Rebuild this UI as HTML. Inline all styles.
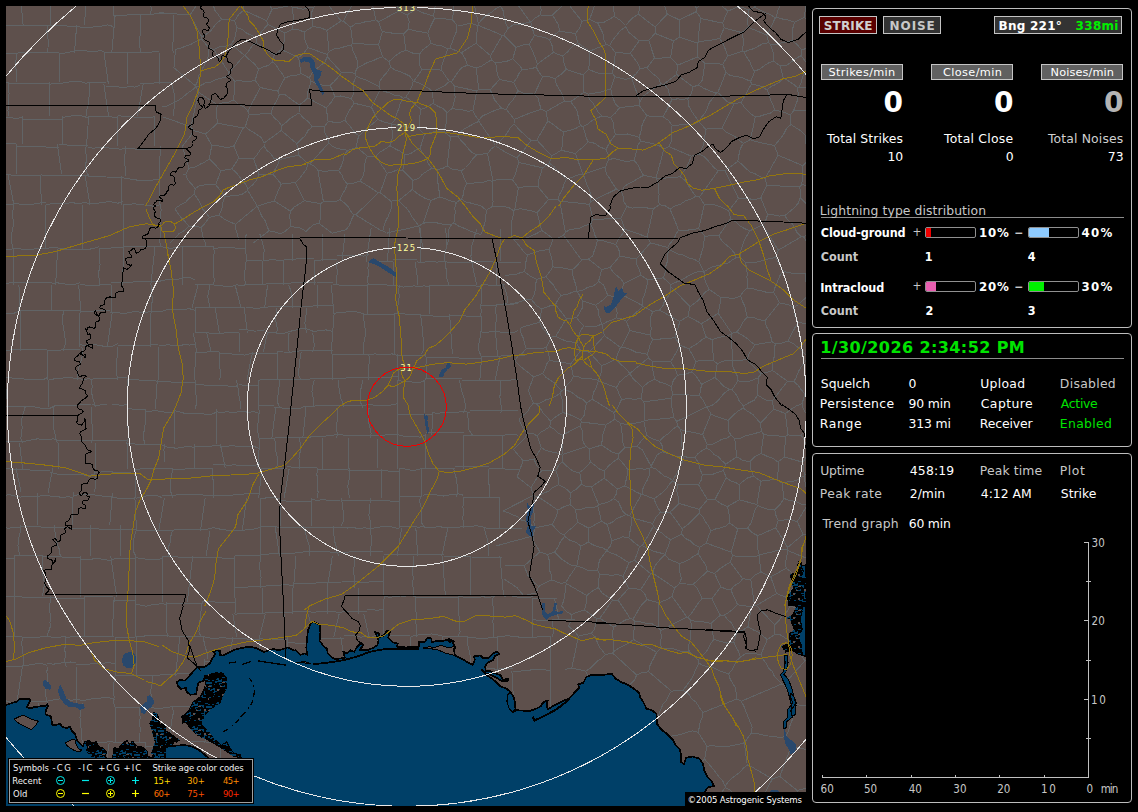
<!DOCTYPE html>
<html lang="en"><head><meta charset="utf-8"><title>Lightning Monitor</title>
<style>
html,body{margin:0;padding:0;background:#000;}
body{width:1138px;height:812px;position:relative;overflow:hidden;font-family:"DejaVu Sans","Liberation Sans",sans-serif;}
.abs{position:absolute;}
.t{position:absolute;white-space:pre;margin:0;padding:0;}
.t i{font-style:normal;}
.panel{position:absolute;border:1px solid #bdbdbd;border-radius:4px;background:#000;}
.b{position:absolute;border:1px solid #c4c4c4;}
.hr{position:absolute;height:1px;background:#8c8c8c;}
.bar{position:absolute;width:49px;height:9px;border:1px solid #909090;border-radius:2px;background:#000;overflow:hidden;}
.bar div{height:9px;}
#map{position:absolute;left:6px;top:6px;width:800px;height:800px;overflow:hidden;background:#5e504c;}
#legend{position:absolute;left:8px;top:758px;width:246px;height:46px;background:#000;}
#legend div{position:absolute;left:1px;top:1px;right:1px;bottom:1px;border:1px solid #a0a0a0;}
#copybox{position:absolute;left:685px;top:792px;width:121px;height:14px;background:#000;}
</style></head><body>
<div id="map"><svg width="800" height="800" viewBox="0 0 800 800"><g shape-rendering="crispEdges"><path d="M-20.0 -20.0 L15.4 -19.6M-21.7 -20.0 L-22.3 -14.3 L-22.5 -8.7 L-21.1 -3.2 L-21.4 2.5 L-20.0 8.0 L-19.8 13.6 L-18.3 19.1M15.4 -22.1 L44.5 -21.7M13.7 -20.0 L17.1 19.1M44.5 -19.2 L49.5 -18.0 L54.5 -17.8 L59.6 -17.3 L64.6 -18.0 L69.6 -16.8 L74.6 -16.4 L79.7 -18.8M44.5 -20.0 L44.5 19.1M79.7 -19.5 L85.2 -20.4 L90.8 -21.4 L96.3 -21.8 L101.9 -21.5 L107.4 -19.2M80.7 -20.0 L80.9 -14.4 L79.8 -8.9 L79.5 -3.3 L79.7 2.3 L79.5 7.9 L78.6 13.5 L78.6 19.1M-20.0 19.1 L-14.0 19.9 L-7.9 19.6 L-1.8 19.3M-20.0 19.1 L-18.8 24.7 L-18.0 30.4 L-19.2 36.0 L-18.4 41.7 L-20.0 47.3M-1.8 19.3 L41.9 19.8M-1.8 19.1 L-1.5 24.7 L-1.5 30.4 L-2.2 36.0 L-1.2 41.7 L-1.8 47.3M41.9 19.8 L69.5 20.1M41.9 19.1 L40.8 24.7 L41.8 30.4 L42.3 36.0 L42.0 41.7 L41.9 47.3M69.5 20.1 L74.9 21.3 L80.3 21.5 L85.7 21.1 L91.2 20.7 L96.6 19.9 L102.0 18.9 L107.4 20.6M70.7 19.1 L68.4 47.3M107.4 -20.0 L144.5 -21.3M107.4 -20.0 L107.4 9.5M144.5 -19.3 L149.7 -19.5 L154.9 -18.8 L160.0 -19.9 L165.2 -19.5 L170.5 -18.5 L175.7 -18.4 L180.8 -20.6M144.5 -20.0 L144.7 -14.1 L145.6 -8.2 L144.7 -2.3 L145.2 3.6 L144.5 9.5M107.4 9.5 L134.6 8.5M109.1 9.5 L105.7 47.3M134.6 8.5 L167.5 7.3M134.6 9.5 L134.0 14.9 L134.6 20.3 L134.6 25.7 L133.9 31.1 L133.4 36.5 L134.0 41.9 L134.6 47.3M167.5 9.5 L167.4 14.9 L168.0 20.3 L167.6 25.7 L167.7 31.1 L166.9 36.5 L166.5 41.9 L167.5 47.3M-20.0 47.3 L10.4 47.2M-20.0 47.3 L-20.0 76.3M10.4 47.2 L15.7 46.3 L21.1 47.4 L26.5 46.3 L31.8 46.1 L37.2 46.7 L42.5 46.8 L47.9 46.5 L53.3 47.0M10.4 47.3 L10.2 53.1 L9.4 58.9 L10.3 64.7 L10.7 70.5 L10.4 76.3M53.3 47.3 L58.5 47.2 L63.7 46.0 L68.9 44.9 L74.1 44.8 L79.4 44.7 L84.6 45.9 L89.8 45.3 L95.0 44.7 L100.2 47.2M53.3 47.3 L53.3 76.3M-20.0 76.3 L-14.4 75.7 L-8.8 76.6 L-3.2 76.4 L2.3 76.2M-20.0 76.3 L-19.1 81.9 L-17.9 87.6 L-18.5 93.3 L-18.7 98.9 L-17.5 104.6 L-20.0 110.2M2.3 77.8 L43.6 77.7M2.3 76.3 L2.1 81.9 L3.1 87.6 L2.5 93.3 L2.2 98.9 L2.0 104.6 L2.3 110.2M43.6 78.3 L49.0 77.1 L54.5 77.6 L59.9 76.5 L65.3 75.7 L70.7 75.7 L76.1 76.0 L81.5 78.1M43.6 76.3 L43.6 110.2M81.5 76.6 L100.2 76.5M83.0 76.3 L83.0 82.0 L83.8 87.8 L82.6 93.4 L82.1 99.0 L80.5 104.6 L80.0 110.2M100.2 46.6 L105.6 46.2 L111.0 46.4 L116.3 46.6 L121.7 46.0M98.1 47.3 L102.4 78.3M121.7 46.7 L153.3 45.8M121.7 47.3 L121.7 78.3M153.3 47.3 L153.3 78.3M100.2 80.3 L105.9 80.5 L111.6 80.7 L117.3 81.7 L123.0 80.6 L128.7 81.1 L134.3 79.4M97.9 78.3 L102.6 110.2M134.3 77.4 L166.5 76.5M137.1 78.3 L131.5 110.2M165.9 78.3 L167.2 83.6 L168.5 88.9 L168.1 94.2 L168.5 99.5 L167.8 104.9 L167.0 110.2M-20.0 110.2 L-14.8 110.5 L-9.6 111.0 L-4.3 110.5 L0.9 111.6 L6.1 111.9 L11.3 112.5 L16.6 110.7M-18.0 110.2 L-19.1 115.7 L-20.5 121.1 L-20.9 126.7 L-21.0 132.3 L-22.0 137.9M16.6 113.1 L56.8 113.7M16.6 110.2 L16.6 137.9M56.8 111.3 L63.0 110.3 L69.2 109.4 L75.4 109.7 L81.6 111.7M56.8 110.2 L56.8 137.9M-20.0 137.5 L10.5 137.9M-18.4 137.9 L-21.6 168.3M10.5 140.6 L53.5 141.2M10.5 137.9 L10.5 168.3M53.5 138.9 L81.6 139.3M51.3 137.9 L55.7 168.3M-20.0 168.3 L4.8 168.6M-22.2 168.3 L-17.8 198.5M4.8 169.4 L35.1 169.9M1.9 168.3 L7.8 198.5M35.1 169.0 L81.6 169.7M35.1 168.3 L34.5 173.3 L34.7 178.3 L34.5 183.4 L35.0 188.4 L35.7 193.4 L35.1 198.5M81.6 110.2 L111.8 111.2M82.7 110.2 L80.5 140.3M111.8 109.6 L117.0 110.2 L122.3 110.8 L127.5 110.9 L132.7 111.9 L138.0 111.7 L143.3 111.4 L148.5 110.8M111.8 110.2 L111.8 140.3M148.5 110.2 L148.5 140.3M81.6 141.2 L87.1 142.3 L92.6 141.5 L98.1 140.9 L103.5 142.2 L109.0 142.4 L114.4 143.3 L119.9 142.4M80.1 140.3 L79.3 145.4 L80.6 150.4 L80.1 155.5 L79.6 160.6 L80.2 165.6 L83.2 170.4M119.9 142.7 L153.8 143.8M119.9 140.3 L119.6 145.3 L118.4 150.3 L118.2 155.3 L119.1 160.4 L119.9 165.4 L119.9 170.4M154.3 140.3 L153.4 170.4M81.6 170.4 L115.7 171.5M79.3 170.4 L83.9 198.5M115.7 171.5 L121.1 172.7 L126.5 173.2 L131.9 174.3 L137.4 174.7 L142.8 174.6 L148.3 173.8 L153.8 172.8M115.7 170.4 L115.7 198.5M153.8 170.4 L153.8 198.5M-20.0 198.7 L7.3 198.0M-21.7 198.5 L-20.3 203.4 L-18.7 208.3 L-19.5 213.4 L-20.3 218.5 L-18.7 223.4 L-19.2 228.4 L-19.0 233.4 L-17.9 238.3 L-18.3 243.4M7.3 197.8 L12.7 198.0 L18.2 198.4 L23.6 198.7 L29.0 197.9 L34.4 196.9 L39.9 197.0M7.3 198.5 L7.0 204.1 L6.4 209.7 L7.6 215.3 L7.0 220.9 L5.8 226.6 L6.0 232.2 L5.9 237.8 L7.3 243.4M39.9 198.9 L45.0 197.7 L50.2 197.6 L55.4 197.4 L60.7 197.4 L65.8 196.5 L71.1 197.5 L76.3 198.0M39.9 198.5 L39.9 243.4M76.3 196.1 L81.4 197.1 L86.6 197.8 L91.6 197.1 L96.7 196.8 L101.8 195.5 L106.9 196.1 L112.1 197.2 L117.1 195.1M76.3 198.5 L76.3 243.4M-20.0 243.4 L-14.5 244.5 L-9.0 243.3 L-3.5 243.4 L1.9 243.5 L7.4 242.8M-20.9 243.4 L-19.4 248.4 L-18.9 253.5 L-18.3 258.5 L-18.6 263.6 L-18.9 268.7 L-19.8 273.8 L-19.1 278.9M7.4 242.7 L12.8 242.9 L18.2 243.2 L23.7 243.9 L29.0 242.8 L34.4 242.2 L39.8 242.4 L45.2 241.8 L50.6 241.7M7.4 243.4 L7.4 278.9M50.6 241.7 L56.0 242.6 L61.4 243.7 L66.7 243.8 L72.0 243.2 L77.4 243.5 L82.7 243.4 L88.1 242.2 L93.4 240.6M51.6 243.4 L49.6 278.9M93.4 242.3 L117.1 241.7M93.4 243.4 L93.4 248.5 L93.4 253.5 L94.1 258.6 L93.1 263.7 L92.5 268.7 L93.3 273.8 L93.4 278.9M117.1 198.1 L122.4 198.8 L127.8 197.7 L133.1 198.6 L138.4 199.0 L143.7 199.4 L149.0 200.6 L154.3 198.4M117.1 198.5 L117.1 240.2M154.3 198.5 L155.1 203.7 L154.6 208.9 L154.9 214.1 L155.0 219.3 L154.1 224.6 L154.4 229.8 L153.8 235.0 L154.3 240.2M117.1 240.2 L147.0 240.4M117.8 240.2 L116.5 278.9M147.0 240.4 L152.9 240.1 L158.8 241.3 L164.6 242.4 L170.6 241.4 L176.5 240.7M149.1 240.2 L144.8 278.9M176.5 240.7 L207.8 240.9M176.5 240.2 L176.5 278.9M207.8 242.7 L213.2 241.7 L218.6 241.2 L224.1 241.3 L229.5 242.1 L234.9 242.3 L240.3 243.0M207.8 240.2 L208.1 245.7 L207.9 251.3 L207.7 256.8 L207.2 262.3 L207.1 267.8 L208.2 273.3 L207.8 278.9M240.3 227.8 L239.4 233.2 L239.2 238.6 L239.6 244.0 L240.2 249.3 L240.3 254.7M253.8 227.8 L255.4 233.1 L256.9 238.4 L258.2 243.7 L257.7 249.2 L257.3 254.7M286.7 227.8 L286.7 254.7M316.1 227.8 L316.1 254.7M339.0 227.8 L336.1 254.7M240.3 254.7 L256.0 254.2M240.3 254.7 L239.2 260.8 L238.9 266.8 L238.5 272.8 L240.3 278.9M256.0 255.2 L261.4 254.2 L266.8 253.7 L272.2 254.2 L277.6 254.5M256.0 254.7 L256.0 278.9M277.6 253.4 L308.5 252.4M277.6 254.7 L277.6 278.9M308.5 254.2 L331.1 253.5M308.5 254.7 L308.5 278.9M331.1 249.2 L336.4 250.0 L341.6 249.6 L346.9 249.7 L352.1 249.3 L357.4 250.1 L362.6 248.1M331.1 254.7 L330.8 260.8 L331.5 266.8 L330.4 272.8 L331.1 278.9M365.1 222.2 L360.1 255.8M383.7 222.2 L383.4 227.8 L382.9 233.4 L382.8 239.0 L382.8 244.7 L381.2 250.2 L381.0 255.8M414.5 222.2 L414.5 255.8M439.0 222.2 L440.1 227.8 L440.5 233.4 L440.7 239.0 L439.7 244.6 L438.7 250.2 L439.0 255.8M362.6 255.8 L387.4 255.9M362.8 255.8 L361.9 261.5 L362.5 267.3 L361.6 273.1 L362.3 278.9M387.4 253.4 L410.7 253.5M387.4 255.8 L387.4 278.9M410.7 255.9 L415.7 256.4 L420.8 255.8 L425.8 255.0 L430.9 256.3 L435.9 255.1 L441.0 256.0M409.6 255.8 L410.0 261.6 L410.5 267.3 L412.0 273.0 L411.7 278.9M441.0 256.0 L468.1 256.1M439.0 255.8 L439.9 261.6 L440.6 267.4 L441.0 273.3 L442.9 278.9M471.1 222.9 L469.1 228.2 L467.7 233.5 L466.0 238.8 L465.4 244.2 L465.0 249.8 L465.1 255.4M494.2 222.9 L494.2 255.4M468.1 255.4 L490.1 256.1M465.6 255.4 L470.6 278.9M490.1 256.1 L514.5 256.9M490.1 255.4 L490.1 278.9M-20.0 277.5 L12.7 276.8M-20.4 278.9 L-19.9 284.1 L-20.0 289.4 L-20.5 294.7 L-20.3 300.0 L-19.6 305.3M12.7 277.0 L45.6 276.3M12.7 278.9 L13.6 284.2 L13.1 289.4 L13.7 294.7 L13.1 300.0 L12.7 305.3M45.6 277.3 L51.3 276.8 L56.9 277.8 L62.6 278.5 L68.3 278.8 L73.9 276.7M45.6 278.9 L45.6 305.3M-20.0 305.3 L-14.3 306.3 L-8.6 307.4 L-3.0 307.4 L2.7 307.3 L8.4 307.1 L14.0 304.5M-20.0 305.3 L-20.6 310.9 L-19.5 316.5 L-20.6 322.1 L-21.3 327.7 L-22.3 333.3 L-22.5 338.9 L-20.0 344.6M14.0 305.0 L57.3 304.0M14.0 305.3 L14.0 344.6M57.3 304.6 L73.9 304.2M57.3 305.3 L56.8 310.9 L56.6 316.5 L57.7 322.1 L58.3 327.7 L59.2 333.3 L59.1 338.9 L57.3 344.6M-20.0 345.6 L-0.1 345.1M-18.6 344.6 L-21.4 374.4M-0.1 344.1 L41.2 343.1M-0.1 344.6 L-0.1 374.4M41.2 344.3 L73.9 343.6M41.2 344.6 L41.2 374.4M73.9 278.9 L79.1 279.0 L84.3 279.6 L89.6 279.8 L94.8 278.9 L100.0 278.2 L105.2 278.0M72.7 278.9 L75.0 307.4M105.2 276.6 L145.1 275.5M105.2 278.9 L105.2 307.4M145.1 275.1 L150.6 276.0 L156.1 274.6 L161.6 273.4 L167.0 273.5 L172.5 273.1 L178.0 271.7 L183.5 271.5 L189.0 273.9M145.1 278.9 L145.4 284.6 L146.1 290.3 L146.1 296.0 L145.1 301.7 L145.1 307.4M73.9 305.4 L103.7 304.6M73.9 307.4 L73.9 341.1M103.7 306.6 L108.9 306.4 L114.1 307.0 L119.2 307.4 L124.3 306.2 L129.5 305.4 L134.7 306.2 L139.8 306.4 L144.9 305.5M106.1 307.4 L101.3 341.1M144.9 305.5 L150.5 305.6 L156.0 305.2 L161.4 303.7 L167.0 304.0 L172.5 303.9 L178.0 303.3 L183.5 302.7 L189.0 304.3M144.9 307.4 L144.9 341.1M73.9 338.7 L79.3 339.4 L84.7 338.3 L90.1 338.8 L95.5 339.9 L100.9 340.5 L106.3 340.3 L111.7 337.7M75.9 341.1 L76.5 346.8 L75.9 352.4 L74.1 357.8 L72.1 363.2 L71.4 368.7 L71.8 374.4M111.7 339.9 L152.4 338.8M111.7 341.1 L111.9 346.6 L111.0 352.2 L110.2 357.8 L110.9 363.3 L110.8 368.9 L111.7 374.4M152.4 339.0 L157.6 339.2 L162.9 338.8 L168.1 339.7 L173.4 339.6 L178.6 338.6 L183.8 339.1 L189.0 338.0M152.7 341.1 L152.1 374.4M189.0 278.9 L203.7 278.6M192.0 278.9 L186.1 301.8M203.7 278.6 L209.4 279.1 L215.1 279.8 L220.7 280.5 L226.4 280.3 L232.0 278.2M203.7 278.9 L202.9 284.6 L201.7 290.3 L202.9 296.1 L203.7 301.8M232.0 279.1 L260.1 278.7M229.1 278.9 L234.9 301.8M260.1 277.8 L284.6 277.4M261.6 278.9 L258.7 301.8M284.6 276.4 L311.1 276.0M282.6 278.9 L284.7 284.4 L285.9 290.1 L286.4 295.9 L286.6 301.8M311.1 277.0 L326.6 276.8M311.1 278.9 L311.1 301.8M189.0 301.8 L211.3 301.5M189.0 301.8 L189.0 326.9M211.3 301.5 L239.8 301.0M209.2 301.8 L213.3 326.9M239.8 301.0 L245.0 301.8 L250.2 302.5 L255.3 301.9 L260.5 301.3 L265.6 300.4 L270.8 300.6M238.3 301.8 L241.3 326.9M270.8 300.6 L301.0 300.1M270.8 301.8 L270.7 306.8 L269.4 311.9 L270.1 316.9 L271.3 321.9 L270.8 326.9M301.0 300.1 L326.6 299.7M301.0 301.8 L300.1 306.8 L299.9 311.9 L298.9 316.9 L299.4 321.9 L301.0 326.9M189.0 326.9 L203.0 326.7M187.2 326.9 L190.9 346.2M203.0 327.2 L208.0 327.9 L213.1 328.0 L218.1 326.9 L223.1 326.4 L228.1 326.8 L233.1 326.7M200.8 326.9 L205.2 346.2M233.1 324.0 L238.4 323.4 L243.6 324.2 L248.9 325.1 L254.1 324.8 L259.4 323.6M233.1 326.9 L233.1 346.2M259.4 325.9 L265.3 326.3 L271.2 327.2 L277.2 327.8 L283.1 325.5M261.4 326.9 L257.3 346.2M283.1 325.5 L289.0 324.3 L294.9 322.9 L300.8 323.0 L306.8 325.1M283.1 326.9 L282.2 333.3 L282.4 339.8 L283.1 346.2M306.8 325.6 L313.4 324.7 L320.0 323.9 L326.6 325.3M306.8 326.9 L307.4 333.3 L308.4 339.8 L306.8 346.2M189.0 346.2 L213.3 345.8M189.9 346.2 L188.2 374.4M213.3 348.0 L218.4 347.8 L223.6 347.5 L228.7 348.7 L233.8 348.5 L239.0 349.1 L244.1 347.6M213.3 346.2 L213.4 351.8 L213.5 357.5 L214.0 363.1 L214.8 368.8 L213.3 374.4M244.1 347.8 L271.4 347.4M247.0 346.2 L245.2 351.7 L244.1 357.4 L243.0 363.0 L242.0 368.7 L241.1 374.4M271.4 345.0 L277.4 346.0 L283.3 346.3 L289.2 345.6 L295.1 344.6M271.4 346.2 L271.4 374.4M295.1 344.5 L326.6 344.1M295.1 346.2 L294.2 351.8 L293.5 357.5 L292.9 363.1 L292.6 368.8 L295.1 374.4M326.6 278.9 L361.2 279.5M325.3 278.9 L327.9 307.6M361.2 278.7 L392.3 279.2M361.2 278.9 L361.2 307.6M392.3 280.1 L397.6 281.1 L402.8 280.5 L408.1 279.9 L413.3 280.4 L418.6 279.9 L423.8 280.6M393.5 278.9 L392.7 284.6 L393.2 290.4 L392.7 296.1 L391.2 301.8 L391.1 307.6M423.8 279.2 L474.8 280.1M423.8 278.9 L423.8 307.6M326.6 307.6 L331.8 306.7 L337.0 306.3 L342.2 305.8 L347.4 305.5 L352.6 306.2 L357.7 308.1M328.1 307.6 L325.1 348.3M357.7 308.1 L388.2 308.7M357.7 307.6 L357.6 312.7 L358.4 317.8 L359.2 322.8 L359.5 327.9 L358.6 333.0 L357.6 338.1 L357.7 343.2 L357.7 348.3M388.2 307.8 L414.9 308.3M388.2 307.6 L388.2 348.3M414.9 309.2 L419.9 309.4 L424.9 309.4 L429.9 310.7 L434.9 310.0 L440.0 310.9 L445.0 309.7M414.2 307.6 L415.1 312.6 L415.7 317.7 L416.5 322.8 L416.3 327.9 L417.4 332.9 L417.7 338.0 L417.8 343.1 L415.5 348.3M445.0 309.7 L474.8 310.3M443.6 307.6 L446.4 348.3M326.6 348.3 L362.7 349.0M326.6 348.3 L326.6 374.4M362.7 349.0 L368.6 347.8 L374.4 348.8 L380.2 348.8 L386.1 347.9 L391.9 349.5M362.7 348.3 L363.5 353.5 L362.9 358.8 L362.3 364.0 L362.2 369.2 L362.7 374.4M391.9 349.5 L419.7 350.0M391.0 348.3 L392.8 374.4M419.7 351.4 L474.8 352.4M419.7 348.3 L420.3 353.5 L420.0 358.8 L420.2 364.0 L420.5 369.2 L419.7 374.4M474.8 278.9 L480.8 278.9 L486.8 279.3 L492.9 279.4 L498.8 278.1M474.8 278.9 L475.4 283.9 L475.9 288.9 L475.9 293.9 L474.8 298.9M497.0 278.9 L499.2 283.7 L500.8 288.5 L501.5 293.6 L500.7 298.9M474.8 299.7 L490.3 299.2M474.8 298.9 L475.1 304.3 L474.9 309.7 L475.8 315.0 L475.9 320.4 L474.8 325.8M490.3 298.5 L511.7 297.9M490.3 298.9 L489.6 304.3 L490.2 309.7 L490.2 315.0 L489.0 320.4 L490.3 325.8M474.8 325.8 L480.1 326.9 L485.3 325.5 L490.5 325.3M474.8 325.8 L474.0 331.7 L472.8 337.7 L472.6 343.6 L474.8 349.6M490.5 325.3 L496.0 326.4 L501.4 326.1 L506.9 326.9 L512.3 324.6M489.5 325.8 L491.5 349.6M474.8 350.9 L491.7 350.4M475.8 349.6 L473.8 374.4M491.7 350.1 L519.4 349.2M494.3 349.6 L489.0 374.4M-20.0 374.5 L0.0 374.1M-20.0 374.4 L-20.0 400.9M0.0 372.0 L5.3 371.9 L10.5 373.0 L15.8 372.9 L21.0 373.2 L26.3 373.5 L31.5 373.7 L36.8 373.8 L42.0 371.2M-1.6 374.4 L-0.8 379.7 L0.4 385.0 L0.0 390.4 L1.7 395.5 L1.7 400.9M42.0 374.3 L47.0 373.1 L52.0 372.3 L57.0 372.0 L62.0 371.8 L67.0 372.0 L72.1 372.5 L77.1 373.5 L82.1 372.8 L87.1 373.4M42.0 374.4 L42.0 400.9M87.1 372.5 L121.0 371.8M85.1 374.4 L86.2 379.7 L85.7 385.2 L86.2 390.5 L88.0 395.7 L89.2 400.9M-20.0 400.9 L17.9 400.1M-17.2 400.9 L-22.8 437.3M17.9 400.1 L23.2 400.4 L28.5 400.8 L33.8 402.0 L39.1 402.2 L44.4 402.1 L49.6 399.5M19.2 400.9 L17.7 406.0 L16.1 411.2 L15.6 416.3 L16.2 421.6 L15.6 426.8 L14.8 432.0 L16.5 437.3M49.6 399.5 L85.5 398.7M47.8 400.9 L47.1 406.3 L47.6 411.4 L47.9 416.7 L47.5 422.0 L48.8 427.1 L49.7 432.2 L51.4 437.3M85.5 398.7 L90.5 399.2 L95.6 398.9 L100.7 399.0 L105.8 399.0 L110.9 398.6 L116.0 399.7 L121.0 398.0M85.5 400.9 L85.3 406.1 L85.0 411.3 L85.7 416.5 L86.6 421.7 L86.8 426.9 L86.6 432.1 L85.5 437.3M-20.0 436.4 L15.1 435.6M-20.0 437.3 L-21.0 442.3 L-22.0 447.4 L-22.5 452.4 L-22.5 457.4 L-20.0 462.5M15.1 435.4 L20.4 435.0 L25.8 433.8 L31.1 432.9 L36.5 433.2 L41.9 434.0 L47.3 432.8 L52.7 434.6M13.5 437.3 L16.6 462.5M52.7 434.7 L89.4 434.0M52.7 437.3 L52.7 462.5M89.4 435.0 L121.0 434.3M89.4 437.3 L89.4 462.5M121.0 373.6 L150.3 374.6M121.0 374.4 L121.0 402.8M150.3 375.5 L189.0 376.8M151.3 374.4 L149.3 402.8M189.0 378.1 L194.5 378.6 L199.9 379.3 L205.3 380.0 L210.8 379.2 L216.2 379.4 L221.6 380.0 L227.0 380.7 L232.5 379.6M189.0 374.4 L189.8 380.1 L189.4 385.8 L190.5 391.5 L190.7 397.2 L189.0 402.8M232.5 378.9 L252.8 379.6M230.4 374.4 L231.7 380.0 L232.6 385.7 L233.2 391.4 L234.5 397.0 L234.6 402.8M121.0 402.8 L139.0 403.5M121.4 402.8 L122.0 408.7 L121.6 414.5 L121.8 420.3 L122.7 426.2 L122.2 432.0 L120.6 437.7M139.0 405.8 L144.8 405.1 L150.6 404.7 L156.4 405.7 L162.2 406.9 L168.0 406.8M139.0 402.8 L139.2 408.7 L139.1 414.5 L139.0 420.3 L137.9 426.1 L137.2 431.9 L139.0 437.7M168.0 404.5 L173.3 405.9 L178.7 407.3 L184.0 407.5 L189.4 407.7 L194.8 407.9 L200.2 408.1 L205.5 408.3 L211.0 405.9M168.0 402.8 L168.0 437.7M211.0 405.9 L216.2 406.4 L221.5 405.6 L226.7 406.7 L231.9 405.9 L237.2 405.5 L242.4 406.3 L247.7 405.6 L252.8 407.4M210.9 402.8 L211.0 437.7M121.0 437.7 L159.0 439.1M121.0 437.7 L121.0 462.5M159.0 440.7 L164.9 441.7 L170.8 442.2 L176.7 441.3 L182.7 440.3 L188.5 441.7M159.0 437.7 L157.8 443.9 L158.9 450.1 L159.0 456.3 L159.0 462.5M188.5 440.1 L194.2 440.7 L199.8 440.6 L205.5 440.1 L211.2 439.2 L216.8 441.0M188.5 437.7 L188.5 462.5M216.8 441.0 L222.0 440.2 L227.2 439.5 L232.3 440.7 L237.4 440.5 L242.6 441.0 L247.8 440.3 L252.8 442.3M214.2 437.7 L219.4 462.5M252.8 374.4 L258.0 373.1 L263.1 373.4 L268.3 373.1 L273.5 373.9M252.8 374.4 L252.8 401.5M273.5 373.9 L308.2 372.9M273.5 374.4 L273.2 379.9 L272.5 385.3 L271.8 390.7 L271.5 396.1 L273.5 401.5M308.2 372.9 L334.9 372.2M308.2 374.4 L306.9 379.9 L305.9 385.3 L307.0 390.7 L307.5 396.1 L308.2 401.5M334.9 372.3 L340.3 372.0 L345.8 371.5 L351.2 371.6 L356.6 371.8M332.6 374.4 L332.5 380.0 L333.7 385.4 L334.3 390.9 L336.3 396.1 L337.3 401.5M356.6 371.8 L391.8 370.8M356.6 374.4 L355.6 379.9 L354.4 385.3 L354.7 390.7 L354.5 396.1 L356.6 401.5M252.8 399.7 L267.8 399.3M252.8 401.5 L253.3 406.6 L252.4 411.8 L252.1 417.0 L251.0 422.1 L252.0 427.3 L252.8 432.4M267.8 401.1 L272.9 401.3 L278.0 402.4 L283.1 402.6 L288.3 403.0 L293.4 402.9 L298.4 400.3M269.8 401.5 L265.8 432.4M298.4 400.3 L330.8 399.4M300.0 401.5 L296.8 432.4M330.8 399.8 L363.6 398.9M330.8 401.5 L331.8 406.6 L331.7 411.8 L330.8 417.0 L330.1 422.1 L331.3 427.3 L330.8 432.4M363.6 398.5 L369.3 399.3 L374.9 400.0 L380.6 399.6 L386.2 398.8 L391.8 397.7M363.1 401.5 L362.6 406.7 L362.7 411.8 L362.8 417.0 L364.0 422.1 L365.1 427.2 L364.0 432.4M252.8 432.5 L258.4 432.1 L263.9 432.3 L269.4 432.0M253.8 432.4 L251.8 462.5M269.4 432.0 L293.2 431.3M268.3 432.4 L269.8 437.4 L269.7 442.4 L270.2 447.4 L271.8 452.3 L271.6 457.3 L270.6 462.5M293.2 431.3 L316.4 430.7M293.2 432.4 L294.4 437.4 L295.0 442.4 L293.8 447.4 L292.9 452.5 L293.7 457.5 L293.2 462.5M316.4 430.7 L321.6 429.8 L326.8 429.3 L332.0 428.3 L337.2 429.0 L342.4 430.0M316.4 432.4 L316.4 462.5M342.4 430.0 L371.4 429.2M342.4 432.4 L342.4 462.5M371.4 429.2 L391.8 428.7M371.0 432.4 L371.8 462.5M391.8 374.4 L397.3 375.4 L402.7 375.6 L408.1 376.2 L413.5 376.9 L418.9 374.3M391.8 374.4 L391.8 406.7M418.9 372.8 L455.6 372.7M418.9 374.4 L418.9 406.7M455.6 374.2 L494.9 374.1M453.4 374.4 L454.5 379.8 L455.6 385.1 L457.5 390.3 L458.8 395.6 L459.5 401.0 L457.8 406.7M494.9 374.1 L500.8 374.9 L506.6 373.6 L512.4 374.0M494.9 374.4 L494.2 379.8 L494.9 385.2 L493.8 390.6 L494.5 396.0 L495.5 401.4 L494.9 406.7M391.8 408.8 L426.1 408.7M391.8 406.7 L391.8 428.8M426.1 406.6 L431.5 407.5 L436.9 406.5 L442.2 406.9 L447.6 406.3 L453.0 406.0 L458.4 405.4 L463.8 406.5M426.3 406.7 L425.9 428.8M463.8 404.9 L512.4 404.7M461.4 406.7 L462.1 412.4 L462.1 418.1 L462.8 423.7 L466.1 428.8M391.8 428.8 L397.4 430.1 L403.0 430.5 L408.6 430.2 L414.2 431.2 L419.7 428.7M391.8 428.8 L391.8 462.5M419.7 427.0 L457.8 426.8M419.7 428.8 L419.7 462.5M457.8 429.8 L496.6 429.6M457.8 428.8 L457.8 462.5M496.6 429.1 L501.9 428.9 L507.1 428.7 L512.4 429.1M496.6 428.8 L496.6 462.5M-20.0 462.7 L-14.6 463.9 L-9.1 463.1 L-3.7 463.3 L1.8 462.8 L7.2 463.3 L12.6 463.8M-21.9 462.5 L-18.1 486.5M12.6 463.6 L44.3 464.7M10.0 462.5 L15.2 486.5M44.3 466.5 L49.8 467.7 L55.2 469.0 L60.7 468.0 L66.2 468.1 L71.6 468.2 L77.1 468.7 L82.5 470.1 L88.0 468.1M46.6 462.5 L42.1 486.5M88.0 467.2 L93.3 466.3 L98.5 465.3 L103.8 465.2 L108.9 466.7 L114.2 466.0 L119.4 466.7 L124.6 466.7 L129.7 468.7M88.0 462.5 L88.9 468.5 L89.7 474.5 L89.8 480.5 L88.0 486.5M-20.0 486.5 L-14.2 487.6 L-8.4 489.0 L-2.5 487.1M-20.0 486.5 L-20.6 491.9 L-19.8 497.4 L-20.7 502.8 L-20.8 508.2 L-20.3 513.6 L-20.0 519.1M-2.5 489.5 L3.3 488.7 L8.9 489.9 L14.6 491.1 L20.4 490.1 L26.0 490.9 L31.8 490.7M-2.5 486.5 L-2.5 519.1M31.8 490.3 L36.8 489.6 L41.8 489.5 L46.8 490.6 L51.8 490.6 L56.8 491.8 L61.8 490.7 L66.8 491.5M31.8 486.5 L31.8 519.1M66.8 489.6 L72.3 488.8 L77.8 489.0 L83.3 488.4 L88.7 489.0 L94.2 489.6 L99.6 491.0 L105.1 490.9M67.1 486.5 L66.5 519.1M105.1 490.9 L111.2 492.1 L117.4 492.2 L123.5 492.9 L129.7 491.8M106.4 486.5 L103.8 519.1M-20.0 520.9 L-14.2 520.7 L-8.5 520.6 L-2.8 521.8 L3.0 522.1 L8.8 521.4 L14.5 522.1M-21.8 519.1 L-18.2 550.0M14.5 520.3 L51.5 521.6M14.5 519.1 L14.6 524.2 L13.4 529.4 L12.3 534.5 L12.0 539.7 L12.6 544.8 L14.5 550.0M51.5 521.6 L84.3 522.7M48.8 519.1 L48.8 524.4 L49.7 529.5 L50.4 534.7 L52.0 539.8 L53.8 544.7 L54.1 550.0M84.3 522.7 L114.2 523.8M84.3 519.1 L84.3 550.0M114.2 523.0 L129.7 523.5M114.2 519.1 L114.2 550.0M129.7 463.1 L167.0 462.2M129.7 462.5 L129.7 491.6M167.0 463.3 L207.1 462.3M167.0 462.5 L165.8 468.3 L164.6 474.1 L164.5 479.9 L164.7 485.8 L167.0 491.6M207.1 458.2 L212.3 458.4 L217.6 458.6 L222.9 459.5 L228.1 458.7 L233.4 459.6 L238.6 459.9 L243.9 459.7 L249.1 459.6 L254.3 457.0M206.9 462.5 L207.2 491.6M129.7 492.2 L134.9 491.2 L140.0 490.0 L145.2 489.3 L150.4 489.2 L155.6 491.5M128.9 491.6 L130.6 525.0M155.6 489.4 L196.8 488.3M158.5 491.6 L152.7 525.0M196.8 489.8 L238.4 488.7M199.2 491.6 L194.4 525.0M238.4 487.7 L254.3 487.3M240.6 491.6 L236.3 525.0M129.7 525.0 L164.2 524.1M129.7 525.0 L128.5 530.0 L127.3 535.0 L127.5 540.0 L127.2 545.0 L129.7 550.0M164.2 524.1 L202.1 523.1M166.2 525.0 L164.9 529.9 L164.6 535.0 L162.9 539.8 L162.6 544.9 L162.2 550.0M202.1 522.8 L207.3 521.7 L212.5 522.8 L217.8 523.9 L223.0 524.2 L228.2 524.6 L233.5 524.4 L238.7 524.0 L243.9 523.8 L249.1 522.8 L254.3 521.4M204.0 525.0 L200.1 550.0M254.3 462.5 L280.6 463.0M255.9 462.5 L252.7 492.4M280.6 460.9 L311.5 461.6M283.2 462.5 L278.0 492.4M311.5 463.6 L316.8 463.7 L322.1 463.6 L327.4 463.1 L332.7 463.5 L338.0 463.2 L343.3 464.3M311.5 462.5 L310.8 468.4 L312.0 474.4 L311.5 480.4 L312.1 486.4 L311.5 492.4M343.3 464.3 L375.6 464.9M343.3 462.5 L343.6 468.4 L343.0 474.4 L341.7 480.4 L342.8 486.4 L343.3 492.4M375.6 465.0 L381.5 464.9 L387.5 466.0 L393.5 465.3M375.6 462.5 L375.6 492.4M254.3 492.4 L261.0 491.9 L267.6 491.8 L274.2 492.8M254.3 492.4 L254.3 520.3M274.2 494.9 L305.4 495.5M274.2 492.4 L274.2 520.3M305.4 493.4 L311.3 494.5 L317.3 493.4 L323.3 494.7 L329.2 494.1 L335.2 494.0M305.4 492.4 L305.4 520.3M335.2 494.0 L364.3 494.6M335.2 492.4 L336.4 497.9 L336.9 503.5 L337.6 509.1 L337.5 514.7 L335.2 520.3M364.3 494.6 L393.5 495.2M364.3 492.4 L364.0 497.9 L363.5 503.5 L362.9 509.1 L364.1 514.7 L364.3 520.3M254.3 520.3 L271.3 520.6M254.3 520.3 L254.3 550.0M271.3 521.2 L300.5 521.8M269.1 520.3 L273.5 550.0M300.5 521.2 L330.1 521.8M297.6 520.3 L299.0 525.1 L300.2 530.0 L301.7 534.9 L303.4 539.7 L303.8 544.8 L303.4 550.0M330.1 521.8 L335.8 521.8 L341.5 522.0 L347.2 521.8 L352.9 522.3 L358.7 521.9 L364.4 522.6M327.4 520.3 L327.5 525.4 L328.1 530.4 L328.7 535.4 L330.0 540.2 L330.7 545.2 L332.7 550.0M364.4 522.6 L370.2 521.6 L376.1 520.7 L381.9 520.6 L387.7 521.2 L393.5 523.2M364.4 520.3 L364.5 526.2 L365.6 532.2 L365.5 538.1 L364.2 544.0 L364.4 550.0M393.5 462.5 L398.9 463.0 L404.3 464.1 L409.8 464.2 L415.2 462.6M393.5 462.5 L393.5 490.8M415.2 462.6 L449.1 462.7M415.2 462.5 L415.2 490.8M449.1 460.8 L482.9 460.9M447.5 462.5 L449.0 468.0 L450.6 473.6 L451.1 479.3 L451.7 485.0 L450.7 490.8M482.9 462.9 L513.3 463.1M482.0 462.5 L483.8 490.8M393.5 490.2 L416.5 490.3M393.5 490.8 L393.5 521.6M416.5 489.1 L421.6 488.8 L426.8 488.2 L431.9 489.1 L437.0 490.1 L442.1 489.2 L447.3 488.4 L452.4 487.8 L457.5 489.3M414.1 490.8 L413.9 496.1 L415.0 501.2 L415.5 506.4 L415.3 511.7 L415.6 516.8 L418.9 521.6M457.5 491.2 L493.3 491.4M457.5 490.8 L457.9 496.0 L456.7 501.1 L457.9 506.2 L456.6 511.3 L457.4 516.5 L457.5 521.6M493.3 490.8 L493.3 521.6M393.5 520.5 L410.8 520.6M395.7 521.6 L391.3 550.0M410.8 521.8 L416.4 520.5 L422.0 521.5 L427.7 521.6 L433.3 520.4 L438.9 521.9M409.8 521.6 L411.8 550.0M438.9 521.8 L444.1 521.5 L449.2 521.3 L454.4 521.0 L459.5 520.5 L464.7 520.6 L469.8 519.7 L475.0 520.4 L480.1 522.0M441.9 521.6 L435.9 550.0M480.1 522.0 L516.3 522.2M478.0 521.6 L479.5 527.2 L481.4 532.7 L482.2 538.4 L482.4 544.2 L482.2 550.0M-20.0 552.2 L8.5 552.7M-20.0 550.0 L-20.0 590.5M8.5 549.4 L36.9 549.9M8.5 550.0 L8.5 590.5M36.9 550.7 L74.6 551.3M36.9 550.0 L36.9 555.0 L36.7 560.1 L36.3 565.2 L37.1 570.2 L38.1 575.3 L38.1 580.3 L37.1 585.4 L36.9 590.5M74.6 553.2 L80.1 553.7 L85.6 553.2 L91.2 552.0 L96.6 553.3 L102.2 554.3 L107.7 553.7M74.6 550.0 L74.6 590.5M107.7 552.4 L129.7 552.7M104.7 550.0 L110.6 590.5M-20.0 590.5 L8.3 590.9M-18.5 590.5 L-17.7 595.6 L-17.6 600.8 L-17.1 605.9 L-17.7 611.0 L-19.2 616.1 L-20.2 621.1 L-19.4 626.3 L-21.5 631.3M8.3 590.9 L42.6 591.4M8.3 590.5 L8.3 631.3M42.6 591.9 L78.3 592.5M44.5 590.5 L44.1 595.6 L43.8 600.7 L43.9 605.8 L44.4 611.0 L44.0 616.1 L44.1 621.3 L42.4 626.3 L40.6 631.3M78.3 590.3 L107.1 590.8M78.3 590.5 L78.3 631.3M107.1 594.4 L129.7 594.7M108.3 590.5 L106.0 631.3M129.7 551.7 L135.0 552.4 L140.3 553.2 L145.7 553.1 L151.0 553.7 L156.4 552.3M129.7 550.0 L129.7 596.2M156.4 550.6 L184.0 551.3M156.4 550.0 L156.4 596.2M184.0 551.3 L228.9 552.3M186.7 550.0 L181.3 596.2M129.7 597.9 L134.8 599.2 L140.0 600.2 L145.2 599.0 L150.4 598.6 L155.6 597.5 L160.7 598.6M129.7 596.2 L129.7 631.3M160.7 597.1 L195.8 597.9M160.3 596.2 L161.1 631.3M195.8 595.7 L228.9 596.5M196.3 596.2 L195.6 601.2 L194.9 606.2 L194.8 611.2 L193.5 616.2 L193.1 621.2 L193.0 626.2 L195.3 631.3M228.9 550.0 L254.5 549.1M228.9 550.0 L228.9 581.9M254.5 548.3 L288.8 547.1M254.5 550.0 L254.1 555.3 L253.5 560.6 L254.3 566.0 L255.1 571.3 L254.2 576.6 L254.5 581.9M288.8 546.3 L323.8 545.1M290.0 550.0 L287.6 581.9M323.8 546.6 L349.0 545.8M326.4 550.0 L321.2 581.9M349.0 546.0 L377.6 545.0M349.0 550.0 L348.9 555.3 L348.1 560.6 L347.5 566.0 L348.4 571.3 L348.4 576.6 L349.0 581.9M228.9 581.5 L256.2 580.5M228.8 581.9 L228.0 587.2 L229.1 592.4 L229.1 597.6 L229.7 602.9 L228.9 608.1M256.2 581.0 L261.3 579.8 L266.4 579.8 L271.5 579.8 L276.6 578.6 L281.7 578.8 L286.9 579.9M256.2 581.9 L256.2 608.1M286.9 577.8 L321.6 576.6M286.9 581.9 L286.9 608.1M321.6 576.5 L352.5 575.4M321.6 581.9 L321.6 608.1M352.5 576.3 L357.6 576.9 L362.5 576.1 L367.5 575.3 L372.6 575.9 L377.6 575.4M352.3 581.9 L352.7 608.1M228.9 608.1 L256.4 607.1M226.9 608.1 L230.8 631.3M256.4 607.1 L278.8 606.3M259.3 608.1 L253.5 631.3M278.8 606.3 L305.1 605.4M278.8 608.1 L278.8 631.3M305.1 606.2 L330.4 605.3M302.3 608.1 L307.9 631.3M330.4 606.2 L360.5 605.2M333.1 608.1 L327.7 631.3M360.5 603.5 L366.2 603.5 L371.9 604.4 L377.6 602.9M357.9 608.1 L363.2 631.3M377.6 548.7 L407.2 549.0M377.6 550.0 L377.6 589.0M407.2 548.7 L437.9 549.0M407.2 550.0 L407.1 555.6 L407.0 561.1 L406.7 566.7 L407.2 572.3 L406.6 577.8 L407.4 583.4 L407.2 589.0M437.9 550.7 L464.9 551.0M436.4 550.0 L439.3 589.0M464.9 551.0 L495.7 551.4M464.9 550.0 L464.9 589.0M493.9 550.0 L497.5 589.0M377.6 590.5 L383.0 591.1 L388.5 590.9 L393.9 590.0 L399.4 590.1 L404.8 589.5 L410.2 590.9M378.1 589.0 L377.1 631.3M410.2 591.5 L451.7 592.0M410.2 589.0 L409.2 594.3 L409.5 599.5 L409.9 604.8 L410.6 610.1 L409.6 615.4 L410.3 620.7 L410.6 626.0 L410.2 631.3M451.7 589.9 L456.8 591.0 L461.9 591.4 L467.0 591.6 L472.1 591.4 L477.2 590.7 L482.3 591.9 L487.4 590.3M451.9 589.0 L452.7 594.3 L452.6 599.6 L452.0 604.8 L453.0 610.1 L453.9 615.4 L453.8 620.7 L454.1 626.0 L451.6 631.3M487.4 590.3 L493.0 589.3 L498.6 590.1 L504.3 589.6 L509.9 590.8 L515.5 591.7 L521.1 592.0 L526.7 590.7M487.4 589.0 L486.8 594.3 L487.0 599.5 L487.4 604.8 L487.7 610.1 L486.8 615.4 L487.7 620.7 L487.2 626.0 L487.4 631.3M526.7 592.7 L550.6 592.9M526.7 592.2 L526.7 613.9M548.1 592.2 L549.6 597.5 L551.0 602.9 L551.4 608.6 L553.1 613.9M526.7 613.9 L533.2 614.1 L539.6 614.6 L546.1 614.0M526.7 613.9 L526.7 631.3M546.1 613.0 L568.9 613.2M546.1 613.9 L546.7 619.7 L547.8 625.5 L546.1 631.3M-20.0 631.3 L16.5 630.5M-22.4 631.3 L-21.3 636.2 L-20.2 641.1 L-18.2 645.8 L-18.0 650.8 L-18.0 655.9 L-17.6 660.9M16.5 631.2 L22.0 631.0 L27.4 631.6 L32.9 631.2 L38.3 630.5 L43.7 630.8 L49.2 631.5 L54.6 631.1 L60.1 630.2M16.5 631.3 L15.8 637.2 L16.3 643.1 L17.2 649.1 L17.9 655.0 L16.5 660.9M60.1 631.1 L109.0 630.0M59.8 631.3 L59.8 637.2 L58.7 643.2 L59.5 649.1 L58.5 655.0 L60.3 660.9M-20.0 660.9 L-14.4 659.8 L-8.8 659.9 L-3.2 660.9 L2.4 661.0 L8.0 660.4 L13.6 660.2M-22.2 660.9 L-21.4 666.0 L-21.5 671.2 L-19.6 676.2 L-19.9 681.4 L-18.6 686.5 L-17.5 691.5 L-17.8 696.8M13.6 660.2 L19.1 659.9 L24.7 658.6 L30.2 657.9 L35.7 657.4 L41.3 659.6M16.4 660.9 L10.8 696.8M41.3 657.3 L47.1 658.2 L52.9 657.4 L58.6 656.2 L64.4 656.0 L70.2 656.6M41.3 660.9 L40.9 666.0 L41.8 671.2 L40.9 676.3 L40.1 681.4 L39.6 686.5 L40.1 691.7 L41.3 696.8M70.2 658.9 L75.7 658.1 L81.3 658.7 L86.8 657.4 L92.4 657.1 L97.9 657.1 L103.5 656.6 L109.0 658.1M70.2 660.9 L70.2 696.8M-20.0 696.8 L-14.0 695.7 L-8.0 695.6 L-2.0 694.2 L4.1 696.2M-20.0 696.8 L-21.2 701.8 L-21.3 706.9 L-22.3 712.0 L-21.8 717.0 L-22.5 722.1 L-21.9 727.1 L-22.5 732.2 L-20.0 737.3M4.1 696.2 L33.5 695.6M4.1 696.8 L4.1 737.3M33.5 695.6 L38.8 695.7 L44.2 694.5 L49.5 693.7 L54.8 692.6 L60.2 693.5 L65.6 694.3 L70.9 693.1 L76.3 694.7M32.3 696.8 L34.7 737.3M76.3 694.7 L81.7 693.6 L87.2 692.7 L92.6 692.2 L98.1 691.7 L103.5 691.8 L109.0 693.9M76.3 696.8 L75.2 701.8 L74.2 706.9 L74.0 712.0 L74.5 717.0 L75.0 722.1 L75.6 727.1 L75.8 732.2 L76.3 737.3M109.0 631.3 L130.5 631.0M109.0 631.3 L109.0 669.8M130.5 631.0 L135.7 630.4 L140.8 629.7 L145.9 629.7 L151.1 630.0 L156.2 629.3 L161.3 629.7 L166.5 630.5 L171.6 630.5M130.5 631.3 L130.5 669.8M171.6 630.7 L199.4 630.4M173.8 631.3 L169.4 669.8M109.0 669.8 L146.0 669.3M109.0 669.8 L108.2 675.1 L107.2 680.3 L107.3 685.6 L108.2 690.9 L107.4 696.1 L109.0 701.4M146.0 669.3 L151.4 669.6 L156.7 668.3 L162.0 668.7 L167.4 668.9 L172.7 667.7 L178.0 667.0 L183.4 668.1 L188.7 668.5 L194.1 669.6 L199.4 668.7M146.0 669.8 L146.6 675.1 L145.4 680.3 L144.6 685.6 L145.6 690.9 L145.9 696.1 L146.0 701.4M109.0 701.4 L133.8 701.1M109.0 701.4 L109.0 737.3M133.8 701.1 L139.2 701.8 L144.7 701.4 L150.1 702.5 L155.5 702.2 L161.0 701.5 L166.4 700.7M133.8 701.4 L133.4 706.5 L134.3 711.6 L133.4 716.8 L134.2 721.9 L134.0 727.0 L133.1 732.1 L133.8 737.3M166.4 700.3 L199.4 699.9M166.4 701.4 L167.5 706.5 L166.3 711.6 L165.5 716.8 L164.7 721.9 L164.9 727.0 L165.2 732.1 L166.4 737.3M199.4 631.3 L204.5 632.1 L209.5 632.5 L214.6 631.7 L219.7 632.0 L224.8 632.3M197.1 631.3 L198.3 636.8 L199.5 642.2 L201.7 647.5 L201.7 653.2M224.8 632.4 L253.4 633.5M227.0 631.3 L222.6 653.2M253.4 632.4 L258.9 633.3 L264.5 632.9 L270.0 633.3 L275.6 633.6 L281.1 633.5M253.4 631.3 L253.4 653.2M281.1 636.7 L302.4 637.5M281.5 631.3 L280.8 653.2M199.4 655.4 L205.9 654.9 L212.5 654.7 L218.9 656.1M198.4 653.2 L200.4 685.6M218.9 654.0 L248.4 655.2M218.9 653.2 L219.3 658.6 L218.1 664.0 L217.0 669.4 L216.4 674.8 L216.9 680.2 L218.9 685.6M248.4 656.2 L271.8 657.1M250.2 653.2 L249.8 658.6 L250.4 664.2 L250.9 669.7 L250.3 675.1 L249.5 680.5 L246.6 685.6M271.8 655.3 L302.4 656.5M271.8 653.2 L272.1 658.6 L272.8 664.0 L272.5 669.4 L273.3 674.8 L273.7 680.2 L271.8 685.6M199.4 686.3 L206.0 685.3 L212.5 685.7 L218.9 687.0M199.4 685.6 L199.4 713.8M218.9 684.0 L243.1 684.9M216.7 685.6 L218.0 691.2 L219.7 696.7 L219.9 702.5 L221.3 708.0 L221.1 713.8M243.1 687.5 L248.2 686.8 L253.3 687.4 L258.4 686.9 L263.4 688.4 L268.5 688.5M243.1 685.6 L243.5 691.3 L243.0 696.9 L243.7 702.6 L244.1 708.2 L243.1 713.8M268.5 688.4 L302.4 689.7M268.5 685.6 L269.2 691.3 L269.9 696.9 L271.0 702.6 L270.2 708.2 L268.5 713.8M199.4 713.8 L227.0 714.9M200.2 713.8 L199.1 719.6 L199.9 725.6 L199.7 731.5 L198.6 737.3M227.0 715.2 L256.7 716.4M227.0 713.8 L227.0 737.3M256.7 716.1 L282.5 717.2M256.7 713.8 L256.8 719.7 L256.9 725.5 L255.9 731.4 L256.7 737.3M282.5 717.2 L302.4 718.0M282.5 713.8 L282.5 737.3M302.4 632.6 L337.6 632.3M300.1 631.3 L304.8 666.7M337.6 629.1 L343.1 629.7 L348.6 629.9 L354.1 631.1 L359.6 630.8 L365.1 631.4 L370.6 628.8M334.8 631.3 L340.3 666.7M370.6 629.8 L404.5 629.5M371.6 631.3 L369.6 666.7M404.5 630.4 L409.8 629.4 L415.1 628.4 L420.4 628.5 L425.8 627.9 L431.1 628.9 L436.4 630.1M404.5 631.3 L404.5 666.7M302.4 666.7 L331.8 666.4M302.4 666.7 L301.2 671.9 L301.3 677.1 L300.2 682.4 L299.9 687.6 L299.9 692.8 L302.4 698.1M331.8 666.4 L373.6 666.0M332.1 666.7 L331.5 698.1M373.6 666.0 L379.2 665.2 L384.8 666.3 L390.4 665.7 L396.0 665.9 L401.6 665.3 L407.1 665.7M373.6 666.7 L373.6 698.1M407.1 666.9 L436.4 666.6M405.8 666.7 L408.5 698.1M302.4 698.6 L333.4 698.3M304.0 698.1 L300.8 737.3M333.4 697.8 L368.8 697.5M333.9 698.1 L332.9 737.3M368.8 697.5 L405.2 697.1M371.0 698.1 L369.9 703.6 L369.8 709.3 L370.0 714.9 L370.5 720.7 L369.1 726.2 L369.0 731.8 L366.6 737.3M405.2 695.7 L436.4 695.4M403.0 698.1 L407.4 737.3M436.4 630.3 L461.9 630.1M436.4 631.3 L436.8 636.8 L437.3 642.4 L437.1 647.9 L436.0 653.5 L435.9 659.0 L436.4 664.6M461.9 631.2 L467.7 631.9 L473.6 632.2 L479.4 632.5 L485.2 631.2 L491.0 631.0M461.9 631.3 L461.4 636.8 L462.6 642.4 L463.9 647.9 L464.4 653.5 L464.4 659.0 L461.9 664.6M491.0 630.8 L496.4 630.5 L501.7 629.6 L507.1 630.5 L512.5 631.0 L517.9 632.0 L523.3 631.8 L528.6 631.5 L534.0 630.3 L539.4 630.6 L544.8 630.6M491.0 631.3 L491.0 664.6M436.4 662.7 L470.0 662.6M436.4 664.6 L435.1 670.2 L434.6 675.8 L434.1 681.5 L434.5 687.1 L433.9 692.7 L433.9 698.3 L436.4 703.9M470.0 662.2 L475.2 662.3 L480.5 662.0 L485.8 662.6 L491.1 663.4 L496.4 662.1 L501.7 662.6 L507.0 662.0M470.0 664.6 L469.4 670.2 L470.4 675.8 L470.9 681.5 L470.7 687.1 L471.7 692.7 L471.4 698.3 L470.0 703.9M507.0 665.2 L512.4 665.5 L517.8 664.5 L523.2 664.2 L528.6 663.4 L534.0 663.2 L539.4 663.9 L544.8 665.0M505.9 664.6 L508.0 703.9M436.4 705.3 L442.0 704.6 L447.6 705.4 L453.2 706.5 L458.7 705.1M436.3 703.9 L436.5 737.3M458.7 703.8 L463.9 703.0 L469.0 703.9 L474.2 704.2 L479.4 704.7 L484.5 704.2 L489.7 703.7M460.7 703.9 L456.8 737.3M489.7 703.7 L494.8 704.6 L500.0 704.3 L505.1 704.8 L510.3 705.3 L515.5 705.8 L520.6 705.8 L525.8 703.5M491.2 703.9 L490.0 709.4 L490.0 715.0 L489.5 720.6 L489.1 726.1 L487.9 731.6 L488.1 737.3M525.8 703.5 L532.1 704.6 L538.4 705.2 L544.8 703.4M528.5 703.9 L527.5 709.5 L525.6 714.9 L525.5 720.6 L523.7 726.0 L521.7 731.3 L523.1 737.3M544.9 631.3 L544.7 667.0M544.8 667.0 L544.8 706.1M544.8 706.1 L544.5 711.3 L543.3 716.5 L542.5 721.7 L543.0 726.9 L543.8 732.1 L544.8 737.3M-20.0 737.3 L1.9 737.8M-20.0 737.3 L-19.3 742.6 L-19.1 748.0 L-17.8 753.4 L-17.5 758.7 L-17.5 764.1 L-17.5 769.5 L-20.0 774.8M1.9 737.8 L7.2 738.3 L12.5 737.6 L17.8 736.9 L23.1 737.5 L28.4 736.5 L33.6 737.5 L38.9 738.3 L44.2 738.9M1.9 737.3 L1.9 774.8M44.2 738.9 L49.5 739.3 L54.8 738.5 L60.2 738.1 L65.5 737.7 L70.8 738.8 L76.1 738.5 L81.4 739.9M44.2 737.3 L42.9 742.6 L43.9 748.0 L43.1 753.4 L43.4 758.7 L43.7 764.1 L43.6 769.5 L44.2 774.8M-20.0 774.8 L-13.9 773.9 L-7.8 774.6 L-1.7 775.1 L4.4 775.5M-20.0 774.8 L-20.0 804.5M4.4 774.7 L9.4 774.7 L14.5 776.0 L19.5 776.1 L24.6 776.8 L29.6 777.3 L34.7 776.2 L39.8 775.7M2.7 774.8 L4.6 780.6 L6.1 786.5 L7.1 792.4 L7.3 798.4 L6.0 804.5M39.8 776.5 L45.0 776.4 L50.2 777.2 L55.4 777.8 L60.6 777.5 L65.8 778.8 L71.0 777.8 L76.2 777.6 L81.4 777.6M37.1 774.8 L38.4 779.7 L39.5 784.6 L39.2 789.8 L40.3 794.7 L41.9 799.5 L42.4 804.5M-20.0 804.0 L5.1 804.6M-20.0 804.5 L-19.0 810.0 L-19.0 815.5 L-19.3 820.9 L-20.0 826.4 L-20.9 831.9 L-21.9 837.4 L-20.0 842.8M5.1 807.1 L10.6 806.9 L15.9 808.3 L21.4 807.8 L26.8 808.5 L32.2 809.9 L37.6 808.8 L43.1 808.3 L48.5 808.2M5.1 804.5 L5.1 842.8M48.5 806.3 L81.4 807.2M48.5 804.5 L48.5 842.8M81.4 736.3 L100.8 736.9M81.4 737.3 L81.2 742.9 L80.0 748.6 L79.5 754.2 L78.9 759.9 L79.8 765.5 L81.4 771.2M100.8 735.8 L139.9 737.0M103.1 737.3 L98.5 771.2M139.9 740.2 L184.7 741.7M139.9 737.3 L138.8 742.9 L137.9 748.6 L137.4 754.2 L137.4 759.9 L137.4 765.5 L139.9 771.2M81.4 771.2 L114.3 772.3M80.8 771.2 L82.0 802.7M114.3 772.3 L141.7 773.2M114.3 771.2 L114.3 802.7M141.7 773.2 L184.7 774.6M140.0 771.2 L140.4 776.4 L142.1 781.6 L143.2 786.8 L143.4 792.0 L144.2 797.3 L143.4 802.7M81.4 802.7 L108.5 803.6M81.4 802.7 L81.8 807.7 L81.6 812.7 L80.3 817.7 L80.4 822.8 L80.1 827.8 L81.0 832.8 L80.8 837.8 L81.4 842.8M108.5 803.6 L113.7 803.1 L119.0 803.1 L124.2 804.1 L129.4 804.3 L134.7 804.5 L139.9 804.3 L145.2 804.8M106.1 802.7 L110.8 842.8M145.2 804.8 L150.8 805.7 L156.5 805.9 L162.1 806.4 L167.7 806.4 L173.4 806.9 L179.0 807.9 L184.7 806.1M145.8 802.7 L145.5 807.7 L144.6 812.7 L145.3 817.7 L145.7 822.8 L145.7 827.8 L145.7 832.8 L145.0 837.8 L144.6 842.8M184.7 735.4 L214.2 736.6M184.9 737.3 L184.5 758.9M214.2 738.1 L219.6 738.1 L225.0 739.3 L230.4 738.7 L235.8 739.6 L241.2 739.2M214.2 737.3 L214.2 758.9M241.2 737.6 L271.2 738.7M242.7 737.3 L239.7 758.9M271.2 742.3 L298.6 743.4M271.2 737.3 L271.2 758.9M298.6 741.7 L304.0 741.8 L309.4 741.9 L314.9 740.9 L320.3 740.8 L325.7 742.2 L331.1 743.0M296.7 737.3 L300.4 758.9M184.7 756.8 L190.8 756.4 L196.8 757.6 L202.9 758.9 L209.0 757.7M184.7 758.9 L184.7 785.8M209.0 759.9 L215.0 760.8 L221.0 760.1 L227.0 759.6 L233.0 760.8M208.8 758.9 L208.7 764.3 L207.9 769.7 L207.7 775.1 L207.0 780.5 L209.3 785.8M233.0 761.8 L267.1 763.1M232.7 758.9 L233.2 785.8M267.1 762.6 L272.2 763.3 L277.3 764.5 L282.4 764.7 L287.5 765.8 L292.7 763.6M267.1 758.9 L267.1 785.8M292.7 760.9 L297.9 761.6 L303.0 761.5 L308.1 763.0 L313.3 763.7 L318.5 762.0M292.4 758.9 L293.0 785.8M318.5 764.2 L331.1 764.7M320.9 758.9 L320.7 764.4 L321.0 770.0 L320.5 775.5 L318.6 780.7 L316.1 785.8M184.7 786.0 L211.7 787.0M184.2 785.8 L184.3 790.8 L183.6 795.9 L183.1 800.9 L183.0 806.0 L182.6 811.0 L185.2 815.9M211.7 784.9 L235.0 785.8M211.7 785.8 L211.7 815.9M235.0 788.1 L261.3 789.1M235.7 785.8 L236.1 790.9 L235.7 795.9 L236.5 801.0 L236.2 806.0 L235.2 811.0 L234.2 815.9M261.3 788.2 L267.2 789.5 L273.1 789.2 L279.0 788.2 L284.9 789.1M260.2 785.8 L262.5 815.9M284.9 791.5 L290.1 791.4 L295.4 791.7 L300.6 792.9 L305.8 792.0 L311.1 792.1 L316.3 792.7M284.9 785.8 L284.9 815.9M316.3 791.0 L323.7 791.8 L331.1 791.6M314.4 785.8 L318.2 815.9M184.7 816.6 L190.5 817.2 L196.3 816.9 L202.1 817.3 L207.9 817.6M187.3 815.9 L186.6 821.4 L184.6 826.6 L182.5 831.8 L181.3 837.1 L182.2 842.8M207.9 814.5 L213.0 815.2 L218.2 815.2 L223.4 815.4 L228.6 814.5 L233.8 814.7 L239.0 815.7M207.9 815.9 L208.0 821.3 L208.8 826.7 L207.6 832.1 L207.1 837.5 L207.9 842.8M239.0 818.1 L244.1 817.0 L249.2 817.0 L254.3 816.2 L259.3 816.4 L264.3 819.1M239.0 815.9 L239.0 842.8M264.3 819.1 L296.8 820.3M264.3 815.9 L263.1 821.3 L263.4 826.7 L262.3 832.1 L263.4 837.5 L264.3 842.8M296.8 820.3 L302.5 821.1 L308.3 820.3 L314.0 820.6 L319.6 821.4 L325.4 820.4 L331.1 821.7M295.2 815.9 L297.1 821.2 L296.6 826.7 L296.9 832.1 L298.8 837.3 L298.5 842.8M331.1 739.5 L336.6 738.4 L342.1 737.1 L347.7 736.6 L353.3 739.0M333.6 737.3 L328.6 771.2M353.3 734.9 L394.9 734.0M353.3 737.3 L353.3 771.2M394.9 734.6 L431.4 733.8M396.8 737.3 L395.3 742.8 L393.9 748.4 L393.3 754.0 L393.1 759.7 L392.9 765.4 L393.0 771.2M431.4 736.4 L478.4 735.4M433.2 737.3 L429.5 771.2M331.1 771.2 L353.8 770.7M331.1 771.2 L331.1 809.0M353.8 770.8 L386.2 770.2M353.8 771.2 L353.8 809.0M386.2 769.0 L391.6 768.8 L397.0 767.9 L402.3 766.7 L407.7 767.8 L413.1 766.9 L418.5 768.3M386.2 771.2 L386.1 776.6 L386.4 782.0 L386.1 787.4 L385.1 792.8 L385.2 798.2 L384.5 803.6 L386.2 809.0M418.5 769.5 L458.5 768.6M418.5 771.2 L419.6 776.6 L418.6 782.0 L419.4 787.4 L420.5 792.8 L421.0 798.2 L420.6 803.6 L418.5 809.0M458.5 768.5 L478.4 768.1M458.5 771.2 L458.5 809.0M331.1 809.0 L362.5 808.3M331.1 809.0 L331.1 842.8M362.5 809.7 L367.7 809.1 L373.0 808.6 L378.2 808.6 L383.5 808.4 L388.8 809.6 L394.1 810.1 L399.4 810.8 L404.6 808.8M362.5 809.0 L361.4 814.7 L361.3 820.3 L361.9 825.9 L362.6 831.6 L361.8 837.2 L362.5 842.8M404.6 808.6 L409.8 808.6 L415.1 808.9 L420.3 809.1 L425.5 807.9 L430.8 808.5 L436.1 809.1 L441.3 808.2 L446.5 807.7M404.0 809.0 L405.1 842.8M446.5 808.3 L478.4 807.7M446.5 809.0 L446.8 814.7 L447.3 820.3 L446.2 825.9 L446.9 831.6 L447.1 837.2 L446.5 842.8M478.4 737.3 L483.8 737.9 L489.1 737.9 L494.4 737.7 L499.7 736.3 L504.9 735.1 L510.3 736.6M478.4 737.3 L477.7 743.1 L476.5 748.9 L477.1 754.7 L477.4 760.5 L476.6 766.3 L478.4 772.1M510.3 736.6 L542.9 735.9M510.3 737.3 L510.3 772.1M542.9 735.9 L574.8 735.3M542.9 737.3 L542.9 772.1M478.4 772.1 L513.0 771.4M480.7 772.1 L476.1 802.4M513.0 771.5 L518.5 771.8 L524.0 772.2 L529.5 771.5 L534.9 771.5 L540.4 771.6 L545.8 770.6 L551.3 771.1 L556.8 770.6 L562.3 770.5M513.0 772.1 L513.9 777.1 L513.1 782.2 L512.2 787.3 L512.7 792.3 L512.3 797.4 L513.0 802.4M478.4 802.4 L483.5 801.7 L488.6 802.0 L493.7 802.3 L498.8 801.5 L503.9 801.4 L509.0 800.7 L514.1 801.7M478.4 802.4 L478.4 842.8M514.1 801.7 L545.4 801.1M512.8 802.4 L513.4 807.5 L514.4 812.5 L514.8 817.5 L514.3 822.6 L513.7 827.7 L514.8 832.7 L515.3 837.8 L515.4 842.8M544.2 802.4 L546.5 842.8M828.2 3.9 L824.7 8.1 L822.2 12.9 L818.8 17.2 L816.8 22.4M802.6 819.3 L807.8 817.0 L812.7 814.4 L816.8 810.5 L821.2 807.1 L826.3 804.7 L831.5 802.6 L835.1 798.0M812.2 348.4 L820.6 352.8M812.2 348.4 L812.8 343.1 L813.4 337.8 L813.9 332.5 L814.5 327.2 L815.1 321.9M815.1 321.9 L822.3 316.7M802.6 819.3 L797.9 817.3 L793.2 815.3 L788.4 813.4M788.4 813.4 L783.2 815.5 L777.8 817.1 L772.7 819.5M827.8 583.7 L827.7 578.4M833.3 682.4 L829.7 686.0 L825.6 689.0 L822.7 693.2 L819.7 697.4 L815.5 700.3M827.1 723.3 L824.8 718.7 L822.5 714.1 L820.2 709.5 L817.9 704.9 L815.5 700.3M664.9 281.0 L668.7 284.9 L672.6 288.8 L676.4 292.7 L680.2 296.6 L684.0 300.5M664.9 281.0 L664.6 278.6M664.6 278.6 L669.2 276.4 L674.1 274.9 L678.6 272.2 L683.0 269.5 L687.6 267.3 L692.4 265.5 L698.0 266.1M684.0 300.5 L688.3 297.5 L692.3 294.3 L695.7 290.3 L699.1 286.4 L703.3 283.4M703.3 283.4 L700.3 278.0 L698.5 272.2 L698.0 266.1M653.4 304.1 L658.5 306.9 L663.5 309.7 L668.6 312.6 L673.7 315.4M653.4 304.1 L656.8 300.1 L658.5 295.1 L661.8 291.0 L664.3 286.5 L664.9 281.0M673.7 315.4 L682.0 310.3M682.0 310.3 L683.0 305.4 L684.0 300.5M682.0 310.3 L686.5 312.8 L691.0 315.2 L695.5 317.7M712.3 307.4 L706.7 310.8 L701.1 314.2 L695.5 317.7M712.3 307.4 L713.2 302.1 L714.2 296.9 L715.1 291.7M715.1 291.7 L709.2 287.5 L703.3 283.4M614.9 212.4 L616.9 217.8 L619.0 223.2M614.9 212.4 L617.8 206.4 L620.7 200.4M619.0 223.2 L624.5 225.2 L630.0 227.1 L635.5 229.0 L641.0 230.9M620.7 200.4 L625.9 202.1 L631.3 201.6 L636.7 201.2 L642.0 202.1 L647.3 202.8M641.0 230.9 L642.3 225.3 L643.6 219.7 L644.8 214.0 L646.1 208.4 L647.3 202.8M711.8 86.6 L710.4 87.0M711.8 86.6 L716.8 91.1 L721.5 95.8 L728.2 97.8M715.8 122.1 L718.3 117.3 L720.7 112.4 L723.2 107.5 L725.7 102.6 L728.2 97.8M715.8 122.1 L710.4 122.5 L704.9 122.8 L699.5 123.1M699.5 123.1 L696.2 119.3 L692.9 115.5M710.4 87.0 L707.4 91.7 L703.6 95.9 L701.6 101.2 L699.5 106.4 L695.9 110.8 L692.9 115.5M748.9 338.7 L746.0 343.3 L743.0 347.8 L741.3 353.0M748.9 338.7 L744.5 335.4 L740.3 331.7 L735.5 328.9 L730.9 325.9M730.9 325.9 L725.8 327.5M741.3 353.0 L734.2 354.7 L727.0 354.8M725.8 327.5 L725.3 328.2M725.3 328.2 L725.6 333.5 L725.8 338.8 L726.1 344.0 L726.4 349.3 L726.7 354.6M712.3 307.4 L715.7 312.4 L719.1 317.4 L722.5 322.5 L725.8 327.5M715.1 291.7 L721.7 291.9 L728.4 292.4 L734.7 289.7M741.4 311.0 L739.9 305.6 L738.9 300.1 L736.3 295.1 L734.7 289.7M741.4 311.0 L737.3 315.5 L734.6 321.0 L730.9 325.9M752.0 371.9 L755.3 367.9M752.0 371.9 L747.2 373.9 L742.3 375.6 L737.3 375.9 L732.0 374.8M732.0 374.8 L731.1 369.7 L728.7 365.0 L726.5 360.2 L727.0 354.8M755.3 367.9 L751.6 364.3 L747.8 360.9 L744.3 357.2 L741.3 353.0M732.0 374.8 L729.0 379.3 L726.0 383.7M711.3 357.7 L710.1 364.5 L708.9 371.3M711.3 357.7 L716.2 355.5 L721.3 354.0 L726.7 354.6M708.9 371.3 L713.5 375.7 L717.8 380.4 L723.5 383.6M726.0 383.7 L723.5 383.6M653.4 304.1 L646.7 305.6M657.4 271.8 L664.6 278.6M657.4 271.8 L652.1 272.4 L646.8 273.0 L641.5 273.6M641.5 273.6 L641.0 278.9 L639.7 284.0 L638.5 289.1 L636.2 294.1 L636.3 299.5M636.3 299.5 L636.7 300.4M646.7 305.6 L641.7 303.0 L636.7 300.4M707.5 354.5 L701.5 354.7 L695.6 354.9 L689.6 355.1M707.5 354.5 L707.2 349.3 L706.8 344.2 L706.5 339.0 L706.2 333.8M706.2 333.8 L700.2 331.1M700.2 331.1 L695.8 333.9 L691.8 337.2 L687.3 339.8 L682.9 342.6M682.9 342.6 L686.3 348.9 L689.6 355.1M711.3 357.7 L707.5 354.5M685.4 365.8 L689.5 369.5 L692.6 373.9 L695.7 378.4M685.4 365.8 L688.3 360.8 L689.6 355.1M708.9 371.3 L704.5 373.7 L700.1 376.0 L695.7 378.4M725.3 328.2 L718.9 330.1 L712.4 331.5 L706.2 333.8M695.5 317.7 L697.8 324.4 L700.2 331.1M685.4 365.8 L678.8 368.6 L671.6 369.1M671.6 369.1 L668.7 362.1 L664.7 355.8M682.9 342.6 L674.2 339.5M664.7 355.8 L667.9 350.4 L671.0 344.9 L674.2 339.5M673.7 315.4 L672.5 320.9 L670.2 326.1 L669.3 331.7M674.2 339.5 L669.3 331.7M666.8 388.5 L665.3 380.9M666.8 388.5 L665.1 392.2M665.1 392.2 L659.6 392.9 L654.1 393.7 L648.7 394.4 L643.2 395.1 L637.7 395.9M665.3 380.9 L660.0 377.8 L653.9 376.3 L648.7 373.0M648.7 373.0 L642.1 376.5 L636.4 381.5M636.4 381.5 L636.0 387.1 L635.1 392.6M635.1 392.6 L637.7 395.9M693.6 389.3 L694.5 383.8 L695.7 378.4M693.6 389.3 L688.2 389.1 L682.9 389.0 L677.5 388.8 L672.1 388.7 L666.8 388.5M671.6 369.1 L667.4 374.4 L665.3 380.9M664.7 355.8 L658.5 355.7 L652.4 355.7 L646.3 355.4M646.3 355.4 L646.6 361.3 L647.2 367.2 L648.7 373.0M693.6 389.3 L697.4 394.9 L700.4 401.0M723.5 383.6 L718.6 386.7 L714.8 391.2 L711.1 395.7 L706.4 399.1 L700.9 401.2M700.4 401.0 L700.9 401.2M665.1 392.2 L665.2 398.8 L666.7 405.2 L667.8 411.7M637.7 395.9 L639.0 402.0 L638.8 408.2 L638.3 414.4M638.3 414.4 L644.2 413.8 L650.1 413.3 L656.0 412.8 L661.9 412.2 L667.8 411.7M700.4 401.0 L695.5 403.4 L690.5 405.8 L685.6 408.2 L680.7 410.6 L675.7 413.0 L670.8 415.3M667.8 411.7 L670.8 415.3M804.2 418.2 L809.9 419.2 L815.7 419.7 L821.5 418.6M804.2 418.2 L802.7 412.9 L800.4 407.8 L797.2 403.1 L796.2 397.6M821.3 385.7 L815.6 385.9 L809.9 385.6 L804.4 387.2 L798.8 387.7M821.3 385.7 L823.1 391.6 L825.0 397.5 L826.8 403.4 L828.6 409.3M828.6 409.3 L825.9 414.6 L821.5 418.6M798.8 387.7 L797.5 392.7 L796.2 397.6M801.8 350.5 L799.3 355.7 L795.6 360.2 L792.6 365.2 L790.5 370.7 L787.9 375.8M801.8 350.5 L806.9 348.8 L812.2 348.4M820.6 352.8 L821.9 357.9 L823.2 363.0 L825.7 367.7 L826.7 372.9 L828.2 377.9M787.9 375.8 L792.1 379.2 L795.2 383.8 L798.8 387.7M828.2 377.9 L825.2 382.2 L821.3 385.7M827.9 439.8 L826.3 434.5 L824.7 429.2 L823.1 423.9 L821.5 418.6M827.9 439.8 L823.4 445.6M826.0 460.7 L825.8 455.5 L826.1 450.3 L823.4 445.6M778.3 451.0 L778.6 445.8 L778.9 440.7 L779.2 435.5 L779.6 430.3M778.3 451.0 L784.5 452.7 L790.7 454.5 L796.9 456.2M796.9 456.2 L800.4 450.7 L804.0 445.3M804.0 445.3 L801.1 439.8 L798.2 434.4 L795.2 429.0M795.2 429.0 L788.6 429.7 L781.9 428.8M781.9 428.8 L779.6 430.3M826.0 460.7 L821.3 465.9 L815.9 470.2M823.4 445.6 L816.9 445.5 L810.5 445.4 L804.0 445.3M815.9 470.2 L810.2 469.0 L804.4 468.1 L798.6 469.1M798.6 469.1 L797.3 462.7 L796.9 456.2M804.2 418.2 L799.7 423.6 L795.2 429.0M779.3 407.5 L780.0 412.9 L780.6 418.2 L781.3 423.5 L781.9 428.8M779.3 407.5 L784.6 403.7 L790.1 400.1 L796.2 397.6M812.4 529.3 L813.0 522.7 L813.6 516.1 L814.2 509.5M814.2 509.5 L820.1 508.1 L826.1 506.6M826.1 506.6 L828.4 501.0 L830.7 495.4 L833.0 489.7M815.9 470.2 L816.6 475.5 L818.7 480.4 L820.4 485.3M833.0 489.7 L826.8 487.3 L820.4 485.3M787.7 301.8 L788.8 309.2 L792.0 315.9M787.7 301.8 L783.3 299.1 L778.4 297.8 L773.3 296.8M773.3 296.8 L769.8 301.3 L766.3 305.7 L762.7 310.1 L759.2 314.5M792.0 315.9 L789.5 320.7 L787.0 325.4 L784.4 330.2 L781.9 334.9M759.2 314.5 L760.2 320.1 L763.1 325.0 L764.7 330.4 L766.2 335.8M781.9 334.9 L775.8 337.2 L769.3 337.8M769.3 337.8 L766.2 335.8M741.4 311.0 L747.5 311.5 L753.2 313.8 L759.2 314.5M734.7 289.7 L737.4 285.3 L741.5 282.0M741.5 282.0 L746.8 282.6 L751.8 284.4 L757.0 285.2 L762.1 286.8 L767.5 286.5M767.5 286.5 L770.8 291.5 L773.3 296.8M801.8 350.5 L798.1 347.1 L794.6 343.3 L790.6 340.3 L786.6 337.1 L781.9 334.9M815.1 321.9 L809.3 320.4 L803.6 318.9 L797.8 317.4 L792.0 315.9M748.9 338.7 L754.6 337.8 L760.4 336.8 L766.2 335.8M787.9 375.8 L781.5 375.2M781.5 375.2 L776.5 371.6 L771.6 368.1 L766.6 364.5M766.6 364.5 L766.0 359.0 L767.6 353.8 L768.6 348.5 L768.4 343.1 L769.3 337.8M755.3 367.9 L761.0 366.2 L766.6 364.5M514.1 322.5 L515.1 327.7 L517.5 332.5 L518.7 337.7 L520.3 342.7M520.3 342.7 L516.6 346.9 L511.8 350.1 L508.9 355.0M773.8 770.4 L778.1 773.9 L782.5 777.5 L786.9 781.0 L791.2 784.5M773.8 770.4 L775.7 765.3 L777.6 760.3 L779.6 755.2 L781.5 750.1 L783.4 745.0 L785.4 739.9M785.4 739.9 L791.0 741.7 L796.9 742.6 L802.6 744.1 L808.6 744.6 L814.3 746.2M811.7 779.1 L813.5 774.2 L815.0 769.2 L816.2 764.3 L817.0 759.3 L817.7 754.2 L815.9 748.8M811.7 779.1 L806.6 780.4 L801.5 781.8 L796.3 783.1 L791.2 784.5M815.9 748.8 L814.3 746.2M835.1 798.0 L830.8 795.4 L826.2 793.1 L822.4 789.8 L818.1 787.1 L814.9 783.1 L811.7 779.1M788.4 813.4 L788.9 807.6 L789.5 801.9 L790.1 796.1 L790.7 790.3 L791.2 784.5M827.1 723.3 L824.3 727.7 L821.5 732.2 L819.4 737.0 L817.4 741.9 L814.3 746.2M735.2 695.2 L737.9 700.2 L739.9 705.4 L741.9 710.6 L744.0 715.8 L746.1 720.9 L745.4 727.0M735.2 695.2 L740.3 693.1 L745.4 690.9 L750.5 688.7 L755.6 686.6 L760.7 684.4 L765.8 682.2 L770.8 680.1 L775.9 677.9M745.4 727.0 L751.1 727.4 L756.7 729.0 L762.4 730.0 L768.2 730.2 L773.8 731.7 L779.7 730.5M779.7 730.5 L782.2 725.5 L783.8 720.1 L785.9 714.9 L787.6 709.6 L788.3 703.9 L790.9 698.9M790.9 698.9 L786.9 694.2 L784.0 688.9 L780.9 683.6 L778.0 678.3M775.9 677.9 L778.0 678.3M815.5 700.3 L809.4 700.0 L803.2 699.6 L797.0 699.3 L790.9 698.9M785.4 739.9 L782.5 735.2 L779.7 730.5M772.7 819.5 L768.2 816.0 L763.8 812.6 L759.4 809.1 L754.9 805.7 L750.5 802.3M773.8 770.4 L766.4 772.9M766.4 772.9 L763.7 777.8 L761.1 782.7 L758.4 787.6 L755.8 792.5 L753.2 797.4 L750.5 802.3M721.0 833.8 L723.7 829.6 L727.2 825.8 L730.0 821.6 L731.7 816.9 L734.2 812.5 L736.6 808.1 L738.7 803.5M738.7 803.5 L744.6 802.9 L750.5 802.3M721.0 833.8 L716.4 831.3 L712.7 827.7 L708.0 825.2 L703.9 822.1 L699.9 818.8 L695.5 815.9 L691.5 812.6 L689.1 807.4M672.6 818.2 L678.1 814.6 L683.6 811.0 L689.1 807.4M781.7 541.5 L785.6 538.2 L789.4 534.9 L793.3 531.7 L797.2 528.4M781.7 541.5 L778.7 536.6 L775.7 531.7 L772.8 526.8 L769.8 522.0M772.2 514.7 L769.8 522.0M772.2 514.7 L778.6 513.9 L784.9 513.8 L791.2 515.6M791.2 515.6 L794.2 522.0 L797.2 528.4M753.3 549.0 L758.8 547.4 L764.5 546.4 L769.9 544.6 L775.5 543.5 L781.4 543.6M753.3 549.0 L751.6 542.7 L751.0 536.2 L751.7 529.7M751.7 529.7 L757.7 527.1 L763.7 524.5 L769.8 522.0M781.4 543.6 L781.7 541.5M751.7 529.7 L746.1 526.7 L741.6 522.2M741.6 522.2 L745.0 517.0 L747.0 511.1 L748.4 504.9 L751.7 499.6M751.7 499.6 L757.2 501.7 L762.7 503.5 L768.7 503.7M768.7 503.7 L769.9 509.3 L772.2 514.7M777.9 492.4 L777.3 487.4 L776.7 482.3 L776.1 477.3M777.9 492.4 L783.5 494.6 L789.6 495.3 L795.0 498.1 L801.1 498.8M776.1 477.3 L781.7 475.8 L787.5 475.1 L792.9 473.2 L797.9 470.0M797.9 470.0 L798.9 475.2 L800.0 480.5 L801.0 485.8 L802.0 491.0 L803.1 496.3M803.1 496.3 L802.1 498.5M801.1 498.8 L802.1 498.5M768.7 503.7 L774.0 498.7 L777.9 492.4M791.2 515.6 L794.6 510.1 L798.0 504.5 L801.1 498.8M798.6 469.1 L797.9 470.0M778.3 451.0 L772.0 456.0M772.0 456.0 L772.6 461.7 L771.8 467.4 L771.0 473.0M771.0 473.0 L776.1 477.3M820.4 485.3 L815.7 487.6 L812.0 491.2 L807.8 494.1 L803.1 496.3M814.2 509.5 L810.2 505.8 L806.1 502.1 L802.1 498.5M812.4 529.3 L811.2 530.3M811.2 530.3 L804.3 529.0 L797.2 528.4M733.5 478.6 L733.5 483.6 L733.5 488.7 L733.4 493.7M733.5 478.6 L737.6 474.8 L742.1 471.7 L747.5 470.1M747.5 470.1 L754.8 475.2M754.8 475.2 L753.8 481.0 L752.8 486.9 L751.9 492.7 L750.9 498.6M733.4 493.7 L739.2 495.4 L745.1 497.0 L750.9 498.6M721.3 500.7 L727.3 497.2 L733.4 493.7M721.3 500.7 L714.8 497.7 L709.1 493.5M709.1 493.5 L711.8 488.0 L714.6 482.6 L717.3 477.1 L720.1 471.6M720.1 471.6 L724.2 474.6 L729.0 476.3 L733.5 478.6M751.7 499.6 L750.9 498.6M771.0 473.0 L765.6 473.8 L760.2 474.5 L754.8 475.2M741.6 522.2 L731.7 523.0M721.3 500.7 L722.7 506.0 L723.6 511.4 L723.7 516.8M731.7 523.0 L727.7 519.9 L723.7 516.8M833.3 682.4 L830.5 678.2 L828.0 673.7 L826.0 668.8 L822.3 665.2 L819.7 660.8 L815.8 657.3 L811.9 653.8M778.0 678.3 L781.5 674.4 L784.9 670.5 L788.4 666.6 L791.9 662.7 L795.4 658.8 L798.9 654.9M811.9 653.8 L805.3 653.1 L798.9 654.9M704.7 525.0 L702.4 531.0 L700.2 537.1M704.7 525.0 L709.5 523.0 L714.6 521.8 L719.5 520.2 L723.7 516.8M731.7 523.0 L730.1 528.8 L728.4 534.6 L726.8 540.4 L725.2 546.1M725.2 546.1 L720.2 544.3 L715.2 542.5 L710.2 540.7 L705.2 538.9 L700.2 537.1M753.3 549.0 L753.0 549.7M753.0 549.7 L747.6 550.6 L742.4 550.5 L737.1 550.3 L731.8 550.8 L726.5 549.1M725.2 546.1 L726.5 549.1M570.4 284.9 L570.0 279.4 L568.2 274.2 L566.7 268.8 L567.0 263.3M570.4 284.9 L565.4 286.7 L560.4 288.5 L555.1 289.2M555.1 289.2 L550.8 285.0 L547.9 279.6 L543.9 275.2 L539.9 270.7M567.0 263.3 L561.9 263.0 L557.0 262.0 L552.0 261.6 L547.0 260.9M539.9 270.7 L543.5 265.8 L547.0 260.9M637.6 169.4 L632.7 172.0 L628.0 174.9 L623.1 177.5 L618.4 180.3 L615.4 185.5M637.6 169.4 L634.4 164.4 L631.9 158.9 L628.0 154.3M615.4 185.5 L610.5 183.1M628.0 154.3 L622.9 155.2 L617.7 155.0 L612.6 153.7 L607.5 152.4 L602.4 154.0M602.4 154.0 L599.6 160.7M610.5 183.1 L606.9 177.9 L603.7 172.5 L600.1 167.4 L599.6 160.7M614.9 212.4 L609.3 212.6 L603.7 212.8 L598.1 213.0 L592.5 213.3 L586.9 213.5M619.0 223.2 L616.1 228.4 L612.6 233.2 L609.8 238.4M591.4 234.4 L597.7 234.9 L603.7 236.7 L609.8 238.4M591.4 234.4 L588.8 229.2 L587.3 223.5 L584.6 218.3M586.9 213.5 L584.6 218.3M575.6 254.0 L572.5 249.9 L569.5 245.7 L566.5 241.6 L563.5 237.5 L560.4 233.3 L557.4 229.2M575.6 254.0 L582.4 253.2M557.4 229.2 L559.4 226.7M591.4 234.4 L590.2 239.6 L588.3 244.5 L586.9 249.6 L582.4 253.2M584.6 218.3 L579.3 219.3 L574.6 221.9 L569.3 222.9 L563.9 223.3 L559.4 226.7M644.5 236.8 L641.0 230.9M644.5 236.8 L640.9 240.9 L637.4 245.0 L633.8 249.0 L630.2 253.1M609.8 238.4 L612.9 243.8 L613.8 250.0M630.2 253.1 L624.8 252.1 L619.3 251.0 L613.8 250.0M657.4 271.8 L659.3 266.3 L659.7 260.5 L661.5 255.0 L661.6 249.2 L662.8 243.5M698.1 265.9 L695.4 260.8 L692.7 255.7M662.8 243.5 L667.7 245.7 L672.5 248.1 L677.9 249.2 L682.6 252.0 L687.9 253.2 L692.7 255.7M641.5 273.6 L634.8 269.3M644.5 236.8 L650.2 238.4 L656.0 239.9 L661.7 241.5M630.2 253.1 L631.0 258.7 L633.6 263.8 L634.8 269.3M662.8 243.5 L661.7 241.5M653.3 198.8 L647.3 202.8M653.3 198.8 L659.2 199.7 L664.1 203.1M664.1 203.1 L666.1 208.4 L668.6 213.6 L670.5 219.0 L672.6 224.2M661.7 241.5 L664.3 237.1 L667.9 233.3 L669.8 228.5 L672.6 224.2M816.8 22.4 L813.8 23.5M822.7 47.9 L819.5 42.8 L815.0 38.8 L811.4 34.0M811.4 34.0 L813.5 29.0 L813.8 23.5M819.2 -26.6 L817.1 -20.3 L815.1 -14.0 L813.0 -7.7M819.2 -26.6 L814.3 -30.1 L808.9 -32.6M808.9 -32.6 L803.8 -29.4 L799.1 -25.7 L793.4 -23.7M813.0 -7.7 L806.6 -6.5 L800.5 -4.1M800.5 -4.1 L795.6 -9.1 L790.9 -14.4M793.4 -23.7 L790.9 -14.4M826.3 -1.1 L819.3 -3.7 L813.0 -7.7M826.2 -28.4 L819.2 -26.6M828.2 3.9 L826.3 -1.1M798.2 11.5 L804.1 14.6 L810.0 17.7 L813.8 23.5M798.2 11.5 L799.0 6.3 L799.7 1.1 L800.5 -4.1M619.5 -13.7 L616.0 -21.8M619.5 -13.7 L624.2 -11.7 L628.8 -9.5M628.8 -9.5 L632.8 -13.5 L636.9 -17.5 L640.9 -21.5 L644.9 -25.6M603.4 -27.1 L598.1 -25.0 L592.8 -22.7M616.0 -21.8 L609.7 -24.4 L603.4 -27.1M588.6 -10.9 L589.7 -17.2 L592.8 -22.7M588.6 -10.9 L582.4 -9.8 L576.1 -9.4 L569.8 -11.3M569.8 -11.3 L569.8 -16.8 L569.8 -22.3 L569.8 -27.7 L569.8 -33.2M619.5 -13.7 L615.1 -10.1 L611.5 -5.5 L607.6 -1.4M588.6 -10.9 L590.8 -6.4M607.6 -1.4 L602.0 -3.1 L596.4 -4.7 L590.8 -6.4M715.8 122.1 L719.7 125.7 L724.4 128.2 L729.1 130.7 L733.1 134.2 L737.2 137.4M728.2 97.8 L735.2 96.5M737.2 137.4 L744.3 133.6M744.3 133.6 L745.6 127.9 L746.9 122.2 L748.1 116.4 L749.4 110.7M749.4 110.7 L745.0 108.0 L741.3 104.6 L738.0 100.8 L735.2 96.5M711.8 86.6 L713.8 81.6 L715.9 76.5 L717.9 71.4 L719.9 66.4M744.7 75.3 L739.8 73.3 L734.9 71.3 L729.6 70.4 L724.3 69.6 L719.9 66.4M744.7 75.3 L745.4 78.0M745.4 78.0 L742.9 82.6 L740.3 87.2 L737.8 91.9 L735.2 96.5M672.6 224.2 L679.3 224.6 L685.9 223.4 L692.6 222.7M692.7 255.7 L694.4 250.7 L695.8 245.6 L697.4 240.6 L697.9 235.2 L699.1 230.1M699.1 230.1 L692.6 222.7M824.6 202.3 L819.1 203.1 L813.8 204.6 L808.6 206.5M824.6 202.3 L823.8 197.2 L823.6 192.0 L823.1 186.9 L822.5 181.8M808.6 206.5 L805.0 202.7 L801.4 199.0 L797.7 195.3 L794.1 191.5M795.9 178.4 L801.1 180.1 L806.3 181.4 L811.5 182.9 L817.0 182.3 L822.5 181.8M795.9 178.4 L793.9 181.0M794.1 191.5 L794.3 186.3 L793.9 181.0M732.5 192.4 L738.1 192.8 L743.7 192.9 L749.3 193.6 L754.8 191.9M732.5 192.4 L730.2 187.7 L728.0 183.1 L725.7 178.5 L723.5 173.9 L721.3 169.3 L719.0 164.7M719.0 164.7 L723.3 161.5 L727.6 158.4 L731.8 155.2M731.8 155.2 L736.1 158.5 L739.9 162.5 L744.1 166.0 L749.3 167.8 L753.9 170.6 L759.0 172.5M754.8 191.9 L757.8 185.6 L760.8 179.3M759.0 172.5 L760.8 179.3M737.2 137.4 L734.2 143.0 L732.9 149.0 L731.8 155.2M744.3 133.6 L749.1 135.4 L753.9 136.4 L758.8 137.8 L763.8 138.3 L768.6 139.6M768.6 139.6 L770.3 144.4 L772.1 149.2M772.1 149.2 L769.5 153.9 L766.9 158.5 L764.3 163.2 L761.7 167.9 L759.0 172.5M778.7 209.7 L783.4 205.8 L788.1 202.0 L792.0 197.5 L794.1 191.5M778.7 209.7 L773.0 210.1 L767.3 208.8 L761.6 208.8M761.6 208.8 L759.3 203.1 L757.1 197.5 L754.8 191.9M793.9 181.0 L788.3 180.7 L782.8 180.4 L777.3 180.2 L771.8 179.9 L766.3 179.6 L760.8 179.3M772.1 149.2 L777.0 151.3 L782.0 153.4 L786.9 155.5 L791.9 157.6 L796.8 159.7M795.9 178.4 L796.2 172.1 L796.5 165.9 L796.8 159.7M699.5 123.1 L699.1 128.3 L698.3 133.4 L697.7 138.5 L695.4 143.2 L693.2 147.9M719.0 164.7 L712.2 164.8M693.2 147.9 L697.7 150.4 L701.5 153.9 L704.8 157.9 L708.1 161.8 L712.2 164.8M698.4 198.6 L703.5 198.9 L708.6 199.0 L713.4 200.4 L718.1 202.4 L722.6 204.8M698.4 198.6 L693.5 191.0M722.6 204.8 L725.9 200.6 L729.2 196.5 L732.5 192.4M712.2 164.8 L709.1 169.2 L706.0 173.5 L702.9 177.9 L699.8 182.2 L696.6 186.6 L693.5 191.0M664.1 203.1 L669.0 199.9 L674.6 198.2 L679.3 194.9 L684.8 193.1 L689.8 190.3M698.4 198.6 L696.9 204.6 L695.5 210.7 L694.0 216.7 L692.6 222.7M689.8 190.3 L693.5 191.0M657.9 143.1 L662.6 140.5M657.9 143.1 L656.3 148.9 L654.8 154.7 L653.2 160.5 L651.6 166.3 L650.0 172.0M662.6 140.5 L668.3 142.9 L674.0 145.4 L679.7 147.8 L685.4 150.3M685.4 150.3 L683.1 155.7 L680.9 161.2 L677.1 165.8 L674.1 170.8M674.1 170.8 L668.3 171.3 L662.5 171.8 L656.7 172.3 L650.8 172.9M650.8 172.9 L650.0 172.0M637.6 169.4 L643.9 170.4 L650.0 172.0M628.0 154.3 L629.4 149.4 L630.8 144.5 L631.7 139.4 L634.8 135.1M634.8 135.1 L640.8 136.4 L646.9 137.6 L652.7 139.4 L657.9 143.1M666.1 119.2 L665.5 124.6 L665.0 129.9 L665.3 135.5 L662.6 140.5M666.1 119.2 L671.5 119.2 L676.8 118.4 L682.3 118.8 L687.7 118.1 L692.7 115.3M693.2 147.9 L685.4 150.3M689.8 190.3 L686.9 186.2 L684.0 182.1 L681.4 177.8 L678.4 173.8 L674.1 170.8M653.3 198.8 L652.5 193.6 L653.1 188.3 L652.1 183.2 L652.2 178.0 L650.8 172.9M620.7 200.4 L617.9 195.8 L617.2 190.4 L615.4 185.5M633.1 131.5 L634.8 135.1M633.1 131.5 L634.8 125.9 L635.8 120.1 L637.9 114.6 L641.0 109.6M666.1 119.2 L662.3 114.4 L657.3 110.8M657.3 110.8 L651.9 110.0 L646.4 110.5 L641.0 109.6M693.2 507.1 L697.1 510.9 L699.3 515.8 L702.7 519.9 L704.7 525.0M693.2 507.1 L689.2 511.3 L685.2 515.5 L680.9 519.3 L676.2 522.8M676.2 522.8 L675.8 528.2M700.2 537.1 L693.6 541.5M675.8 528.2 L679.5 532.5 L684.6 535.0 L688.6 538.9 L693.6 541.5M664.6 533.8 L662.8 538.7 L660.9 543.5 L659.0 548.4M664.6 533.8 L660.1 530.8 L655.9 527.1 L651.1 524.3 L647.3 520.3M647.3 520.3 L644.6 525.1 L641.9 529.9 L639.1 534.7 L636.4 539.5M659.0 548.4 L653.2 546.6 L647.2 545.3 L641.8 542.4 L636.4 539.5M622.8 531.7 L628.0 536.4 L633.7 540.6M622.8 531.7 L623.8 526.8 L624.7 521.7 L625.7 516.7 L625.3 511.6M625.3 511.6 L630.7 513.1 L636.1 514.6 L641.4 516.1 L646.8 517.6M646.8 517.6 L647.3 520.3M636.4 539.5 L633.7 540.6M511.1 470.9 L513.1 465.5 L515.2 460.1 L517.2 454.7M517.2 454.7 L512.3 449.1 L507.5 443.5M530.9 273.3 L529.5 278.4 L529.2 283.8 L528.2 289.0 L525.8 293.8M530.9 273.3 L539.9 270.7M525.8 293.8 L530.1 299.2 L535.7 303.1M555.1 289.2 L552.0 293.8 L549.4 298.6M549.4 298.6 L542.3 300.3 L535.7 303.1M642.4 351.9 L646.3 355.4M642.4 351.9 L637.7 355.8 L633.1 359.7 L628.4 363.6 L623.8 367.5M636.4 381.5 L632.1 377.1 L627.3 373.0 L623.8 367.8M641.5 348.3 L642.8 343.3 L644.3 338.4 L646.8 333.8M641.5 348.3 L636.2 347.1 L630.7 346.6 L625.7 344.1 L620.7 342.1 L615.3 341.1M615.3 341.1 L618.1 335.6 L621.0 330.1 L623.8 324.6M623.8 324.6 L628.9 325.7 L633.9 326.8 L638.9 327.9 L644.0 329.0M644.0 329.0 L646.8 333.8M669.3 331.7 L663.7 332.2 L658.0 332.7 L652.4 333.2 L646.8 333.8M642.4 351.9 L641.5 348.3M646.7 305.6 L644.7 311.3 L644.9 317.3 L645.1 323.2 L644.0 329.0M636.7 300.4 L632.7 304.1 L628.6 307.9 L624.6 311.6 L620.5 315.3M620.5 315.3 L623.8 324.6M635.4 488.4 L629.9 485.8 L624.5 482.7 L618.9 480.0M635.4 488.4 L636.2 488.2M636.2 488.2 L636.9 482.8 L639.2 477.8 L641.8 472.9 L643.7 467.9 L643.9 462.3M643.9 462.3 L638.5 463.3 L632.9 462.4 L627.6 463.4 L622.1 463.9M618.9 480.0 L620.0 474.6 L621.1 469.3 L622.1 463.9M623.7 509.4 L626.6 504.2 L629.5 498.9 L632.5 493.7 L635.4 488.4M623.7 509.4 L625.3 511.6M636.2 488.2 L642.0 490.5 L647.8 492.8M646.8 517.6 L649.7 511.1 L654.6 506.1M647.8 492.8 L650.8 499.7 L654.6 506.1M676.2 522.8 L673.2 518.6 L670.2 514.5 L667.1 510.3 L664.1 506.1M664.6 533.8 L670.2 531.0 L675.8 528.2M664.1 506.1 L654.6 506.1M737.4 400.0 L737.2 401.9M737.4 400.0 L742.7 396.9 L748.2 394.2 L751.9 389.0M737.2 401.9 L741.8 405.5 L746.9 408.4 L750.6 412.8 L754.5 417.2M751.9 389.0 L756.2 392.1 L760.9 394.3 L766.3 395.0M754.5 417.2 L758.9 412.5 L763.4 407.8 L767.8 403.1M767.8 403.1 L766.3 395.0M726.0 383.7 L730.3 388.7 L733.2 394.8 L737.4 400.0M722.3 414.4 L726.7 409.6 L731.7 405.4 L737.2 401.9M722.3 414.4 L716.4 412.6 L710.6 410.6 L705.0 407.9M705.0 407.9 L700.9 401.2M752.0 371.9 L752.0 377.6 L751.9 383.3 L751.9 389.0M781.5 375.2 L777.7 380.1 L773.9 385.1 L770.1 390.1 L766.3 395.0M779.3 407.5 L773.6 405.3 L767.8 403.1M722.3 414.4 L722.3 419.6 L722.3 424.7 L725.1 429.3M696.6 428.5 L698.7 423.3 L700.8 418.2 L702.9 413.0 L705.0 407.9M696.6 428.5 L698.9 433.3 L701.2 438.2M725.1 429.3 L720.7 432.1 L715.7 433.4 L711.2 435.8 L706.6 438.3 L701.2 438.2M640.7 429.4 L639.3 422.2 L637.9 415.1M640.7 429.4 L635.4 434.4 L631.2 440.4M637.9 415.1 L632.1 416.7 L626.3 417.7 L620.5 418.5 L614.5 417.2M614.5 417.2 L615.7 423.3 L616.3 429.5 L616.7 435.7 L618.7 441.7M631.2 440.4 L625.0 441.0 L618.7 441.7M599.6 419.1 L598.5 424.1 L596.5 428.9 L596.1 434.0 L595.8 439.1M599.6 419.1 L604.1 416.2 L608.6 413.3M608.6 413.3 L614.5 417.2M595.8 439.1 L601.1 442.7 L606.4 446.3 L612.7 447.8M612.7 447.8 L618.7 441.7M643.9 462.3 L645.0 461.4M612.7 447.8 L612.6 452.4M612.6 452.4 L617.6 458.0 L622.1 463.9M645.1 460.3 L645.0 461.4M645.1 460.3 L642.2 454.9 L639.4 449.5 L636.6 444.0 L631.2 440.4M826.3 137.6 L822.7 132.2 L819.3 126.6M826.3 137.6 L823.0 142.7 L819.9 148.0 L818.5 154.0M819.3 126.6 L812.8 127.9 L806.5 129.3 L799.9 129.8M799.9 129.8 L799.3 135.1 L800.5 140.3 L801.1 145.5 L800.2 150.8 L800.5 156.0M800.5 156.0 L806.5 155.4 L812.5 154.7 L818.5 154.0M834.8 170.5 L829.8 167.3 L826.1 162.8 L822.6 158.0 L818.5 154.0M768.6 139.6 L772.0 135.5 L775.4 131.4 L778.4 126.9 L780.8 122.0 L785.1 118.6M796.8 159.7 L800.5 156.0M785.1 118.6 L790.3 122.0 L795.5 125.4 L799.9 129.8M822.5 181.8 L825.8 177.2 L829.8 173.3 L834.8 170.5M808.6 206.5 L806.2 211.6 L805.1 217.3 L803.1 222.6 L801.8 228.1M801.8 228.1 L797.6 230.9M778.7 209.7 L781.9 214.0 L786.1 217.5 L788.9 222.1 L791.3 227.0 L795.4 230.7M795.4 230.7 L797.6 230.9M756.6 218.8 L759.7 223.9 L762.9 228.9 L766.1 234.0 L769.2 239.1 L772.4 244.1M756.6 218.8 L759.8 214.1 L761.6 208.8M795.4 230.7 L790.8 233.4 L786.2 236.0 L781.6 238.7 L777.0 241.4 L772.4 244.1M741.5 282.0 L741.4 276.8 L741.0 271.6 L741.1 266.3 L740.5 261.1 L738.9 256.0M767.5 286.5 L769.2 280.9 L771.6 275.5 L773.7 270.0 L777.3 265.2M738.9 256.0 L744.2 256.1 L749.4 256.4 L754.5 255.1 L759.5 253.6 L764.5 252.4 L769.6 251.6M777.3 265.2 L774.8 260.6 L772.2 256.1 L769.6 251.6M822.3 316.7 L821.8 311.3 L821.9 305.9 L820.5 300.7 L819.6 295.3M787.7 301.8 L792.5 298.5 L796.7 294.3 L801.3 290.7M801.3 290.7 L807.2 293.0 L813.2 294.8 L819.6 295.3M777.3 265.2 L782.7 266.8 L788.2 267.4 L793.8 267.8 L799.3 267.7M801.3 290.7 L800.8 285.0 L800.3 279.2 L799.8 273.4 L799.3 267.7M797.6 230.9 L800.5 235.4 L802.1 240.3 L804.3 245.0 L805.4 250.0 L806.1 255.3 L808.1 260.1M772.4 244.1 L769.6 251.6M799.3 267.7 L803.7 263.9 L808.1 260.1M801.8 228.1 L807.4 229.0 L813.1 228.8 L818.8 229.3 L824.5 229.7M825.6 109.3 L823.8 115.2 L821.6 121.0 L819.3 126.6M527.4 397.2 L524.0 401.3 L521.3 406.0 L517.1 409.4 L512.9 412.8M527.4 397.2 L524.9 390.9 L522.4 384.7M527.4 370.9 L522.8 366.9 L517.9 363.3 L513.2 359.4 L508.9 355.0M527.4 370.9 L524.9 377.8 L522.4 384.7M507.5 443.5 L511.4 439.7 L515.3 436.0 L519.1 432.1 L521.2 426.9M521.2 426.9 L517.4 422.8 L514.9 418.0 L512.9 412.8M628.5 615.2 L634.6 615.9 L640.5 617.5 L646.6 618.0 L652.1 621.3M628.5 615.2 L627.0 613.3M652.5 596.8 L652.4 602.9 L652.3 609.0 L652.2 615.1 L652.1 621.3M652.5 596.8 L646.7 595.2 L641.0 593.6M641.0 593.6 L636.5 597.8 L633.0 602.7 L630.1 608.1 L627.0 613.3M593.8 612.4 L597.0 607.8 L600.2 603.2 L603.4 598.6 L606.6 594.0M593.8 612.4 L598.5 615.3 L603.1 618.1 L607.8 620.9M606.6 594.0 L612.1 594.0M607.8 620.9 L613.2 618.0 L618.2 614.4 L624.2 612.5M612.1 594.0 L615.1 598.6 L618.1 603.2 L621.2 607.9 L624.2 612.5M607.6 645.6 L607.4 639.4 L607.2 633.2 L606.0 627.1 L607.8 620.9M607.6 645.6 L612.4 642.3 L617.7 639.8 L622.9 637.1 L627.5 633.5M627.5 633.5 L627.8 627.4 L628.2 621.3 L628.5 615.2M624.2 612.5 L627.0 613.3M692.1 726.3 L695.0 730.9 L698.0 735.6 L700.9 740.2M692.1 726.3 L693.3 721.3 L694.2 716.3 L696.1 711.5 L696.9 706.5M735.2 695.2 L730.9 693.0M745.4 727.0 L741.8 731.9 L738.3 736.8M696.9 706.5 L701.7 704.6 L706.6 702.6 L711.5 700.7 L716.3 698.8 L721.2 696.8 L726.0 694.9 L730.9 693.0M700.9 740.2 L706.2 739.7 L711.7 740.3 L717.1 740.7 L722.5 740.3 L727.7 739.3 L733.0 738.3 L738.3 736.8M766.4 772.9 L761.3 770.1 L756.4 767.1 L751.4 764.3 L746.5 761.3 L741.2 759.0M738.3 736.8 L739.0 742.3 L739.7 747.9 L740.5 753.4 L741.2 759.0M672.6 818.2 L667.0 817.3 L661.5 816.3 L655.9 815.4 L650.3 814.4M559.2 715.7 L564.5 715.0 L569.8 714.4 L575.0 713.7 L580.3 713.0M549.6 753.1 L554.6 754.3 L559.5 755.6 L564.5 756.8 L569.5 758.0 L574.5 759.2 L579.4 760.4 L584.4 761.6 L589.4 762.8M601.4 728.8 L597.2 725.7 L592.9 722.5 L588.7 719.3 L584.5 716.2 L580.3 713.0M601.4 728.8 L601.9 735.3 L602.4 741.7 L603.0 748.2M603.0 748.2 L598.4 753.0 L594.2 758.2 L589.4 762.8M650.3 814.4 L646.7 810.6 L642.4 807.4 L638.3 804.0 L636.5 798.7M609.0 822.3 L612.8 818.0 L616.2 813.2 L620.9 809.7 L624.2 804.9 L628.1 800.7M628.1 800.7 L636.5 798.7M577.3 798.3 L579.2 803.3 L581.2 808.3 L583.1 813.3 L585.0 818.3M589.4 762.8 L590.4 768.5 L591.0 774.2 L591.0 779.9M591.0 779.9 L587.5 784.5 L584.1 789.1 L580.7 793.7 L577.3 798.3M609.0 822.3 L603.0 821.3 L597.0 820.3 L591.0 819.3 L585.0 818.3M628.1 800.7 L623.5 798.1 L618.8 795.5 L614.2 792.9 L609.5 790.3 L604.9 787.7 L600.2 785.1 L595.6 782.5 L591.0 779.9M815.9 568.7 L817.6 563.7 L820.2 559.0 L823.0 554.6M815.9 568.7 L809.2 571.1 L802.2 572.0M802.2 572.0 L802.3 565.4 L802.0 558.8 L800.7 552.3M823.0 554.6 L819.1 551.2 L815.7 547.3 L811.2 544.6M811.2 544.6 L805.4 547.7 L800.7 552.3M827.7 578.4 L823.6 575.4 L819.9 571.9 L815.9 568.7M780.1 562.2 L779.6 556.2 L780.8 550.4 L781.9 544.6M780.1 562.2 L785.0 566.0 L789.8 569.8 L794.6 573.5M781.9 544.6 L786.6 546.5 L791.3 548.5 L796.0 550.4 L800.7 552.3M794.6 573.5 L801.6 572.6M801.6 572.6 L802.2 572.0M811.2 530.3 L811.2 537.5 L811.2 544.6M781.4 543.6 L781.9 544.6M683.3 646.0 L677.5 645.8 L672.0 644.4 L666.5 642.4 L660.7 642.5 L655.1 641.9M683.3 646.0 L687.6 649.9 L691.9 653.7M691.9 653.7 L693.1 657.3M693.1 657.3 L690.4 661.8 L688.4 666.8 L686.4 671.7 L683.2 676.0 L680.1 680.3 L676.8 684.4M642.8 665.8 L647.4 669.7 L651.9 673.6 L656.4 677.5 L661.0 681.3 L665.5 685.2M642.8 665.8 L643.6 660.5 L645.8 655.7 L648.3 651.0 L650.6 646.2M665.5 685.2 L671.1 684.5 L676.8 684.4M650.6 646.2 L655.1 641.9M696.9 706.5 L693.4 701.6 L690.2 696.4 L685.6 692.6 L682.3 687.5 L676.8 684.4M730.9 693.0 L730.2 687.6 L729.7 682.2 L726.9 677.6 L724.1 672.9 L722.8 667.8M722.8 667.8 L717.7 666.4 L712.8 664.6 L708.1 662.0 L702.9 660.9 L697.8 659.8 L693.1 657.3M646.5 716.1 L650.3 712.3 L653.0 707.9 L654.9 703.0 L657.0 698.2 L660.6 694.4 L662.5 689.4 L665.5 685.2M646.5 716.1 L649.9 720.8 L653.0 725.6 L654.8 731.3M654.8 731.3 L660.1 730.5 L665.5 730.1 L670.8 729.3 L676.1 727.9 L681.3 726.3 L686.5 724.8 L692.1 726.3M627.5 633.5 L632.1 636.1 L636.7 638.6 L641.4 641.2 L646.0 643.7 L650.6 646.2M654.9 624.6 L652.1 621.3M654.9 624.6 L655.1 630.4 L654.9 636.2 L655.1 641.9M811.9 653.8 L818.6 646.6M575.6 254.0 L571.7 259.0 L567.0 263.3M557.4 229.2 L552.6 232.0 L547.1 232.7M547.0 260.9 L546.3 255.0 L544.8 249.3 L542.9 243.8M542.9 243.8 L545.2 238.3 L547.1 232.7M576.9 168.3 L571.1 169.2 L565.7 171.4 L560.3 173.4M577.1 168.4 L579.4 173.6 L580.8 179.0 L583.5 184.1 L585.1 189.5 L584.8 195.4M560.3 173.4 L557.8 178.3 L556.5 183.6 L553.5 188.2 L552.0 193.4M552.0 193.4 L553.9 195.1M553.9 195.1 L559.8 195.7 L565.7 196.4 L571.6 197.0 L577.5 197.7 L583.4 198.4M584.8 195.4 L583.4 198.4M610.5 183.1 L605.3 185.6 L600.2 188.1 L595.1 190.5 L589.9 193.0 L584.8 195.4M599.6 160.7 L593.9 162.6 L588.3 164.5 L582.7 166.5 L577.1 168.4M532.0 180.8 L535.5 185.0 L539.1 189.3 L542.6 193.5M532.0 180.8 L532.6 174.3 L534.6 168.1 L536.5 161.8M542.6 193.5 L552.0 193.4M536.5 161.8 L543.5 157.2M543.5 157.2 L548.2 160.7 L551.8 165.4 L556.3 169.1 L560.3 173.4M531.0 206.7 L534.9 202.3 L538.7 197.9 L542.6 193.5M531.0 206.7 L532.7 212.7 L533.9 218.7 L536.0 224.6M559.4 226.7 L558.5 221.4 L557.6 216.2 L556.6 210.9 L555.7 205.6 L554.8 200.4 L553.9 195.1M536.0 224.6 L541.6 228.6 L547.1 232.7M586.9 213.5 L585.8 208.4 L584.6 203.4 L583.4 198.4M618.0 277.3 L614.9 273.0 L610.9 269.6 L607.1 265.9 L604.1 261.6M618.0 277.3 L616.3 282.6 L614.6 288.0M601.8 289.5 L599.7 284.2 L597.5 278.9 L592.5 275.4M601.8 289.5 L609.5 290.9M592.5 275.4 L594.1 269.4 L595.7 263.5M609.5 290.9 L614.6 288.0M595.7 263.5 L604.1 261.6M634.8 269.3 L629.2 272.0 L623.6 274.7 L618.0 277.3M613.8 250.0 L610.6 253.9 L607.3 257.7 L604.1 261.6M636.3 299.5 L630.9 296.6 L625.5 293.7 L620.0 290.8 L614.6 288.0M571.3 285.4 L577.1 283.9 L582.3 281.1 L588.0 279.7 L592.5 275.4M571.3 285.4 L570.4 284.9M582.4 253.2 L586.9 256.6 L591.3 260.0 L595.7 263.5M610.6 311.9 L615.8 312.9 L620.5 315.3M610.6 311.9 L611.2 306.6 L609.8 301.4 L609.9 296.2 L609.5 290.9M169.5 43.3 L175.0 42.0 L180.2 40.0 L185.5 38.0 L190.5 35.3 L195.6 33.1M169.5 43.3 L169.0 49.5 L168.5 55.7 L167.9 61.8M167.9 61.8 L172.2 65.4 L176.5 69.0 L180.8 72.6 L185.1 76.3 L189.4 79.9M189.4 79.9 L191.6 75.3 L192.4 70.2 L195.2 65.9 L197.1 61.2 L199.7 56.8 L201.9 52.2 L202.6 47.1 L202.9 41.9M202.9 41.9 L199.3 37.5 L195.6 33.1M184.0 9.0 L178.8 8.6 L173.6 8.2 L168.4 7.8 L163.3 7.4 L158.1 7.0 L152.9 6.6M184.0 9.0 L187.5 3.9 L191.0 -1.3 L194.6 -6.5M153.1 -7.4 L158.2 -10.0 L163.0 -13.0 L168.4 -15.2 L173.5 -17.8 L178.0 -21.3 L182.8 -24.3 L186.4 -29.2M194.6 -6.5 L193.4 -12.5 L191.0 -18.0 L189.4 -23.9 L186.4 -29.2M184.0 9.0 L186.4 13.5 L188.7 17.9 L191.1 22.3 L193.5 26.7 L195.9 31.1M195.9 31.1 L195.6 33.1M792.8 81.1 L795.4 75.9 L796.8 70.1 L799.3 64.9 L802.8 60.1M792.8 81.1 L798.4 81.1 L804.0 81.1 L809.5 82.6 L815.0 83.0M815.0 83.0 L819.1 79.2 L823.1 75.4M823.1 75.4 L820.0 70.2 L817.4 64.6 L812.5 60.8M812.5 60.8 L802.8 60.1M817.2 103.5 L821.7 105.9 L825.6 109.3M817.2 103.5 L816.5 98.4 L816.6 93.2 L815.6 88.1 L815.0 83.0M822.7 47.9 L819.0 52.0 L816.2 56.8 L812.5 60.8M369.9 13.7 L364.8 15.1 L359.5 15.7 L354.5 17.3 L349.2 18.0 L344.7 21.3M369.9 13.7 L368.5 8.2 L367.6 2.5 L365.7 -2.9M337.4 15.2 L344.7 21.3M337.4 15.2 L340.5 9.3 L343.6 3.5 L346.6 -2.4M346.6 -2.4 L353.0 -3.4 L359.3 -3.8 L365.7 -2.9M569.8 -11.3 L566.2 -6.5 L561.3 -3.1M561.3 -3.1 L559.6 -3.2M559.6 -3.2 L555.4 -6.3 L552.8 -10.9 L550.1 -15.4 L546.9 -19.5 L542.3 -22.2M542.3 -22.2 L544.6 -26.9M491.7 -31.6 L485.3 -30.5 L479.2 -28.7 L473.6 -25.5M466.5 -31.0 L473.6 -25.5M466.5 -31.0 L461.7 -28.9 L456.9 -26.9 L452.1 -24.8 L447.4 -22.5M476.2 -12.9 L471.9 -7.9 L467.3 -3.2M476.2 -12.9 L480.6 -9.6 L484.9 -6.0 L489.7 -3.2 L495.7 -3.0M495.7 -3.0 L494.7 0.1M494.7 0.1 L489.6 2.8 L485.2 6.5 L480.1 9.3 L476.1 13.4 L472.3 17.9M472.3 17.9 L471.5 12.5 L469.5 7.4 L469.0 2.0 L467.3 -3.2M473.6 -25.5 L474.2 -19.1 L476.2 -12.9M447.4 -22.5 L445.2 -16.1M445.2 -16.1 L449.1 -11.2 L451.5 -5.4M467.3 -3.2 L462.0 -4.1 L456.9 -5.4 L451.5 -5.4M559.6 -3.2 L555.2 0.9 L550.8 4.9 L546.3 9.0M542.3 -22.2 L536.9 -19.3 L530.9 -17.8M530.9 -17.8 L532.8 -12.6 L533.6 -7.3 L533.5 -1.8 L535.2 3.4 L534.5 8.9M534.5 8.9 L540.4 9.8 L546.3 9.0M590.8 -6.4 L589.0 -1.4 L587.2 3.5 L585.4 8.5 L583.6 13.4M561.3 -3.1 L565.0 1.5 L568.6 6.1 L572.3 10.7 L575.9 15.3M583.6 13.4 L575.9 15.3M633.1 131.5 L627.4 129.5 L621.5 128.0 L615.4 128.5 L609.4 128.5M602.4 154.0 L602.3 148.4 L599.9 143.4M609.4 128.5 L605.9 133.2 L602.8 138.2 L599.9 143.4M768.6 103.8 L766.9 98.8 L764.4 94.0 L763.2 88.8 L760.9 84.0M768.6 103.8 L773.9 105.2 L779.2 106.5 L784.1 109.0M787.5 105.0 L784.1 109.0M787.5 105.0 L789.5 99.4 L791.7 93.7 L792.2 87.8 L791.7 81.7M760.9 84.0 L764.9 80.7 L769.5 78.5 L773.9 75.8 L777.3 71.9M791.7 81.7 L787.2 78.0 L782.2 74.9 L777.3 71.9M749.4 110.7 L754.6 110.0 L759.4 108.4 L764.4 107.1 L768.6 103.8M745.4 78.0 L750.9 79.2 L756.2 80.8 L760.9 84.0M785.1 118.6 L784.1 109.0M817.2 103.5 L811.3 104.2 L805.3 104.0 L799.4 104.9 L793.5 104.4 L787.5 105.0M792.8 81.1 L791.7 81.7M712.9 229.7 L715.8 225.5 L718.7 221.2 L721.6 217.0 L724.6 212.8M712.9 229.7 L715.6 234.7 L719.8 238.5 L724.1 242.2 L727.9 246.3 L730.3 251.5M724.6 212.8 L729.4 215.7 L733.6 219.8 L738.5 222.6 L743.9 224.7M743.9 224.7 L740.8 229.8 L738.0 235.0 L736.3 240.5 L734.4 245.9 L734.8 252.1M730.3 251.5 L734.8 252.1M722.6 204.8 L724.6 212.8M699.1 230.1 L706.0 229.9 L712.9 229.7M698.1 265.9 L702.3 262.9 L706.7 260.6 L711.9 259.7 L716.6 258.0 L721.8 257.1 L726.0 254.2 L730.3 251.5M756.6 218.8 L750.3 221.9 L743.9 224.7M738.9 256.0 L734.8 252.1M692.7 115.3 L689.0 110.2 L685.5 105.0 L682.4 99.5 L681.9 92.8M657.3 110.8 L660.1 105.2 L663.0 99.6 L665.8 93.9M665.8 93.9 L671.1 92.9 L676.6 93.2 L681.9 92.8M623.7 509.4 L619.9 508.7M605.9 534.8 L604.4 529.4 L602.8 523.9 L601.3 518.5M605.9 534.8 L611.4 533.0 L616.8 530.8 L622.8 531.7M619.9 508.7 L615.1 510.7 L610.3 512.9 L606.1 516.3 L601.3 518.5M548.6 546.2 L552.3 550.0 L556.2 553.5 L560.5 556.3 L564.9 559.0 L570.4 560.1M548.6 546.2 L552.0 541.0 L554.6 535.3 L558.6 530.4M570.8 560.0 L571.8 555.0 L572.8 550.0 L573.8 545.1 L574.8 540.1M558.6 530.4 L563.7 534.1 L569.8 536.2 L574.8 540.1M600.8 544.6 L597.4 549.1 L594.0 553.6 L592.2 558.8 L591.8 564.7M570.8 560.0 L575.9 561.6 L580.9 564.0 L586.4 564.0 L591.8 564.7M600.8 544.2 L596.3 541.8 L591.3 540.6 L586.7 538.7 L582.3 536.1M574.8 540.1 L582.3 536.1M529.1 490.2 L527.6 489.3M529.1 490.2 L528.5 495.5 L527.8 500.7 L527.9 506.0 L528.7 511.2 L527.8 516.4 L529.5 521.7M527.6 489.3 L522.5 491.9 L517.4 494.5 L512.3 497.1 L507.2 499.7 L502.1 502.3 L497.0 504.9M529.5 521.7 L529.0 522.2M529.0 522.2 L525.0 518.7 L520.8 515.5 L515.7 514.1 L511.7 510.7 L506.7 509.0 L502.2 506.5 L497.0 505.2M546.2 518.3 L540.7 519.4 L535.1 520.5 L529.5 521.7M546.2 518.3 L548.7 513.7 L550.8 509.1 L551.8 504.0M551.8 504.0 L546.7 500.6 L541.6 497.1 L536.5 493.7 L531.4 490.3M531.4 490.3 L529.1 490.2M511.1 470.9 L515.7 474.5 L520.3 478.0 L525.0 481.6M525.0 481.6 L527.6 489.3M546.2 518.3 L549.6 522.7 L553.3 526.6 L558.4 529.0M533.8 545.9 L541.5 548.4M533.8 545.9 L531.0 540.8 L527.7 535.9 L526.9 529.9M548.6 546.2 L541.5 548.4M526.9 529.9 L529.0 522.2M558.4 529.0 L558.6 530.4M526.9 529.9 L521.6 531.3 L516.4 532.8 L511.2 534.2 L505.9 535.6 L500.7 537.0 L495.4 538.5 L490.2 539.9M551.8 504.0 L557.8 500.8 L564.1 498.5M531.4 490.3 L536.6 487.4 L542.3 485.4 L546.9 481.4 L552.2 478.8M564.1 498.5 L564.0 492.6 L564.6 486.8M552.2 478.8 L559.0 481.9 L564.6 486.8M692.3 547.5 L693.6 541.5M692.3 547.5 L687.7 550.2 L683.4 553.3 L678.7 555.8 L673.6 557.5M673.6 557.5 L668.2 555.4 L662.8 553.3 L659.1 548.6M525.0 481.6 L528.5 475.9 L532.0 470.3 L535.6 464.7M552.2 478.8 L552.1 471.5 L549.8 464.6M535.6 464.7 L542.7 465.0 L549.8 464.6M517.2 454.7 L522.6 454.0 L528.0 453.4M535.6 464.7 L530.9 459.6 L528.0 453.4M521.2 426.9 L526.6 427.4 L531.3 430.1M531.3 430.1 L533.3 435.9 L535.3 441.8M528.0 453.4 L531.7 447.6 L535.3 441.8M530.7 398.0 L534.2 402.2 L537.1 406.9 L540.8 411.0 L544.6 415.0M530.7 398.0 L535.7 396.4 L540.0 393.6 L545.2 392.4 L549.9 390.3 L554.1 387.2M554.1 387.2 L556.2 393.4 L556.7 400.0 L556.8 406.5M544.6 415.0 L550.4 410.3 L556.8 406.5M530.7 398.0 L527.4 397.2M531.3 430.1 L534.7 426.0 L539.5 423.6 L543.8 420.5M544.6 415.0 L543.8 420.5M554.1 387.2 L555.7 384.4M580.5 396.9 L576.7 393.2 L571.8 391.4 L567.9 387.7 L563.3 385.3 L558.5 383.3M580.5 396.9 L579.2 402.8 L578.4 408.8 L574.8 413.9M556.8 406.5 L563.0 408.4 L569.0 410.8 L574.8 413.9M555.7 384.4 L558.5 383.3M527.4 370.9 L536.8 367.5M555.7 384.4 L552.0 380.9 L548.7 377.0 L544.4 374.2 L540.0 371.6 L536.8 367.5M623.8 367.5 L619.6 362.3 L614.5 358.1 L609.9 353.3M615.3 341.1 L614.6 341.4M614.6 341.4 L611.8 347.2 L609.9 353.3M610.4 381.6 L604.4 379.4 L598.5 377.2 L592.5 375.0M610.4 381.6 L612.9 387.5 L615.5 393.5M615.5 393.5 L613.3 398.0 L611.3 402.8 L607.9 406.6M607.9 406.6 L603.6 404.0 L599.3 401.3 L595.0 398.6 L590.7 395.9 L586.5 393.3M586.5 393.3 L587.3 386.8 L590.4 381.1 L592.5 375.0M623.8 367.8 L618.5 371.6 L613.8 375.9 L610.4 381.6M592.2 374.2 L592.5 375.0M592.2 374.2 L595.0 367.2 L595.6 359.7M595.6 359.7 L600.5 357.8 L605.2 355.5 L609.9 353.3M635.1 392.6 L628.6 393.2 L622.0 392.7 L615.5 393.5M638.3 414.4 L637.9 415.1M608.6 413.3 L607.9 406.6M580.5 396.9 L586.5 393.3M599.6 419.1 L593.6 418.2 L587.5 417.6 L581.5 416.7 L575.4 416.1M575.4 416.1 L574.8 413.9M592.2 374.2 L587.3 373.1 L582.3 372.7 L577.1 372.9 L572.4 370.9 L567.4 370.3M558.5 383.3 L561.3 378.9 L564.9 375.0 L567.4 370.3M693.2 507.1 L693.5 503.3M664.1 506.1 L668.7 501.9 L673.1 497.5M673.1 497.5 L678.2 498.9 L683.3 500.4 L688.4 501.9 L693.5 503.3M709.1 493.5 L701.4 493.6M693.5 503.3 L697.5 498.5 L701.4 493.6M653.7 435.1 L657.7 430.7 L662.6 427.4 L666.8 423.3 L671.5 419.8M653.7 435.1 L656.3 440.1 L656.5 445.7M656.5 445.7 L661.5 447.3 L666.3 448.9 L671.2 450.7 L676.7 449.8M676.7 449.8 L676.3 444.6 L675.9 439.4 L675.6 434.2 L675.2 429.0 L674.9 423.8M674.9 423.8 L671.5 419.8M670.8 415.3 L671.5 419.8M640.7 429.4 L646.8 433.1 L653.7 435.1M645.1 460.3 L648.0 454.7 L650.8 449.1 L656.5 445.7M696.6 428.5 L691.2 427.3 L685.8 426.1 L680.3 425.0 L674.9 423.8M689.0 451.7 L683.3 451.2 L677.5 450.8M689.0 451.7 L692.5 456.8 L693.9 462.9 L696.4 468.5M677.5 450.8 L676.4 456.0 L673.4 460.3 L672.1 465.4 L669.3 469.9 L666.8 474.5M696.4 468.5 L695.3 473.9 L692.5 478.6M692.5 478.6 L687.3 478.6 L682.0 478.5 L676.8 478.5 L671.6 478.5M671.6 478.5 L666.9 474.7M700.4 441.9 L701.2 438.2M700.4 441.9 L696.1 444.7 L692.0 447.5 L689.0 451.7M676.7 449.8 L677.5 450.8M717.6 464.4 L712.5 466.2 L707.3 468.1 L701.9 468.4 L696.4 468.5M717.6 464.4 L719.8 458.1M719.8 458.1 L716.0 454.8 L712.6 451.0 L708.1 448.5 L704.7 444.6 L700.4 441.9M645.0 461.4 L649.9 463.0 L653.9 466.3 L657.7 469.8 L662.6 471.6 L666.8 474.5M717.6 464.4 L720.1 471.6M701.4 493.6 L698.4 488.6 L695.5 483.6 L692.5 478.6M673.1 497.5 L672.3 491.2 L670.7 484.9 L671.6 478.5M647.8 492.8 L652.2 489.8 L656.5 486.6 L660.3 483.0 L663.2 478.5 L666.9 474.7M730.8 450.8 L730.1 444.8 L729.5 438.8 L728.8 432.8M730.8 450.8 L737.0 454.5 L744.0 455.8M728.8 432.8 L734.4 432.2 L739.4 429.8 L744.8 428.5 L750.1 427.1 L755.5 425.7M744.0 455.8 L748.8 450.6 L755.1 447.4M755.1 447.4 L755.9 441.0 L756.8 434.6 L757.6 428.2M757.6 428.2 L755.5 425.7M725.1 429.3 L728.8 432.8M719.8 458.1 L725.3 454.5 L730.8 450.8M747.5 470.1 L744.8 463.2 L744.0 455.8M754.5 417.2 L755.5 425.7M772.0 456.0 L766.8 452.3 L760.8 450.1 L755.1 447.4M779.6 430.3 L774.0 430.1 L768.6 429.3 L763.0 429.5 L757.6 428.2M819.0 260.7 L822.1 265.2 L825.1 269.6 L828.1 274.2 L831.3 278.5 L835.3 282.3M819.0 260.7 L823.5 255.9 L826.9 250.3 L832.0 246.1M819.6 295.3 L822.9 291.4 L827.1 288.4 L830.3 284.2 L835.3 282.3M808.1 260.1 L813.6 259.8 L819.0 260.7M824.5 229.7 L828.0 234.7 L830.1 240.4 L832.0 246.1M634.7 583.7 L628.7 582.6 L622.6 582.5M634.7 583.7 L638.1 578.4 L641.4 573.1 L644.8 567.8M622.6 582.5 L619.7 576.3 L616.9 570.2M616.9 570.2 L619.1 565.6 L621.2 561.1 L623.4 556.5M644.8 567.8 L640.7 564.4 L636.7 561.1 L632.6 557.7 L628.6 554.3M623.4 556.5 L628.6 554.3M641.0 593.6 L638.8 588.0 L634.7 583.7M612.1 594.0 L615.6 590.1 L619.1 586.3 L622.6 582.5M606.6 594.0 L601.3 590.5 L595.9 587.0 L592.4 581.4M592.4 581.4 L592.4 575.0 L593.8 568.6M593.8 568.6 L599.6 568.6 L605.3 569.3 L611.2 568.6 L616.9 570.2M600.8 544.6 L605.3 547.2 L610.2 548.8 L614.6 551.3 L618.8 554.3 L623.4 556.5M591.8 564.7 L593.8 568.6M633.7 540.6 L631.1 547.5 L628.6 554.3M659.1 548.6 L655.1 552.6 L651.1 556.7 L648.2 561.5 L647.1 567.4M647.1 567.4 L644.8 567.8M605.9 534.8 L604.4 540.1 L600.8 544.2M630.6 669.1 L628.4 674.0 L624.6 677.9 L622.5 682.8 L619.3 687.0M630.6 669.1 L626.7 665.4 L622.7 661.8 L618.7 658.1 L614.7 654.4 L610.7 650.8 L606.7 647.1M619.3 687.0 L613.4 687.3 L607.7 686.8 L601.9 686.9 L596.2 685.3 L590.6 684.0M606.7 647.1 L599.4 648.6M599.4 648.6 L595.8 652.4 L591.3 655.1 L587.7 658.8 L584.1 662.6 L579.5 665.2M590.6 684.0 L587.8 679.3 L585.0 674.6 L582.3 669.9 L579.5 665.2M646.5 716.1 L641.2 714.4 L636.0 712.8 L630.7 711.2 L625.5 709.5M625.5 709.5 L622.7 704.2 L622.1 698.3 L621.4 692.5 L619.3 687.0M642.8 665.8 L636.4 666.4 L630.6 669.1M607.6 645.6 L606.7 647.1M601.4 728.8 L605.5 725.7 L608.9 721.7 L613.2 718.9 L616.6 715.0 L620.3 711.3 L625.5 709.5M580.3 713.0 L582.0 708.2 L583.7 703.4 L585.4 698.5 L587.1 693.7 L588.8 688.9 L590.6 684.0M579.5 665.2 L572.7 663.4 L565.8 662.3M558.9 663.4 L565.8 662.3M671.3 771.2 L674.6 775.8 L678.0 780.5 L681.3 785.1 L684.6 789.7 L687.9 794.3 L691.2 799.0M671.3 771.2 L675.9 768.2 L680.4 765.2 L685.0 762.2 L689.5 759.2 L694.1 756.2 L698.6 753.2M698.6 753.2 L702.3 757.5 L706.1 761.8 L709.7 766.3 L712.9 770.9 L716.8 775.1 L719.2 780.5M691.2 799.0 L696.2 796.6 L701.3 794.4 L705.7 791.2 L710.4 788.4 L715.6 786.3 L719.1 781.6M719.1 781.6 L719.2 780.5M700.9 740.2 L699.8 746.7 L698.6 753.2M741.2 759.0 L737.3 762.3 L733.9 766.1 L729.8 769.3 L725.6 772.4 L721.9 775.9 L719.2 780.5M738.7 803.5 L735.4 798.6 L731.1 794.5 L728.0 789.5 L724.8 784.4 L719.1 781.6M689.1 807.4 L691.2 799.0M651.7 741.7 L654.5 746.8 L658.5 751.1 L660.6 756.6 L664.3 761.1 L667.9 765.8 L670.3 771.1M651.7 741.7 L646.7 744.2 L641.7 746.8 L637.2 750.3 L632.7 753.7 L627.3 755.6M627.3 755.6 L628.6 760.6 L629.9 765.7 L631.2 770.7 L632.5 775.7 L633.7 780.7 L635.0 785.7 L636.3 790.8 L637.6 795.8M670.3 771.1 L666.2 774.0 L661.9 776.9 L657.5 779.6 L653.1 782.3 L649.4 785.9 L646.0 789.8 L641.7 792.7 L637.6 795.8M654.8 731.3 L654.0 736.7 L651.7 741.7M671.3 771.2 L670.3 771.1M603.0 748.2 L607.9 749.6 L612.9 750.6 L617.4 753.3 L622.5 753.9 L627.3 755.6M636.5 798.7 L637.6 795.8M518.0 590.0 L514.6 586.0 L511.2 581.8 L506.9 578.8 L502.4 575.9 L498.0 573.0M533.8 545.9 L529.9 549.4 L525.9 552.9 L522.0 556.5 L518.1 560.0M518.1 560.0 L511.7 559.9 L505.3 559.7 L499.0 559.6M541.5 548.4 L543.0 553.4 L543.7 558.5 L543.4 563.7 L545.1 568.7 L545.1 573.9M570.4 560.1 L566.8 565.6 L563.0 570.9 L559.9 576.6M545.1 573.9 L549.9 575.4 L554.6 577.4 L559.9 576.6M518.1 560.0 L520.1 564.7 L522.0 569.5 L525.7 573.1 L528.7 577.1 L532.8 580.4M545.1 573.9 L538.9 577.1 L532.8 580.4M518.0 590.0 L523.9 588.3 L530.0 587.0M532.8 580.4 L530.0 587.0M580.7 589.6 L586.3 585.1 L592.4 581.4M580.7 589.6 L575.6 586.5 L570.5 583.5 L565.4 580.5 L560.2 577.4M560.2 577.4 L559.9 576.6M770.6 587.5 L765.5 590.5 L760.5 593.5 L755.4 596.5 L750.3 599.5M770.6 587.5 L768.6 582.0 L766.7 576.4 L764.8 570.9M764.8 570.9 L759.9 568.4 L755.0 565.8M750.3 599.5 L748.5 599.4M748.5 599.4 L747.7 594.2 L747.0 589.0 L746.2 583.8 L745.5 578.6 L744.7 573.4M755.0 565.8 L749.3 568.8 L744.7 573.4M779.5 591.2 L782.5 595.4 L784.0 600.3M779.5 591.2 L770.6 587.5M784.0 600.3 L781.0 605.6 L776.4 609.5 L773.0 614.5 L768.9 618.9M768.9 618.9 L765.2 615.1 L761.5 611.2 L757.8 607.3 L754.1 603.4 L750.3 599.5M779.5 591.2 L783.2 586.8 L787.0 582.4 L790.8 578.0 L794.6 573.5M780.1 562.2 L775.0 565.1 L769.9 568.0 L764.8 570.9M753.0 549.7 L753.6 555.0 L754.3 560.4 L755.0 565.8M726.5 549.1 L724.4 556.2M744.7 573.4 L736.7 572.8M724.4 556.2 L727.5 560.4 L730.6 564.5 L733.7 568.7 L736.7 572.8M754.9 648.3 L757.0 643.5 L759.2 638.6 L761.3 633.7M754.9 648.3 L749.6 647.9 L744.4 647.9 L739.2 647.9 L734.4 651.0M761.3 633.7 L756.9 629.8 L752.3 626.2 L746.9 623.7 L741.9 620.7M734.4 651.0 L732.7 645.8 L729.9 641.0 L727.7 635.9M727.7 635.9 L729.5 631.0 L731.0 626.0M731.0 626.0 L736.9 624.2 L741.9 620.7M775.9 677.9 L772.3 674.1 L768.4 670.5 L766.4 665.6 L762.5 662.0 L760.1 657.3 L757.0 653.2 L754.9 648.3M798.9 654.9 L795.8 650.1 L793.8 644.7 L792.1 639.2 L788.2 634.8M788.2 634.8 L782.9 634.3 L778.5 631.5 L774.1 628.7 L768.8 628.3M768.8 628.3 L761.3 633.7M722.8 667.8 L726.0 663.8 L728.3 659.2 L730.7 654.6 L734.4 651.0M745.6 600.9 L748.5 599.4M745.6 600.9 L744.6 605.8 L743.7 610.8 L742.8 615.8 L741.9 620.7M768.9 618.9 L768.8 628.3M691.9 653.7 L696.0 650.3 L699.6 646.6 L702.5 642.3 L704.7 637.5 L708.0 633.4M708.0 633.4 L714.4 635.4 L720.9 637.1 L727.7 635.9M815.7 623.7 L821.5 618.9 L828.4 616.2M815.7 623.7 L810.9 620.6 L806.1 617.4 L801.3 614.3M828.4 607.2 L823.5 605.7 L818.6 604.0 L814.2 601.6 L811.2 596.9M828.4 607.2 L828.4 616.2M811.2 596.9 L810.3 597.0M810.3 597.0 L804.7 601.3 L800.0 606.6M800.0 606.6 L801.3 614.3M818.6 646.6 L817.2 641.0 L815.4 635.4 L814.4 629.7 L815.7 623.7M788.2 634.8 L792.0 630.0 L794.9 624.6 L798.3 619.6 L801.3 614.3M827.8 583.7 L824.4 587.9 L819.8 590.7 L816.3 594.8 L811.2 596.9M801.6 572.6 L803.3 577.4 L805.1 582.3 L806.8 587.2 L808.6 592.1 L810.3 597.0M784.0 600.3 L789.6 601.7 L794.9 604.1 L800.0 606.6M536.0 224.6 L530.7 227.4 L525.3 230.0 L519.8 232.1 L513.9 233.0 L507.8 233.2M542.9 243.8 L537.3 244.1 L531.9 245.2 L526.7 247.2 L521.5 249.0M507.8 233.2 L511.0 237.3 L514.5 241.3 L517.4 245.7 L521.5 249.0M530.9 273.3 L524.2 270.2 L518.5 265.6M518.5 265.6 L519.6 260.1 L520.1 254.5 L521.5 249.0M219.1 -24.8 L225.6 -28.1 L231.2 -32.6M249.4 -16.7 L248.9 -16.5M231.2 -32.6 L236.3 -29.3 L240.7 -25.3 L245.4 -21.6 L248.9 -16.5M190.1 81.0 L192.6 86.3M189.9 80.8 L185.6 84.5 L180.9 87.6 L176.7 91.5 L171.9 94.5 L166.9 97.0 L162.0 99.7 L156.2 101.0M192.6 86.3 L191.5 91.2 L190.4 96.1 L189.3 101.1 L188.2 106.0 L187.1 110.9 L186.0 115.8 L184.9 120.8M184.9 120.8 L179.3 118.8 L173.7 116.8 L168.1 114.8 L162.5 112.9 L156.9 110.9M189.4 79.9 L189.9 80.8M786.3 34.4 L780.9 35.7 L775.5 36.9 L770.3 38.9 L764.6 38.9M786.3 34.4 L791.4 38.9 L795.8 44.1M795.2 49.6 L790.0 52.4 L785.3 56.0 L780.4 59.5 L774.2 59.9M795.2 49.6 L795.8 44.1M764.6 38.9 L766.3 44.2 L768.0 49.5 L767.6 55.2M774.2 59.9 L767.6 55.2M798.2 11.5 L793.3 13.8 L788.6 16.3M811.4 34.0 L806.4 37.7 L801.6 41.8 L795.8 44.1M788.6 16.3 L786.8 22.2 L786.9 28.4 L786.3 34.4M802.8 60.1 L799.0 54.8 L795.2 49.6M777.3 71.9 L775.7 65.9 L774.2 59.9M738.1 46.1 L740.7 50.9 L743.7 55.4 L745.7 60.5 L748.5 65.2M738.1 46.1 L742.9 44.0 L748.0 42.6 L752.6 40.0 L757.3 37.5 L762.6 36.8M748.5 65.2 L753.6 63.2 L757.9 59.9 L762.5 57.0 L767.6 55.2M762.6 36.8 L764.6 38.9M744.7 75.3 L746.8 70.3 L748.5 65.2M644.9 -25.6 L651.7 -25.1 L658.5 -24.6M743.1 -25.5 L738.4 -22.4 L733.7 -19.3 L730.7 -14.5M730.7 -14.5 L726.0 -16.7 L721.4 -18.8 L716.8 -21.0M718.2 21.9 L724.1 23.5 L729.9 25.0 L735.7 26.6M718.2 21.9 L715.8 27.3 L713.7 32.8M713.7 32.8 L717.4 38.0 L719.5 43.9 L721.8 49.8M735.7 26.6 L737.1 32.8 L737.2 39.0 L736.1 45.3M736.1 45.3 L731.4 46.9 L726.6 48.5 L721.8 49.8M732.5 0.6 L737.5 1.7 L742.0 4.2M732.5 0.6 L727.2 2.8 L722.0 5.1M742.0 4.2 L742.4 9.9 L741.5 15.7 L742.4 21.4M742.4 21.4 L735.7 26.6M722.0 5.1 L719.1 11.0 L716.7 17.2M716.7 17.2 L718.2 21.9M738.1 46.1 L736.1 45.3M762.6 36.8 L760.9 29.2M760.9 29.2 L756.3 27.2 L751.7 25.3 L747.0 23.3 L742.4 21.4M719.9 66.4 L716.7 58.2M716.7 58.2 L721.8 49.8M192.6 86.3 L197.3 89.4 L202.0 92.6 L206.8 95.7 L211.5 98.8M184.9 120.8 L187.3 124.5M211.5 98.8 L210.2 105.0 L210.8 111.1 L211.5 117.2M211.5 117.2 L207.6 120.8 L203.6 124.4 L199.6 128.0M187.3 124.5 L193.4 126.2 L199.6 128.0M496.1 29.8 L491.4 27.2 L486.5 25.2 L481.7 23.1 L476.7 21.4 L471.9 19.2M496.1 29.8 L493.2 34.8 L490.3 39.7 L487.5 44.7 L484.6 49.6M484.6 49.6 L479.7 45.5 L474.9 41.4 L470.0 37.2M470.0 37.2 L470.5 31.3 L471.1 25.4 L471.6 19.4M497.8 29.3 L496.1 29.8M497.8 29.3 L502.1 22.4M494.7 0.1 L497.5 5.4 L498.2 11.3 L499.7 17.0 L502.1 22.4M472.3 17.9 L471.9 19.2M455.5 46.6 L449.6 44.4 L443.8 42.2M455.5 46.6 L460.3 43.5 L465.1 40.4 L470.0 37.2M443.8 42.2 L446.2 36.6 L448.2 30.8 L450.6 25.2 L451.0 19.0M451.0 19.0 L456.2 19.1 L461.3 18.0 L466.5 17.9 L471.6 19.4M451.0 19.0 L446.2 13.5M446.2 13.5 L447.3 7.0 L447.8 0.4 L451.5 -5.4M470.1 62.1 L475.6 60.1 L480.4 56.9 L485.3 53.9M470.1 62.1 L470.8 67.5 L471.5 72.8 L472.2 78.2 L472.9 83.5M493.6 73.5 L491.1 68.1 L490.9 62.2 L489.2 56.7M493.6 73.5 L488.9 78.6 L484.2 83.7M489.2 56.7 L485.3 53.9M484.2 83.7 L478.5 83.6 L472.9 83.5M455.5 46.6 L459.1 52.6 L461.5 59.2M461.5 59.2 L470.1 62.1M484.6 49.6 L485.3 53.9M445.3 76.0 L448.6 71.1 L451.9 66.2 L455.6 61.7 L461.5 59.2M445.3 76.0 L448.5 80.1M448.5 80.1 L454.1 81.4 L459.6 82.6 L465.2 83.8 L470.8 85.0M470.8 85.0 L472.9 83.5M424.9 37.1 L430.4 39.2 L436.4 40.0 L441.6 42.9M424.9 37.1 L421.0 40.7 L416.7 43.8 L413.6 48.1M441.6 42.9 L439.9 48.2 L437.9 53.4 L436.0 58.7 L435.8 64.4M435.8 64.4 L429.2 63.0 L422.6 63.9 L416.0 63.6M413.6 48.1 L413.1 53.5 L413.3 58.8 L416.0 63.6M443.8 42.2 L441.6 42.9M446.2 13.5 L440.3 13.0 L434.5 12.5 L428.7 12.0M421.8 27.2 L423.9 22.0 L426.2 17.0 L428.7 12.0M421.8 27.2 L423.4 32.1 L424.9 37.1M445.3 76.0 L443.4 75.4M443.4 75.4 L439.5 70.0 L435.8 64.4M426.9 86.3 L422.8 82.4 L417.9 79.6 L413.1 76.9 L407.7 75.1M426.9 86.3 L432.4 82.6 L438.5 79.9 L443.4 75.4M407.7 75.1 L412.0 69.5 L416.0 63.6M346.6 37.3 L345.6 39.0M346.6 37.3 L351.8 37.6 L356.9 37.9 L362.1 38.3 L367.3 38.6 L372.5 38.9M345.6 39.0 L347.0 44.8 L349.6 50.3 L351.6 56.0 L351.1 62.3M372.5 38.9 L374.7 44.7 L376.5 50.7M376.5 50.7 L371.3 52.6 L366.2 55.1 L360.9 56.8 L355.9 59.4 L351.1 62.3M337.4 15.2 L335.0 14.9M344.7 21.3 L345.3 26.7 L346.0 32.0 L346.6 37.3M323.1 45.6 L328.4 42.9 L334.2 42.0 L339.9 40.3 L345.6 39.0M323.1 45.6 L322.5 40.3 L322.0 35.0 L321.4 29.8 L320.8 24.5M335.0 14.9 L330.3 18.1 L325.6 21.3 L320.8 24.5M346.6 -2.4 L342.8 -7.6 L339.6 -13.1 L337.3 -19.1M337.3 -19.1 L333.7 -14.5 L328.7 -11.4 L325.1 -6.8 L319.9 -3.8M335.0 14.9 L331.2 10.2 L327.5 5.5 L323.7 0.9 L319.9 -3.8M323.1 45.6 L321.1 48.4M351.1 62.3 L348.8 67.1M321.2 50.6 L321.1 48.4M321.2 50.6 L324.8 54.6 L328.4 58.5 L331.9 62.5 L335.5 66.4M335.5 66.4 L342.1 66.7 L348.8 67.1M337.4 -19.4 L341.8 -23.9 L347.6 -26.4M337.4 -19.4 L333.2 -23.1 L329.1 -26.9 L325.0 -30.7 L320.9 -34.5M362.2 -24.2 L355.1 -26.4 L347.6 -26.4M362.2 -24.2 L363.7 -18.0 L365.3 -11.8 L366.8 -5.6M365.7 -2.9 L366.8 -5.6M366.2 -28.0 L362.2 -24.2M306.0 -23.3 L310.8 -27.3 L316.3 -30.2 L320.9 -34.5M524.9 -18.9 L521.7 -24.1 L518.4 -29.2 L515.2 -34.4M524.9 -18.9 L521.3 -15.0 L516.7 -12.3 L513.1 -8.5 L508.4 -5.9M497.3 -28.1 L498.3 -22.6 L497.9 -16.8 L498.0 -11.2 L500.0 -5.8M508.4 -5.9 L500.0 -5.8M530.9 -17.8 L524.9 -18.9M524.7 16.5 L521.4 12.0 L518.2 7.6 L514.9 3.1 L511.7 -1.4 L508.4 -5.9M534.5 8.9 L529.1 12.0 L524.8 16.5M491.7 -31.6 L497.3 -28.1M495.7 -3.0 L500.0 -5.8M524.7 16.5 L518.9 17.2 L513.2 18.5 L507.2 18.8 L502.1 22.4M543.5 33.9 L548.1 28.9 L553.6 25.0M543.5 33.9 L546.2 39.9 L547.3 46.5M556.9 50.1 L552.1 48.3 L547.3 46.5M556.9 50.1 L561.8 45.6 L566.3 40.8 L571.6 36.8M553.6 25.0 L558.8 25.9 L564.0 26.7 L569.3 27.6M571.6 36.8 L569.3 27.6M546.3 9.0 L549.6 14.0 L552.5 19.1 L553.6 25.0M524.8 16.5 L526.5 22.9 L528.5 29.2M528.5 29.2 L533.5 30.7 L538.8 31.3 L543.5 33.9M575.9 15.3 L573.7 22.0 L569.3 27.6M583.9 45.1 L589.2 42.9 L594.6 40.7 L599.9 38.5M583.9 45.1 L577.8 41.0 L571.6 36.8M583.6 13.4 L591.8 17.1M599.9 38.5 L597.8 33.2 L596.9 27.4 L594.4 22.3 L591.8 17.1M607.6 -1.4 L607.9 4.6 L608.3 10.5M608.3 10.5 L603.1 13.4 L597.9 16.3 L591.8 17.1M582.0 135.9 L580.0 130.9 L578.6 125.7 L576.9 120.6M582.0 135.9 L578.1 140.1 L573.6 143.7 L569.5 147.6M557.3 126.0 L556.9 132.1 L556.7 138.2 L555.1 144.2M557.3 126.0 L563.2 124.4 L569.2 122.8 L574.5 119.6M574.5 119.6 L576.9 120.6M569.5 147.6 L562.3 145.9 L555.1 144.2M576.9 168.3 L575.0 163.2 L573.2 158.0 L571.4 152.8 L569.5 147.6M599.9 143.4 L593.9 140.9 L588.5 137.2 L582.0 135.9M543.5 157.2 L545.6 149.8M545.6 149.8 L550.5 147.2 L555.1 144.2M609.4 128.5 L608.0 122.7 L607.3 116.7 L604.5 111.3M576.9 120.6 L581.8 118.2 L585.9 114.5 L590.8 112.0 L595.9 110.1M604.5 111.3 L595.9 110.1M545.6 149.8 L541.9 145.9 L538.2 142.0 L534.6 138.0 L530.9 134.1M557.3 126.0 L552.1 122.4 L547.1 118.4 L541.9 114.9M530.9 134.1 L533.6 129.3 L536.4 124.5 L539.1 119.7 L541.9 114.9M611.3 483.0 L606.9 479.3 L602.6 475.7 L598.2 472.1M611.3 483.0 L610.2 488.1 L607.6 492.8M607.6 492.8 L602.9 495.6 L597.9 497.5 L592.6 498.5M592.6 498.5 L590.2 492.6 L587.8 486.7 L585.4 480.9M598.2 472.1 L593.9 475.0 L589.7 477.9 L585.4 480.9M618.9 480.0 L611.3 483.0M598.5 465.0 L598.2 472.1M598.5 465.0 L602.4 460.0 L607.2 455.9 L612.6 452.4M619.9 508.7 L616.6 504.9 L614.4 500.2 L612.2 495.5 L607.6 492.8M582.8 522.2 L577.1 519.2 L571.5 516.2M582.8 522.2 L589.1 518.7 L595.4 515.2M595.4 515.2 L594.2 510.1 L593.0 505.1 L591.8 500.0M591.8 500.0 L586.3 501.8 L580.6 501.7 L575.0 503.2 L569.3 503.1M571.5 516.2 L570.4 509.7 L569.3 503.1M558.4 529.0 L562.4 524.5 L567.4 520.8 L571.5 516.2M582.3 536.1 L582.5 529.1 L582.8 522.2M601.3 518.5 L595.4 515.2M592.6 498.5 L591.8 500.0M564.1 498.5 L569.3 503.1M575.2 478.2 L570.3 483.1 L564.6 486.8M575.2 478.2 L580.1 480.4 L585.4 480.9M595.8 439.1 L589.6 440.8 L583.5 442.8M598.5 465.0 L593.2 462.9 L589.0 459.3 L584.4 456.1M583.5 442.8 L583.3 449.5 L584.4 456.1M535.3 441.8 L540.2 444.6 L545.5 445.9 L551.0 447.1 L556.2 448.7M549.8 464.6 L552.5 459.7 L556.3 455.7M556.2 448.7 L556.3 455.7M575.2 478.2 L574.9 472.2 L573.7 466.3M556.3 455.7 L560.0 459.4 L563.9 462.8 L568.0 465.8 L573.7 466.3M584.4 456.1 L579.6 461.8 L573.7 466.3M571.3 285.4 L573.9 290.2 L576.5 295.0M549.4 298.6 L553.1 303.2 L556.8 307.9 L560.5 312.6M560.5 312.6 L565.6 312.2 L570.7 311.8M570.7 311.8 L573.8 306.7 L576.6 301.3 L576.5 295.0M601.8 289.5 L598.1 293.1 L593.9 296.2 L589.6 299.1M589.6 299.1 L583.1 297.0 L576.5 295.0M567.4 370.3 L566.0 364.2 L564.6 358.1M536.8 367.5 L539.1 363.0 L540.7 358.1 L543.7 353.9M564.6 358.1 L559.4 356.9 L554.2 355.9 L548.8 355.8 L543.7 353.9M520.3 342.7 L526.9 342.4 L533.5 342.2 L540.1 341.9M543.7 353.9 L542.6 347.7 L540.1 341.9M514.1 322.5 L518.7 320.2 L523.8 319.2 L528.5 317.4 L533.6 316.5M533.6 316.5 L536.7 322.0 L540.6 327.0 L545.2 331.3M540.1 341.9 L542.6 336.6 L545.2 331.3M533.6 316.5 L534.6 309.8 L535.7 303.1M560.5 312.6 L557.8 317.0 L555.1 321.4 L552.4 325.8 L549.7 330.2M545.2 331.3 L549.7 330.2M599.4 648.6 L596.3 644.6 L593.1 640.6 L591.1 635.8 L589.3 630.9 L585.3 627.4M565.8 662.3 L566.9 657.0 L568.0 651.6 L569.1 646.2 L570.2 640.8 L571.3 635.5 L572.3 630.1M572.3 630.1 L578.8 628.7 L585.3 627.4M593.8 612.4 L591.0 612.9M580.7 589.6 L580.4 596.9 L578.4 603.9M578.4 603.9 L582.6 606.9 L586.8 609.9 L591.0 612.9M591.0 612.9 L589.6 618.0 L588.5 623.0 L585.3 627.4M692.3 547.5 L695.6 553.2 L699.7 558.6 L701.3 565.3M724.4 556.2 L718.8 559.5 L713.5 563.1 L708.7 567.5M701.3 565.3 L708.7 567.5M525.8 293.8 L519.9 293.7 L514.3 295.6 L508.6 297.1 L502.9 298.2 L497.0 297.8M518.5 265.6 L513.7 266.9 L508.9 268.8 L503.7 268.8 L498.8 270.1M531.0 206.7 L525.5 204.9 L520.0 203.9 L514.5 202.7 L508.7 204.2M532.0 180.8 L525.4 180.3 L518.9 180.7 L512.4 181.9M512.4 181.9 L511.5 187.5 L510.6 193.0 L509.6 198.6 L508.7 204.2M228.6 15.0 L232.3 8.9 L237.6 4.3M228.6 15.0 L222.2 13.2 L215.6 13.5M215.6 13.5 L212.1 8.4 L208.3 3.5 L207.4 -3.0M237.6 4.3 L237.9 -3.2M237.9 -3.2 L233.4 -5.8 L228.8 -8.3 L224.3 -10.8 L219.8 -13.4M207.4 -3.0 L210.8 -7.2 L215.5 -10.1 L219.8 -13.4M250.2 32.3 L245.6 29.3 L240.5 27.1 L236.2 23.6 L231.0 21.6M250.2 32.3 L254.0 27.6 L257.9 23.0 L261.8 18.4M231.0 21.6 L228.6 15.0M261.8 18.4 L260.7 14.7M260.7 14.7 L256.1 12.6 L251.5 10.5 L246.8 8.4 L242.2 6.3 L237.6 4.3M202.9 41.9 L207.9 43.5M195.9 31.1 L200.3 28.1 L204.7 25.0 L207.8 20.6 L211.4 16.7 L215.6 13.5M231.0 21.6 L229.7 27.4 L228.6 33.2 L225.2 38.2M207.9 43.5 L213.4 40.9 L219.5 40.3 L225.2 38.2M194.6 -6.5 L201.1 -5.2 L207.4 -3.0M219.1 -24.8 L219.8 -19.1 L219.8 -13.4M248.9 -16.5 L244.6 -12.6 L241.2 -7.9 L237.9 -3.2M770.4 11.4 L769.3 11.9M770.4 11.4 L771.4 5.4 L773.9 -0.3 L774.2 -6.4 L775.6 -12.3M769.3 11.9 L764.5 8.7 L759.0 6.7 L753.9 3.8 L748.7 1.3M748.7 1.3 L751.0 -4.6 L753.3 -10.6 L755.7 -16.5M755.7 -16.5 L760.8 -18.1 L766.2 -18.9M766.2 -18.9 L770.9 -15.6 L775.6 -12.3M788.6 16.3 L782.7 14.1 L776.5 13.0 L770.4 11.4M760.9 29.2 L763.7 23.4 L766.5 17.7 L769.3 11.9M790.9 -14.4 L785.9 -12.8 L780.8 -11.9 L775.6 -12.3M742.0 4.2 L748.7 1.3M743.1 -25.5 L746.5 -21.5 L750.4 -18.0 L755.7 -16.5M730.7 -14.5 L731.3 -9.5 L731.9 -4.4 L732.5 0.6M710.4 87.0 L704.1 84.9 L698.0 82.4 L692.4 79.0M716.7 58.2 L710.7 57.8 L704.6 57.4 L698.5 57.0M698.5 57.0 L698.0 62.8 L697.2 68.5 L696.3 74.1 L692.4 79.0M665.8 93.9 L663.5 88.5 L661.9 82.7 L657.8 78.2M657.8 78.2 L662.0 74.9 L666.3 71.7 L670.6 68.4M681.9 92.8 L685.4 87.3 L687.0 80.9M670.6 68.4 L674.7 71.6 L678.8 74.7 L682.9 77.8 L687.0 80.9M692.4 79.0 L687.0 80.9M698.5 57.0 L691.8 50.9M670.6 68.4 L671.7 59.1M691.8 50.9 L686.8 52.9 L681.8 55.0 L676.7 57.1 L671.7 59.1M641.2 61.7 L644.5 65.8 L648.7 69.2 L652.9 72.5 L654.7 77.8M641.2 61.7 L644.9 56.8 L648.5 52.0M654.7 77.8 L657.8 78.2M648.5 52.0 L653.9 52.3 L659.3 51.5 L664.6 51.4M664.6 51.4 L668.2 55.3 L671.7 59.1M628.8 -9.5 L633.7 -1.7M658.5 -24.6 L661.0 -19.9 L663.4 -15.2M663.4 -15.2 L660.3 -9.8 L658.2 -3.9M658.2 -3.9 L652.1 -2.8 L646.0 -2.1 L639.8 -1.8 L633.7 -1.7M619.5 19.5 L614.4 14.4 L608.3 10.5M619.5 19.5 L623.4 15.2 L627.4 11.2 L632.5 8.3M633.7 -1.7 L633.4 3.3 L632.5 8.3M674.0 -14.2 L677.7 -9.6 L682.7 -6.3 L687.0 -2.4 L690.7 2.2M674.0 -14.2 L678.3 -18.2 L682.6 -22.2 L686.9 -26.2 L691.2 -30.2M691.2 -30.2 L694.6 -25.8 L698.0 -21.3 L701.4 -16.8 L704.8 -12.3M690.7 2.2 L695.3 -2.1 L699.9 -6.5 L704.5 -10.8M704.8 -12.3 L704.5 -10.8M663.4 -15.2 L668.7 -14.7 L674.0 -14.2M716.8 -21.0 L711.0 -16.4 L704.8 -12.3M722.0 5.1 L717.4 1.4 L713.8 -3.4 L710.1 -8.1 L704.5 -10.8M211.5 117.2 L216.7 118.2 L221.8 119.1 L227.0 120.0 L232.1 121.0 L237.3 121.9M199.6 128.0 L202.8 134.0 L205.9 140.0M237.3 121.9 L234.9 126.4 L232.6 130.9 L230.2 135.4 L227.8 140.0M205.9 140.0 L211.4 139.7 L216.9 140.9 L222.3 141.4 L227.8 140.0M187.3 124.5 L184.3 130.3 L180.2 135.2 L176.3 140.3M448.5 80.1 L448.8 85.8 L449.1 91.4 L447.8 96.9 L446.4 102.4M470.8 85.0 L469.8 89.9 L468.8 94.9 L467.9 99.8 L466.9 104.7M466.9 104.7 L461.7 105.2 L456.6 103.8 L451.4 103.4 L446.4 102.4M495.9 102.4 L490.7 103.6 L486.0 105.7 L481.3 107.8 L476.6 109.8 L473.0 114.1M495.9 102.4 L492.1 98.2 L488.6 93.9 L486.5 88.7 L484.2 83.7M466.9 104.7 L469.3 109.8 L473.0 114.1M426.9 86.3 L427.0 91.8 L427.1 97.4M427.1 97.4 L431.9 100.2 L437.0 102.6 L441.0 106.6M446.4 102.4 L441.0 106.6M372.6 15.8 L374.3 20.8 L376.3 25.8M372.6 15.8 L377.7 13.1 L382.7 10.4 L387.7 7.7 L392.8 5.0M376.3 25.8 L381.7 26.2 L386.9 27.3 L392.3 27.3 L397.7 28.0M392.8 5.0 L401.2 8.9M401.2 8.9 L403.1 15.7 L402.7 22.8M402.7 22.8 L397.7 28.0M369.9 13.7 L372.6 15.8M372.5 38.9 L374.4 32.3 L376.3 25.8M366.8 -5.6 L372.3 -7.2 L377.9 -8.8 L383.5 -10.4 L389.0 -12.0M389.0 -12.0 L389.1 -6.0 L391.2 -0.6 L392.8 5.0M399.9 44.2 L395.1 46.1 L390.7 48.8 L386.9 52.1 L383.0 55.5M399.9 44.2 L399.1 38.8 L398.4 33.4 L397.7 28.0M376.5 50.7 L383.0 55.5M421.8 27.2 L415.4 25.9 L408.9 24.9 L402.7 22.8M413.6 48.1 L406.5 47.0 L399.9 44.2M384.5 61.0 L381.5 65.7 L377.6 70.0 L374.1 74.6 L373.4 80.7M384.5 61.0 L389.0 63.9 L394.2 65.8 L399.2 67.8 L404.1 70.3 L407.3 75.2M407.3 75.2 L405.7 80.8 L403.2 86.0 L400.0 90.9M374.1 83.5 L373.4 80.7M374.1 83.5 L378.6 85.5 L383.5 86.8 L388.0 89.1 L393.1 89.7 L397.6 92.2M397.6 92.2 L400.0 90.9M383.0 55.5 L384.5 61.0M350.3 70.3 L348.8 67.1M350.3 70.3 L354.9 72.4 L359.8 73.9 L364.4 76.0 L368.9 78.3 L373.4 80.7M427.1 97.4 L421.4 101.0 L415.1 103.4M415.1 103.4 L410.0 99.3 L405.0 95.1 L400.0 90.9M249.4 -16.7 L254.4 -14.5 L259.4 -12.3M260.7 14.7 L263.4 8.9 L266.1 3.2M259.4 -12.3 L260.9 -6.8 L262.8 -1.5 L266.1 3.2M259.4 -12.3 L264.2 -14.3 L268.9 -16.2 L273.6 -18.2 L278.3 -20.1M303.3 71.9 L306.0 66.9 L310.1 63.1 L314.6 59.6 L319.0 56.0 L321.2 50.6M303.3 71.9 L305.0 75.2M335.5 66.4 L332.1 71.1 L328.3 75.5 L324.0 79.4M324.0 79.4 L317.4 79.3 L311.1 77.9 L305.0 75.2M428.7 12.0 L427.6 10.0M401.2 8.9 L405.4 6.2 L409.7 3.5M427.6 10.0 L421.5 8.3 L415.4 6.3 L409.7 3.5M445.2 -16.1 L440.8 -13.2 L436.4 -10.5 L430.8 -11.2M427.6 10.0 L428.4 4.7 L429.2 -0.6 L430.0 -5.9 L430.8 -11.2M392.8 -18.7 L398.7 -15.9 L404.7 -13.0 L410.7 -10.1M392.8 -18.7 L391.9 -27.2M394.7 -32.8 L391.9 -27.2M410.7 -10.1 L415.8 -13.1 L420.9 -16.1M418.7 -29.5 L419.1 -22.7 L420.9 -16.1M389.0 -12.0 L392.8 -18.7M409.7 3.5 L409.1 -3.4 L410.7 -10.1M366.2 -28.0 L371.3 -27.9 L376.5 -27.7 L381.6 -27.5 L386.7 -27.4 L391.9 -27.2M430.8 -11.2 L425.8 -13.5 L420.9 -16.1M528.5 29.2 L525.9 33.7 L523.3 38.3M547.3 46.5 L542.0 50.3 L536.7 54.1 L531.4 58.0M531.4 58.0 L529.6 53.0 L527.8 48.0 L525.6 43.1 L523.3 38.3M497.8 29.3 L501.9 33.4 L506.0 37.4 L510.1 41.5M489.2 56.7 L495.2 56.1 L501.2 55.1 L506.9 52.8M506.9 52.8 L508.4 47.1 L510.1 41.5M510.1 41.5 L516.5 39.1 L523.3 38.3M574.5 119.6 L573.2 114.5 L572.0 109.4 L570.8 104.3 L567.9 99.9 L564.7 95.6M541.9 114.9 L540.0 105.6M564.7 95.6 L558.4 95.1M540.0 105.6 L544.6 103.0 L549.2 100.4 L553.8 97.7 L558.4 95.1M609.5 46.7 L616.9 47.0 L624.3 47.3M609.5 46.7 L603.7 39.3M603.7 39.3 L606.8 34.0 L610.6 29.2 L614.5 24.5 L619.5 20.6M624.3 47.3 L627.2 43.2 L630.1 39.1 L633.0 35.0M633.0 35.0 L628.0 30.6 L622.9 26.4 L619.5 20.6M599.9 38.5 L603.7 39.3M619.5 19.5 L619.5 20.6M641.2 61.7 L634.1 62.5M634.1 62.5 L631.5 57.0 L627.9 52.1 L624.3 47.3M648.5 52.0 L646.6 46.2 L644.7 40.4 L642.8 34.5M642.8 34.5 L633.0 35.0M583.9 45.1 L583.5 51.2 L583.2 57.3 L582.8 63.4M609.5 46.7 L608.8 51.9 L608.1 57.1 L607.3 62.3 L606.6 67.5M606.6 67.5 L600.4 67.7 L594.3 67.7 L588.5 65.8 L582.8 63.4M556.9 50.1 L558.0 56.9 L560.3 63.4M560.3 63.4 L566.0 65.3 L571.6 67.1 L577.3 68.9M582.8 63.4 L577.3 68.9M564.7 95.6 L569.2 92.5 L573.6 89.4 L578.0 86.3M560.3 63.4 L554.9 68.4 L549.0 72.6M549.0 72.6 L550.5 78.6 L553.7 83.8 L556.5 89.3 L558.4 95.1M577.3 68.9 L577.5 74.7 L577.8 80.5 L578.0 86.3M595.9 110.1 L592.1 106.4 L589.7 101.7 L587.0 97.3 L583.3 93.6 L582.3 88.1M582.3 88.1 L578.0 86.3M574.2 419.8 L568.3 422.9 L562.4 426.0 L556.5 429.1M574.2 419.8 L576.2 424.9 L576.4 430.5 L577.1 436.0 L580.2 440.7M580.2 440.7 L574.3 442.6 L568.3 444.6 L562.4 446.5 L556.5 448.4M556.5 429.1 L556.5 435.5 L556.5 441.9 L556.5 448.4M543.8 420.5 L548.2 423.2 L551.8 426.9 L556.5 429.1M575.4 416.1 L574.2 419.8M583.5 442.8 L580.2 440.7M570.9 337.6 L574.6 344.6M570.9 337.6 L572.5 331.5 L574.1 325.3 L577.7 320.0M577.7 320.0 L583.7 320.1 L589.8 320.6 L595.5 318.2M583.3 346.2 L587.0 342.1 L590.8 337.9 L594.6 333.8 L598.4 329.6M583.3 346.2 L574.6 344.6M598.4 329.6 L597.3 324.1 L596.3 318.6M596.3 318.6 L595.5 318.2M564.6 358.1 L568.0 353.6 L571.3 349.1 L574.6 344.6M549.7 330.2 L554.7 332.8 L559.9 335.0 L565.5 335.8 L570.9 337.6M570.7 311.8 L574.0 316.0 L577.7 320.0M589.6 299.1 L592.1 303.6 L592.4 308.7 L594.5 313.3 L595.5 318.2M595.6 359.7 L591.5 355.2 L587.4 350.7 L583.3 346.2M614.6 341.4 L610.5 338.5 L606.5 335.5 L602.4 332.6 L598.4 329.6M610.6 311.9 L605.7 314.0 L600.8 315.9 L596.3 318.6M555.7 600.0 L559.8 605.1 L565.3 608.6M565.3 608.6 L565.0 614.7 L562.3 620.1M560.2 577.4 L559.5 583.1 L558.7 588.8 L557.8 594.5 L555.7 600.0M572.3 630.1 L567.8 624.6 L562.3 620.1M578.4 603.9 L571.7 606.0 L565.3 608.6M673.6 557.5 L673.3 562.6 L674.2 567.7 L675.3 572.7 L673.5 577.8M701.3 565.3 L696.7 569.6 L692.0 573.9 L687.4 578.2M687.4 578.2 L680.4 578.0 L673.5 577.8M652.5 596.8 L659.6 594.2 L666.1 590.5M654.9 624.6 L660.1 621.9 L665.3 619.1 L670.4 616.4 L675.6 613.6 L680.8 610.9M666.1 590.5 L669.0 594.5 L672.0 598.6 L674.9 602.7 L677.9 606.8 L680.8 610.9M647.1 567.4 L651.4 570.2 L655.7 573.1 L659.9 576.0 L664.2 578.9 L668.5 581.8M666.1 590.5 L668.5 581.8M673.5 577.8 L668.5 581.8M736.7 572.8 L733.2 576.9 L728.4 579.7 L724.8 583.7M708.7 567.5 L711.7 574.2 L714.7 580.9M724.8 583.7 L719.6 582.9 L714.7 580.9M745.6 600.9 L738.5 599.8 L731.5 598.7M724.8 583.7 L727.0 588.7 L729.3 593.7 L731.5 598.7M731.0 626.0 L727.9 621.8 L725.5 617.0 L721.5 613.4 L718.2 609.3M731.5 598.7 L727.4 602.7 L723.0 606.2 L718.2 609.3M713.7 32.8 L708.4 33.2 L703.2 34.7 L697.9 35.0 L692.6 35.8M691.8 50.9 L691.6 44.0 L691.4 37.1M692.6 35.8 L691.4 37.1M716.7 17.2 L711.3 16.1 L706.0 14.9 L700.6 13.8 L695.2 12.7M692.6 35.8 L692.4 29.9 L693.1 24.1 L693.5 18.4 L695.2 12.7M690.7 2.2 L690.2 5.7M695.2 12.7 L690.2 5.7M214.9 164.8 L211.1 160.8 L207.3 156.9 L203.5 152.9M214.9 164.8 L212.3 171.7 L209.7 178.7M203.5 152.9 L198.7 156.0 L193.6 158.5 L188.7 161.3 L182.9 162.1M209.7 178.7 L204.4 179.0 L199.1 178.9 L193.8 179.3 L189.2 182.7M189.2 182.7 L185.7 178.1 L181.6 173.8 L179.8 168.1M182.9 162.1 L179.8 168.1M205.9 140.0 L204.3 146.4 L203.5 152.9M225.8 162.9 L229.3 157.5 L232.8 152.0M225.8 162.9 L220.3 163.8 L214.9 164.8M227.8 140.0 L230.3 146.0 L232.8 152.0M176.3 140.3 L177.9 145.7 L179.6 151.2 L181.2 156.6 L182.9 162.1M203.4 211.5 L213.0 209.1M203.4 211.5 L200.2 206.9 L196.3 202.8 L194.4 197.4 L191.5 192.7 L188.4 188.1M188.4 188.1 L189.2 182.7M219.1 190.5 L216.8 196.6 L215.8 203.2 L213.0 209.1M219.1 190.5 L216.0 186.6 L212.8 182.6 L209.7 178.7M168.9 202.6 L173.9 199.2 L179.4 196.4 L183.6 191.9 L188.4 188.1M177.2 168.4 L179.8 168.1M247.7 152.9 L240.3 152.4 L232.8 152.0M247.7 152.9 L249.6 158.3 L251.4 163.7 L253.2 169.0M225.8 162.9 L229.9 166.2 L233.2 170.2 L236.1 174.4 L239.6 178.2 L241.9 182.9M253.2 169.0 L250.4 174.4 L246.5 179.0 L241.9 182.9M219.1 190.5 L225.0 189.9 L231.0 189.6 L236.6 188.0 L241.7 184.4M241.9 182.9 L241.7 184.4M213.0 209.1 L218.0 213.0 L223.6 215.8 L229.4 218.3M229.4 218.3 L233.8 214.7 L238.1 211.0 L242.5 207.4 L246.9 203.7 L251.2 200.1M241.7 184.4 L244.9 189.6 L248.1 194.8 L251.2 200.1M274.8 227.9 L269.0 226.1 L263.1 224.9M263.1 224.9 L257.8 228.9 L252.5 232.9 L247.3 236.9M232.6 233.8 L231.4 228.7 L229.9 223.6 L229.4 218.3M251.4 200.1 L253.6 205.1 L255.7 210.2 L259.2 214.6 L260.8 219.9 L263.1 224.9M536.5 161.8 L530.6 160.5 L524.6 159.1 L518.7 157.8 L512.8 156.4M525.0 134.5 L530.9 134.1M525.0 134.5 L521.7 139.0 L518.3 143.4 L514.6 147.5 L511.1 151.8M512.8 156.4 L511.1 151.8M512.4 181.9 L509.5 177.8 L506.4 173.8M512.8 156.4 L511.0 162.3 L509.3 168.3 L506.4 173.8M472.9 115.3 L468.1 117.6 L463.4 120.1 L458.7 122.6 L454.5 125.7 L451.8 130.9M472.9 115.3 L476.2 120.1 L479.5 125.0 L482.9 129.8 L486.2 134.7 L489.5 139.5M451.8 130.9 L455.3 134.7 L459.0 138.4 L462.2 142.5 L465.8 146.3 L470.5 148.9M470.5 148.9 L476.0 148.1 L481.6 147.7M481.6 147.7 L485.0 143.2 L489.5 139.7M473.0 114.1 L472.9 115.3M441.0 106.6 L440.8 113.1 L439.7 119.5 L438.1 125.8M438.1 125.8 L444.5 130.7M444.5 130.7 L451.8 130.9M444.5 130.7 L443.8 136.5 L443.1 142.3 L442.4 148.2 L441.8 154.0 L441.1 159.8M455.3 165.2 L450.5 163.5 L445.3 162.9 L441.1 159.8M455.3 165.2 L459.5 161.5 L463.5 157.6 L466.6 152.8 L470.5 148.9M486.6 175.1 L486.9 174.8M486.6 175.1 L481.3 174.8 L476.2 176.5 L471.0 176.6 L465.8 177.3 L460.6 177.6M486.9 174.8 L485.8 169.3 L484.8 163.9 L483.7 158.5 L482.6 153.1 L481.6 147.7M460.6 177.6 L457.9 171.4 L455.3 165.2M511.1 151.8 L505.5 149.2 L499.9 146.5 L494.6 143.3 L489.5 139.7M506.4 173.8 L499.9 173.9 L493.4 173.2 L486.9 174.8M525.0 134.5 L520.7 130.5 L516.2 126.5 L512.0 122.3 L508.0 117.8M508.0 117.8 L504.1 122.0 L501.2 127.0 L497.7 131.5 L493.5 135.4 L489.5 139.5M238.4 49.3 L234.5 53.7 L230.7 58.1 L226.8 62.4 L223.0 66.8M238.9 49.3 L243.5 53.8 L248.6 57.9 L252.5 63.1M228.8 75.2 L233.9 74.6 L239.1 75.5 L244.2 75.6 L249.2 74.2M228.8 75.2 L222.9 68.6M252.5 63.1 L250.9 68.6 L249.2 74.2M222.9 68.6 L223.0 66.8M207.9 43.5 L210.9 48.2 L213.9 52.8 L217.0 57.5 L220.0 62.2 L223.0 66.8M225.2 38.2 L229.6 41.9 L234.0 45.6 L238.4 49.3M250.2 32.3 L250.3 36.6M250.3 36.6 L245.8 40.2 L242.7 45.0 L238.9 49.3M250.3 36.6 L254.8 39.7 L259.3 42.9 L263.8 46.0 L268.3 49.1M268.3 49.1 L266.6 55.9M266.6 55.9 L262.5 59.4 L257.4 61.0 L252.5 63.1M190.1 81.0 L194.9 79.4 L199.3 77.0 L204.4 76.4 L208.9 74.2 L213.6 72.5 L218.6 71.6 L222.9 68.6M211.5 98.8 L216.8 96.7 L222.5 96.1 L227.8 94.0M227.8 94.0 L228.1 87.7 L228.5 81.5 L228.8 75.2M301.9 41.6 L297.8 47.1 L292.6 51.5M301.9 41.6 L299.9 36.5 L298.2 31.5 L298.1 26.0M292.6 51.5 L286.9 48.9 L281.2 46.2 L275.5 43.6M275.5 43.6 L277.7 38.2 L278.6 32.7 L278.8 27.0M298.1 26.0 L292.5 23.9 L286.5 23.3M278.8 27.0 L286.5 23.3M303.3 71.9 L295.1 67.6M321.1 48.4 L316.3 46.7 L311.5 45.0 L306.7 43.3 L301.9 41.6M295.1 67.6 L294.2 62.3 L293.4 56.9 L292.6 51.5M306.7 20.6 L314.1 21.5 L320.8 24.5M306.7 20.6 L302.4 23.3 L298.1 26.0M278.6 72.3 L276.2 67.7 L273.0 63.8 L270.3 59.5 L266.6 55.9M278.6 72.3 L283.9 70.0 L289.7 69.4 L295.1 67.6M268.3 49.1 L275.5 43.6M261.8 18.4 L267.4 21.2 L273.1 24.1 L278.8 27.0M284.3 -14.0 L283.6 -7.2 L284.7 -0.5M284.3 -14.0 L289.4 -16.1 L294.8 -17.6 L300.1 -19.0 L305.4 -20.6M305.4 -20.6 L307.8 -15.2 L310.0 -9.6 L312.9 -4.4M286.1 1.0 L284.7 -0.5M286.1 1.0 L291.5 2.0 L296.9 3.2 L302.4 2.0 L307.8 1.1M312.9 -4.4 L307.8 1.1M266.1 3.2 L272.3 2.0 L278.5 0.8 L284.7 -0.5M278.3 -20.1 L284.3 -14.0M306.0 -23.3 L305.4 -20.6M319.9 -3.8 L312.9 -4.4M286.5 23.3 L287.1 17.7 L287.7 12.1 L286.7 6.6 L286.1 1.0M306.7 20.6 L306.1 14.0 L305.2 7.4 L307.8 1.1M508.0 117.8 L508.3 113.4M540.0 105.6 L535.2 103.2M535.2 103.2 L529.7 105.0 L524.4 107.0 L518.9 108.9 L513.7 111.3 L508.3 113.4M495.9 102.4 L500.4 103.5M500.4 103.5 L504.3 108.4 L508.3 113.4M608.8 70.7 L606.8 76.8 L604.7 82.9M608.8 70.7 L614.3 72.2 L619.8 73.5 L625.5 71.6M604.7 82.9 L605.8 88.2 L607.4 93.1 L609.5 97.9 L613.5 101.7M625.5 71.6 L627.2 76.4 L628.9 81.3 L630.6 86.1 L632.3 91.0 L634.0 95.9M613.5 101.7 L620.1 100.9 L626.6 100.2 L633.1 99.4M633.1 99.4 L634.0 95.9M606.6 67.5 L608.8 70.7M582.3 88.1 L587.9 87.1 L593.7 86.4 L599.1 84.5 L604.7 82.9M634.1 62.5 L630.3 67.5 L625.5 71.6M604.5 111.3 L609.5 106.9 L613.5 101.7M654.7 77.8 L650.0 80.8 L645.6 84.1 L641.1 87.3 L636.6 90.5 L634.0 95.9M641.0 109.6 L637.0 104.5 L633.1 99.4M696.2 592.3 L692.5 596.9 L689.2 601.8 L685.9 606.7 L682.0 611.2M696.2 592.3 L705.7 592.8M705.7 592.8 L708.7 598.2 L711.3 603.8 L714.4 609.3M684.3 613.8 L682.0 611.2M684.3 613.8 L689.3 615.6 L694.6 615.3 L699.8 616.4 L704.9 617.5M704.9 617.5 L709.5 613.3 L714.4 609.3M687.4 578.2 L691.2 582.4 L693.7 587.4 L696.2 592.3M680.8 610.9 L682.0 611.2M714.7 580.9 L710.2 586.9 L705.7 592.8M718.2 609.3 L714.4 609.3M683.3 646.0 L682.3 640.6 L683.7 635.3 L684.7 629.9 L684.8 624.6 L685.5 619.2 L684.3 613.8M708.0 633.4 L706.9 628.1 L705.9 622.8 L704.9 617.5M486.0 200.7 L491.7 200.5 L497.3 200.6 L502.8 201.4 L507.7 204.9M486.0 200.7 L480.2 204.3M480.2 204.3 L479.9 210.4 L479.0 216.3 L477.2 222.1 L475.6 227.9M507.7 204.9 L507.0 210.4 L505.4 215.8 L505.3 221.3 L505.8 226.9 L505.7 232.4M508.7 204.2 L507.7 204.9M486.6 175.1 L487.0 180.2 L486.8 185.4 L486.1 190.5 L487.1 195.6 L486.0 200.7M455.4 193.2 L457.6 188.1 L458.1 182.5 L460.6 177.6M455.4 193.2 L460.0 196.1 L465.5 197.2 L470.8 198.7 L475.9 200.4 L480.2 204.3M667.5 34.8 L673.6 31.1M667.5 34.8 L661.4 32.4 L655.2 29.9 L649.0 27.4M673.6 31.1 L673.6 25.3 L673.5 19.6 L673.5 13.9M649.0 27.4 L649.0 20.9M649.0 20.9 L653.1 16.7 L657.1 12.4 L661.2 8.1M661.2 8.1 L667.3 11.0 L673.5 13.9M664.6 51.4 L665.6 45.8 L666.5 40.3 L667.5 34.8M691.4 37.1 L685.4 35.1 L679.5 33.1 L673.6 31.1M642.8 34.5 L649.0 27.4M690.2 5.7 L684.7 8.4 L679.1 11.1 L673.5 13.9M632.5 8.3 L636.7 11.4 L640.7 14.7 L644.9 17.7 L649.0 20.9M658.2 -3.9 L659.3 2.2 L661.2 8.1M247.7 152.9 L251.1 148.6 L254.1 144.0 L258.1 140.2M258.1 140.2 L261.1 144.5 L264.8 147.9 L267.8 152.2 L273.3 153.7M253.2 169.0 L260.3 168.8 L267.4 168.7M273.3 153.7 L271.8 158.9 L269.0 163.5 L267.4 168.7M284.4 220.7 L284.2 215.5 L283.8 210.3 L284.3 205.1M284.4 220.7 L279.9 224.7 L274.8 227.9M251.4 200.1 L257.0 198.4 L262.7 196.6 L268.3 194.9M284.3 205.1 L279.0 201.7 L273.6 198.3 L268.3 194.9M267.4 168.7 L271.3 173.4 L275.2 178.1M268.3 194.9 L270.4 189.2 L272.7 183.7 L275.2 178.1M237.3 121.9 L239.3 120.7M258.1 140.2 L258.0 137.1M239.3 120.7 L244.3 124.5 L249.8 127.7 L254.9 131.3 L258.0 137.1M290.9 137.9 L291.7 143.5 L292.6 149.1M290.9 137.9 L287.0 134.5 L283.1 131.1 L279.2 127.8 L275.4 124.4M292.6 149.1 L286.1 150.6 L279.7 152.1 L273.3 153.7M258.0 137.1 L262.3 134.0 L266.7 130.8 L271.0 127.6 L275.4 124.4M290.9 137.9 L294.8 133.6 L299.2 129.8 L302.0 124.6 L306.3 120.7M306.3 120.7 L302.3 115.7 L297.2 111.8 L293.0 107.0M293.0 107.0 L288.4 109.8 L283.9 112.7 L279.9 116.4 L275.6 119.6M275.4 124.4 L275.6 119.6M528.5 88.2 L522.9 87.3 L517.0 87.0 L511.7 84.7M528.5 88.2 L531.1 82.4 L533.8 76.6 L536.4 70.8M516.2 63.1 L523.4 63.0 L530.4 61.3M516.2 63.1 L513.1 67.3 L510.8 72.1 L507.6 76.3M507.6 76.3 L511.7 84.7M530.4 61.3 L533.0 66.3 L536.4 70.8M535.2 103.2 L533.5 98.0 L532.4 92.5 L528.5 88.2M500.4 103.5 L502.9 98.6 L506.5 94.4 L509.8 89.9 L511.7 84.7M549.0 72.6 L542.8 70.6 L536.4 70.8M531.4 58.0 L530.4 61.3M506.9 52.8 L511.9 57.6 L516.2 63.1M493.6 73.5 L500.6 74.9 L507.6 76.3M455.4 193.2 L450.4 196.3M441.1 159.8 L436.6 162.5 L431.5 163.5M431.5 163.5 L431.0 169.0 L431.3 174.5 L432.6 180.0 L433.1 185.4 L433.9 190.9M450.4 196.3 L444.7 195.0 L439.3 192.8 L433.9 190.9M407.1 174.4 L406.3 183.4M407.1 174.4 L412.5 172.3 L416.5 168.2 L421.2 165.1 L425.9 162.1M406.3 183.4 L410.5 186.9 L414.9 190.1 L419.7 192.6 L424.9 194.4M425.9 162.1 L431.5 163.5M424.9 194.4 L433.9 190.9M474.2 228.5 L468.7 226.7 L463.3 224.6 L458.1 222.2 L452.6 220.1 L447.8 216.7M441.8 239.4 L442.2 234.0 L442.9 228.7 L442.7 223.3 L445.7 218.5M447.8 216.7 L445.7 218.5M475.6 227.9 L474.2 228.5M450.4 196.3 L448.9 201.3 L449.1 206.5 L448.8 211.7 L447.8 216.7M413.2 220.1 L417.2 217.1M413.2 220.1 L413.8 226.0 L415.2 231.7 L416.1 237.5 L417.7 243.2M417.2 217.1 L422.9 216.7 L428.7 216.2 L434.3 217.8 L440.0 218.5 L445.7 218.5M417.2 217.1 L419.1 211.4 L421.0 205.8 L422.9 200.1 L424.9 194.4M200.4 241.1 L199.0 236.2 L197.0 231.4 L196.0 226.4 L195.5 221.2M182.8 220.3 L178.3 224.5 L173.0 227.7 L168.8 232.3 L164.3 236.5M182.8 220.3 L189.2 220.7 L195.5 221.2M203.4 211.5 L199.6 216.5 L195.5 221.2M168.9 202.6 L171.9 207.4 L175.3 211.9 L179.3 215.9 L182.8 220.3M385.5 118.3 L386.0 123.7 L386.9 129.1 L385.6 134.4 L384.1 139.7M385.5 118.3 L391.0 119.2 L396.5 120.2 L402.1 121.2 L407.6 122.1 L413.1 123.1M384.1 139.7 L389.0 142.8 L394.3 145.3 L399.0 148.7M399.0 148.7 L404.6 147.7 L409.1 144.5 L414.1 142.3M414.1 142.3 L416.3 135.5 L418.5 128.7M418.5 128.7 L413.1 123.1M415.1 103.4 L413.9 109.9 L413.9 116.6 L413.1 123.1M397.6 92.2 L394.3 96.9 L392.8 102.6 L390.6 107.9 L389.1 113.5 L385.2 118.0M369.8 150.6 L373.9 146.0 L379.1 143.1 L384.1 139.7M369.8 150.6 L372.7 154.7 L375.5 159.0 L378.4 163.1 L381.1 167.4M381.1 167.4 L386.2 165.9 L391.2 164.0 L396.6 164.2M396.6 164.2 L397.9 159.1 L398.8 153.9 L399.0 148.7M396.6 164.2 L401.9 169.3 L407.1 174.4M425.9 162.1 L422.3 157.5 L420.3 152.0 L416.9 147.4 L414.1 142.3M438.1 125.8 L431.4 125.6 L424.8 126.2 L418.5 128.7M350.3 70.3 L347.9 75.7 L347.8 81.6 L347.6 87.4 L345.4 92.8M324.0 79.4 L326.7 84.9 L328.8 90.6M345.4 92.8 L340.0 91.2 L334.5 90.0 L328.8 90.6M305.0 75.2 L303.6 80.7 L301.7 86.1 L301.6 91.9M301.6 91.9 L306.3 94.4 L310.9 96.9 L315.6 99.4 L320.2 101.9M320.2 101.9 L324.9 96.6 L328.8 90.6M284.3 205.1 L288.4 200.9 L293.4 197.8 L298.3 194.7M275.2 178.1 L282.4 177.3 L289.5 176.6M298.3 194.7 L296.1 190.2 L293.9 185.6 L291.7 181.1 L289.5 176.6M292.6 149.1 L297.2 153.4 L301.9 157.7M289.5 176.6 L293.5 172.4 L296.9 167.9 L300.4 163.5 L301.9 157.7M265.1 107.3 L259.6 107.6 L254.2 108.0 L248.7 108.3 L243.2 108.6M265.1 107.3 L266.5 102.3 L268.9 97.8 L271.3 93.3 L273.4 88.6M254.2 81.5 L251.8 86.2 L249.3 91.0 L246.8 95.7 L244.4 100.4 L241.9 105.2M254.2 81.5 L260.1 82.8 L266.1 84.1 L272.0 85.1M241.9 105.2 L243.2 108.6M272.0 85.1 L273.4 88.6M239.3 120.7 L241.2 114.7 L243.2 108.6M275.6 119.6 L272.4 115.2 L268.1 111.8 L265.1 107.3M293.0 107.0 L293.4 98.8M293.4 98.8 L288.6 95.9 L284.0 92.4 L279.5 89.0 L273.4 88.6M227.8 94.0 L232.2 98.1 L237.7 100.8 L241.9 105.2M249.2 74.2 L254.2 81.5M278.6 72.3 L275.2 78.6 L272.0 85.1M301.6 91.9 L297.7 95.6 L293.4 98.8M284.4 220.7 L289.9 221.2 L295.2 222.2 L299.8 225.5M299.8 225.5 L303.7 221.9 L307.8 218.6 L313.1 217.3M313.1 217.3 L317.4 220.6 L321.7 224.0 L326.1 227.3M298.3 194.7 L303.7 195.7 L309.2 196.7 L314.7 197.7M313.1 217.3 L314.8 210.8 L314.5 204.2 L314.7 197.7M311.8 164.0 L308.5 160.1 L303.9 157.8M311.8 164.0 L312.7 169.3 L313.6 174.5 L314.6 179.8 L315.5 185.1 L316.4 190.4 L317.4 195.6M301.9 157.7 L303.9 157.8M317.4 195.6 L314.7 197.7M380.6 227.3 L376.8 224.7M380.6 227.3 L385.9 225.7 L391.3 224.6 L396.8 223.7 L402.2 222.6 L407.5 221.1 L413.0 220.0M376.8 224.7 L378.0 219.7 L379.8 214.9 L382.2 210.3 L384.1 205.5 L386.0 200.7 L384.9 195.1M413.0 220.0 L409.7 215.7 L406.4 211.4 L403.8 206.5 L400.6 202.2 L396.6 198.5 L392.8 194.6M392.8 194.6 L384.9 195.1M406.3 183.4 L401.8 187.1 L397.3 190.8 L392.8 194.6M381.1 167.4 L379.3 172.3 L377.6 177.1 L375.9 181.9 L374.2 186.7M374.2 186.7 L379.5 190.9 L384.9 195.1M311.8 164.0 L317.0 165.2 L322.2 165.0 L327.5 164.7 L332.7 164.8M303.9 157.8 L307.7 153.6 L311.5 149.4 L315.3 145.3 L319.1 141.1 L323.0 136.9M332.7 164.8 L335.4 159.9 L337.1 154.5 L338.3 148.8 L341.9 144.3M341.9 144.3 L336.8 143.5 L331.6 142.7 L326.9 140.7 L323.0 136.9M306.3 120.7 L312.2 120.9 L318.1 120.9M323.0 136.9 L321.5 131.5 L318.8 126.5 L318.1 120.9M320.2 101.9 L321.2 108.8 L322.1 115.7M318.1 120.9 L322.1 115.7M317.4 195.6 L323.0 195.7 L328.6 195.9 L333.9 193.8M332.7 164.8 L335.9 169.0 L338.0 174.0 L341.4 178.1M333.9 193.8 L336.3 188.5 L339.2 183.5 L341.4 178.1M361.3 150.0 L356.1 145.7 L350.8 141.5M361.3 150.0 L359.4 154.9 L358.4 160.0 L358.2 165.4 L357.0 170.5 L354.1 175.1M350.8 141.5 L341.9 144.3M341.4 178.1 L347.9 177.0 L354.1 175.1M369.8 150.6 L361.3 150.0M374.2 186.7 L372.5 186.8M372.5 186.8 L367.9 183.9 L363.3 180.9 L358.7 178.0 L354.1 175.1M340.0 223.7 L343.4 219.2 L345.3 213.9 L347.8 208.9M375.4 224.8 L371.2 222.2 L366.9 219.5 L362.6 216.8 L358.3 214.2 L354.0 211.5 L349.7 208.8M349.7 208.8 L347.8 208.9M326.1 227.3 L333.0 225.5 L340.0 223.7M333.9 193.8 L338.3 196.8 L341.9 200.4 L344.5 205.0 L347.8 208.9M376.8 224.7 L375.4 224.8M372.5 186.8 L368.7 190.5 L364.9 194.1 L361.1 197.8 L357.3 201.5 L353.5 205.1 L349.7 208.8M352.8 129.8 L348.7 126.5 L345.6 122.3 L342.3 118.2 L338.8 114.3M352.8 129.8 L357.5 125.7 L362.2 121.6 L366.9 117.6 L371.6 113.5M338.8 114.3 L341.2 108.2 L344.6 102.6 L348.2 97.2M348.2 97.2 L353.9 98.6 L359.7 100.0 L365.4 101.4M365.4 101.4 L368.5 107.4 L371.6 113.5M350.8 141.5 L351.1 135.5 L352.8 129.8M322.1 115.7 L327.8 116.1 L333.4 116.8 L338.8 114.3M385.2 118.0 L378.3 116.1 L371.6 113.5M345.4 92.8 L348.2 97.2M374.1 83.5 L371.2 89.5 L368.3 95.4 L365.4 101.4" fill="none" stroke="#616466" stroke-width="1"/>
<path d="M293.6 54.2 L298.5 50.5 L304.7 50.5 L308.4 55.4 L309.6 62.8 L315.8 65.3 L314.5 70.2 L312.1 73.9 L315.8 81.3 L318.2 86.2 L317.0 89.9 L312.1 81.3 L308.4 75.1 L308.4 69.0 L304.7 62.8 L303.4 56.7 L298.5 55.4 L294.8 57.1ZM362.6 255.4 L367.5 252.2 L374.9 256.7 L383.5 261.6 L389.7 266.5 L389.7 270.9 L382.3 266.5 L374.9 261.6 L367.5 257.9 L363.8 257.1ZM432.5 371.4 L434.2 366.5 L436.4 363.1 L439.7 362.0 L440.8 357.6 L443.6 357.0 L445.3 360.4 L441.9 363.1 L438.6 366.5 L437.5 369.8 L435.3 371.4ZM418.1 406.9 L419.2 410.8 L420.3 408.6 L422.5 410.8 L421.4 414.1 L422.5 421.0 L422.9 425.2 L421.4 428.5 L419.8 421.0 L418.7 415.2ZM520.7 496.1 L524.4 501.0 L528.1 497.3 L526.8 505.9 L524.4 512.1 L525.6 520.7 L530.5 519.5 L526.8 525.6 L526.8 531.8 L523.2 529.3 L519.5 525.6 L521.9 520.7 L519.5 513.3 L521.9 504.7ZM598.0 299.8 L600.0 301.0 L604.9 298.5 L607.4 291.1 L609.9 280.0 L612.3 285.0 L616.0 281.3 L617.2 286.2 L620.9 287.4 L616.0 292.4 L612.3 297.3 L608.6 302.2 L603.7 307.1 L600.0 307.1 L598.0 303.4ZM536.0 597.0 L536.0 608.9 L540.5 614.0 L543.4 611.1 L549.3 608.9 L556.7 607.4 L557.4 604.4 L552.3 605.9 L549.3 605.2 L550.8 597.0 L548.6 597.0 L546.4 605.9 L541.9 608.1 L539.0 605.9 L539.0 597.0ZM778.5 722.3 L780.6 730.8 L786.2 735.0 L790.4 739.2 L789.0 746.2 L784.8 748.3 L782.0 742.0 L779.2 737.8 L777.8 729.4ZM763.7 786.3 L765.1 784.2 L768.6 783.5 L772.2 783.9 L772.9 786.3ZM115.8 653.0 L118.2 648.0 L123.2 645.8 L128.1 646.8 L130.5 651.7 L129.3 657.9 L125.6 661.6 L120.7 662.1 L117.0 659.1ZM36.5 675.1 L39.4 673.9 L43.1 676.8 L45.6 681.3 L43.8 683.7 L39.4 682.5 L36.9 678.8ZM51.7 685.0 L54.2 678.8 L57.9 686.2 L60.3 692.4 L65.3 696.1 L71.4 697.3 L77.6 698.5 L78.8 702.2 L73.9 703.9 L69.0 701.0 L62.8 701.0 L57.9 697.3 L54.2 692.4ZM134.2 701.0 L137.9 697.3 L141.6 694.8 L140.4 690.6 L144.1 689.2 L147.3 692.4 L147.8 697.3 L145.3 701.0 L141.6 703.4 L139.2 707.9 L135.5 707.1Z" fill="#29486c" stroke="none"/>
<path d="M-4.2 701.1 L2.1 698.3 L6.3 696.9 L11.2 695.5 L14.1 692.7 L18.3 693.4 L23.2 692.7 L24.6 694.8 L22.5 697.6 L21.1 701.1 L23.9 702.5 L28.1 701.1 L33.7 700.4 L39.4 699.7 L41.5 698.3 L42.2 700.4 L40.1 703.2 L39.4 708.1 L42.2 709.5 L45.0 710.2 L45.7 715.1 L46.4 719.4 L50.6 718.7 L54.1 718.0 L56.2 720.8 L60.5 722.2 L64.0 720.8 L66.1 725.0 L68.9 727.8 L70.3 732.0 L71.7 735.5 L74.5 737.6 L76.6 740.5 L78.7 736.2 L83.0 734.8 L85.8 737.6 L90.0 736.2 L92.1 740.5 L97.0 742.6 L100.5 746.1 L98.4 750.3 L101.2 752.4 L106.9 752.4 L108.3 741.9 L112.5 743.3 L116.7 737.6 L120.9 734.8 L123.7 739.1 L126.5 735.5 L130.8 740.5 L135.0 740.5 L140.6 744.7 L141.3 750.3 L146.0 752.0 L150.0 748.0 L154.8 743.4 L162.2 740.5 L169.5 739.7 L178.4 739.0 L185.8 740.5 L192.7 743.7 L201.1 750.8 L204.0 755.0 L236.0 756.0 L234.8 752.2 L234.1 748.7 L227.8 748.0 L223.6 742.3 L220.8 736.0 L215.1 740.2 L210.9 735.3 L203.9 732.5 L195.5 731.1 L188.4 724.1 L180.0 715.6 L176.9 716.8 L176.2 710.9 L182.8 705.0 L187.3 696.1 L194.7 691.0 L199.1 681.4 L200.6 673.2 L199.1 669.5 L197.6 674.7 L192.4 676.9 L191.0 682.8 L190.2 688.0 L184.3 688.8 L180.6 685.8 L179.9 682.1 L174.7 682.8 L171.8 679.9 L171.0 676.2 L174.0 674.0 L179.1 674.7 L184.3 668.8 L188.8 663.6 L191.0 661.4 L199.1 660.7 L203.5 657.7 L207.2 651.1 L209.4 648.1 L207.2 645.9 L210.9 644.4 L214.6 645.2 L213.9 648.9 L216.8 649.6 L222.7 646.6 L228.6 643.7 L234.5 642.2 L243.4 640.7 L249.3 641.8 L258.2 645.9 L267.0 643.0 L273.0 644.4 L281.8 641.5 L287.7 644.4 L290.0 644.3 L294.4 648.8 L298.9 647.3 L301.1 648.8 L300.3 641.4 L301.1 632.5 L301.8 625.1 L304.0 619.2 L306.3 615.5 L313.6 618.5 L314.4 626.6 L313.6 634.7 L317.3 639.9 L321.0 642.8 L321.8 647.3 L326.2 651.7 L329.1 653.2 L338.8 651.7 L337.3 645.8 L341.0 647.3 L344.7 644.3 L348.4 645.8 L350.6 641.4 L355.0 636.9 L357.2 639.1 L353.5 644.3 L360.9 644.3 L366.8 642.1 L371.3 639.1 L372.7 634.0 L370.5 629.5 L369.0 625.9 L372.7 627.3 L373.5 631.0 L377.9 629.5 L380.9 624.4 L383.8 625.9 L382.3 631.8 L386.8 636.2 L391.9 637.7 L390.5 640.6 L399.3 641.4 L412.6 641.1 L413.4 639.1 L412.6 635.5 L418.5 636.2 L421.5 631.8 L425.2 632.5 L425.9 636.2 L431.8 634.7 L437.7 634.7 L443.6 633.2 L448.1 635.5 L442.2 633.2 L443.7 636.2 L446.6 634.7 L447.4 638.4 L449.6 641.4 L447.4 643.6 L448.9 649.5 L457.7 653.9 L466.6 659.1 L468.8 653.9 L468.1 650.2 L474.7 649.5 L476.9 652.4 L482.8 651.7 L487.3 647.3 L491.0 645.8 L493.2 648.0 L488.8 650.2 L487.3 653.9 L481.4 656.9 L479.1 660.6 L479.9 665.0 L484.3 665.0 L488.8 667.2 L494.7 669.4 L496.9 673.9 L502.0 672.4 L502.0 674.6 L496.1 675.3 L491.7 672.4 L485.8 669.4 L479.9 667.2 L475.5 663.5 L479.9 668.7 L485.8 672.4 L490.2 676.1 L494.7 680.5 L500.6 682.7 L504.3 685.7 L507.2 690.1 L509.1 696.0 L509.4 703.4 L506.5 706.4 L510.9 704.2 L516.8 704.6 L522.7 705.2 L528.6 703.4 L534.5 700.5 L537.5 696.0 L541.9 694.5 L540.5 699.0 L541.9 703.4 L546.4 700.5 L552.3 697.5 L558.2 694.5 L563.4 692.3 L570.0 684.9 L573.0 682.0 L572.2 678.3 L577.4 676.8 L580.3 670.9 L586.3 668.7 L590.0 668.7 L595.9 669.4 L601.1 668.3 L606.3 668.3 L609.2 672.4 L615.1 676.1 L621.0 678.3 L626.9 682.0 L632.8 686.4 L634.3 691.6 L637.3 696.0 L640.2 701.9 L640.0 702.7 L645.6 704.1 L650.5 707.6 L651.2 718.1 L655.5 723.7 L661.1 728.0 L666.7 733.6 L669.5 739.2 L673.7 743.4 L675.1 749.1 L675.1 756.1 L678.0 758.2 L680.1 751.9 L686.4 750.5 L693.4 752.6 L696.9 757.5 L698.3 764.5 L701.9 771.5 L706.1 775.8 L708.2 780.0 L701.9 781.4 L699.1 785.6 L699.1 802.5 L690.0 810.0 L-10.0 810.0Z" fill="#004068" stroke="#000" stroke-width="1.7" stroke-linejoin="round"/>
<path d="M795.2 559.9 L800.0 558.8 L800.0 650.9 L796.2 648.8 L795.2 638.3 L792.1 632.1 L796.2 623.7 L794.1 613.2 L796.7 602.8 L795.2 592.3 L798.3 581.8 L794.1 573.5 L797.3 565.1ZM794.6 577.3 L800.0 572.4 L800.0 600.0 L794.6 600.0 L797.0 589.7 L793.3 584.7ZM778.5 648.8 L781.6 649.8 L782.0 657.2 L780.5 665.5 L777.8 668.0 L782.6 673.9 L785.8 682.3 L787.9 690.6 L790.0 699.0 L788.9 709.9 L785.8 709.9 L785.4 699.0 L783.3 690.6 L781.2 683.3 L777.8 676.0 L774.3 668.7 L777.8 665.1 L779.1 657.2ZM784.8 687.2 L787.6 690.0 L790.4 697.0 L784.8 704.1 L786.2 711.1 L780.6 716.0 L779.9 722.3 L777.8 722.3 L777.5 715.3 L782.0 711.1 L781.3 704.1 L786.9 697.0 L784.1 690.0Z" fill="#004068" stroke="#000" stroke-width="1.1" stroke-linejoin="round"/>
<path d="M8.4 713.0 L14.1 710.2 L18.3 709.5 L24.6 713.0 L32.3 715.1 L30.2 718.7 L25.3 723.6 L19.7 720.8 L14.1 718.0 L10.5 715.9ZM59.1 736.9 L64.7 734.1 L68.9 733.4 L70.3 739.1 L73.1 743.3 L75.9 744.0 L73.1 746.1 L67.5 744.0 L61.9 740.5ZM290.0 656.6 L298.9 655.5 L304.8 657.9 L298.9 657.0ZM307.7 657.9 L326.9 655.5 L338.8 653.5 L352.0 649.8 L363.9 645.4 L375.7 643.1 L387.5 642.4 L399.3 642.4 L412.6 642.4 L412.6 643.0 L399.3 643.1 L387.5 643.3 L375.7 644.0 L363.9 646.2 L352.0 650.7 L338.8 654.4 L326.9 656.4 L307.7 658.6ZM417.0 642.1 L423.0 640.8 L428.9 641.5 L434.8 639.3 L439.2 640.8 L443.6 641.8 L448.8 640.2 L447.3 643.6 L448.8 649.5 L439.9 647.3 L431.8 643.9 L423.0 642.4 L417.0 643.0ZM527.2 710.5 L528.6 714.0 L534.5 711.1 L541.9 707.5 L549.3 703.4 L554.5 699.7 L563.4 692.8 L562.6 694.5 L555.2 700.5 L549.3 704.6 L541.9 708.7 L534.5 712.3 L528.6 715.2 L526.4 712.3Z" fill="#5e504c" stroke="#000" stroke-width="1" stroke-linejoin="round"/>
<defs><pattern id="msh" width="24" height="24" patternUnits="userSpaceOnUse"><rect width="24" height="24" fill="#000"/><rect x="10" y="4" width="2" height="2" fill="#004068"/><rect x="17" y="3" width="2" height="2" fill="#004068"/><rect x="16" y="6" width="1" height="1" fill="#004068"/><rect x="2" y="7" width="1" height="2" fill="#004068"/><rect x="18" y="3" width="1" height="2" fill="#004068"/><rect x="1" y="18" width="3" height="1" fill="#004068"/><rect x="7" y="1" width="3" height="1" fill="#004068"/><rect x="4" y="17" width="1" height="2" fill="#004068"/><rect x="21" y="5" width="1" height="2" fill="#004068"/><rect x="6" y="11" width="1" height="2" fill="#004068"/><rect x="18" y="1" width="3" height="1" fill="#004068"/><rect x="17" y="13" width="2" height="1" fill="#004068"/><rect x="14" y="11" width="2" height="1" fill="#004068"/><rect x="22" y="7" width="1" height="2" fill="#004068"/><rect x="15" y="10" width="2" height="1" fill="#004068"/><rect x="2" y="3" width="3" height="1" fill="#004068"/><rect x="10" y="4" width="2" height="1" fill="#004068"/><rect x="21" y="2" width="3" height="2" fill="#004068"/><rect x="10" y="10" width="2" height="2" fill="#004068"/><rect x="14" y="2" width="1" height="1" fill="#004068"/><rect x="21" y="2" width="1" height="2" fill="#004068"/><rect x="20" y="18" width="2" height="1" fill="#004068"/><rect x="21" y="11" width="1" height="1" fill="#004068"/><rect x="19" y="3" width="2" height="1" fill="#004068"/><rect x="9" y="4" width="1" height="1" fill="#004068"/><rect x="15" y="2" width="1" height="1" fill="#004068"/><rect x="8" y="4" width="2" height="2" fill="#004068"/><rect x="13" y="11" width="2" height="1" fill="#004068"/><rect x="5" y="4" width="1" height="2" fill="#004068"/><rect x="15" y="18" width="1" height="1" fill="#004068"/><rect x="4" y="13" width="3" height="1" fill="#004068"/><rect x="10" y="4" width="3" height="2" fill="#004068"/><rect x="23" y="1" width="2" height="2" fill="#004068"/><rect x="12" y="12" width="2" height="1" fill="#004068"/><rect x="20" y="12" width="1" height="1" fill="#004068"/><rect x="6" y="14" width="1" height="1" fill="#004068"/><rect x="1" y="3" width="1" height="2" fill="#004068"/><rect x="3" y="11" width="3" height="1" fill="#004068"/><rect x="6" y="19" width="2" height="1" fill="#004068"/><rect x="11" y="19" width="2" height="1" fill="#004068"/><rect x="15" y="14" width="2" height="1" fill="#004068"/><rect x="4" y="3" width="2" height="2" fill="#004068"/><rect x="22" y="5" width="3" height="1" fill="#004068"/><rect x="16" y="11" width="1" height="2" fill="#004068"/><rect x="0" y="16" width="2" height="2" fill="#5e504c"/><rect x="22" y="8" width="3" height="1" fill="#5e504c"/><rect x="11" y="7" width="3" height="2" fill="#004068"/><rect x="10" y="20" width="1" height="2" fill="#5e504c"/><rect x="6" y="7" width="2" height="2" fill="#5e504c"/><rect x="6" y="16" width="2" height="1" fill="#004068"/><rect x="0" y="8" width="2" height="1" fill="#004068"/><rect x="19" y="11" width="2" height="2" fill="#5e504c"/><rect x="11" y="2" width="1" height="1" fill="#004068"/><rect x="6" y="10" width="1" height="1" fill="#004068"/><rect x="19" y="0" width="2" height="2" fill="#004068"/><rect x="20" y="2" width="1" height="1" fill="#004068"/><rect x="6" y="15" width="1" height="1" fill="#004068"/><rect x="10" y="2" width="2" height="1" fill="#004068"/><rect x="2" y="23" width="1" height="1" fill="#5e504c"/><rect x="0" y="4" width="3" height="1" fill="#5e504c"/><rect x="4" y="19" width="3" height="1" fill="#004068"/><rect x="11" y="4" width="3" height="2" fill="#004068"/><rect x="0" y="23" width="1" height="2" fill="#004068"/><rect x="4" y="13" width="1" height="1" fill="#004068"/><rect x="6" y="9" width="3" height="1" fill="#004068"/><rect x="10" y="8" width="3" height="1" fill="#5e504c"/><rect x="1" y="23" width="2" height="1" fill="#004068"/><rect x="16" y="13" width="3" height="1" fill="#004068"/><rect x="16" y="16" width="1" height="1" fill="#004068"/><rect x="19" y="0" width="1" height="1" fill="#004068"/></pattern></defs>
<path d="M78.7 736.2 L83.0 734.8 L85.8 737.6 L90.0 736.2 L92.1 740.5 L97.0 742.6 L100.5 746.1 L98.4 750.3 L90.0 751.7 L84.4 750.3 L80.1 746.1 L80.8 740.5ZM108.3 741.9 L112.5 743.3 L116.7 737.6 L120.9 734.8 L123.7 739.1 L126.5 735.5 L130.8 740.5 L135.0 740.5 L140.6 744.7 L140.6 752.4 L106.9 752.4ZM143.4 718.0 L147.6 705.3 L151.8 708.1 L154.7 716.6 L160.0 719.4 L160.0 752.4 L154.7 752.4 L151.8 741.9 L153.3 733.4 L146.2 726.4ZM143.0 716.8 L148.9 713.9 L156.3 722.7 L165.1 727.2 L174.0 734.5 L166.6 739.0 L154.8 743.4 L153.3 750.8 L144.4 749.3 L148.9 736.0 L145.9 725.7ZM197.6 669.5 L203.5 668.1 L210.9 665.9 L216.8 666.6 L221.3 671.8 L221.3 681.4 L216.8 690.2 L213.9 699.1 L206.5 702.0 L199.1 709.4 L196.1 716.8 L196.1 728.6 L191.7 730.1 L184.3 722.7 L176.9 713.9 L176.2 710.2 L182.8 705.0 L187.3 696.1 L194.7 691.0 L199.8 682.8ZM180.0 710.0 L194.1 710.0 L195.5 718.4 L208.1 731.1 L215.1 740.2 L220.8 736.0 L223.6 742.3 L227.8 748.0 L234.1 748.7 L234.8 752.2 L227.8 750.8 L219.4 745.1 L208.1 738.1 L195.5 731.1 L188.4 724.1 L180.0 716.3ZM792.1 554.6 L795.8 555.7 L796.7 567.2 L794.6 575.6 L797.5 583.9 L795.2 594.4 L796.7 604.9 L794.1 613.2 L796.2 623.7 L793.1 632.1 L795.8 640.4 L796.7 649.8 L792.1 648.8 L785.8 644.6 L779.5 646.7 L775.3 640.4 L783.7 636.2 L782.6 627.9 L787.9 623.7 L783.7 613.2 L779.5 612.2 L785.8 609.0 L790.0 600.7 L783.7 599.6 L780.5 590.2 L787.9 588.1 L792.1 577.7 L785.8 571.4 L783.7 568.2 L790.0 566.2ZM783.5 568.7 L789.7 567.5 L794.6 572.4 L800.0 570.0 L800.0 600.0 L782.3 600.0 L781.0 589.7 L787.2 582.3Z" fill="url(#msh)" stroke="none"/>
<path d="M176.1 -1.2 L184.7 9.9 L190.9 24.6 L193.3 41.9 L194.6 61.6 L193.3 81.3 L187.2 98.5 L181.0 110.8 L178.6 128.1 L170.0 145.3 L160.1 162.6 L150.2 179.8 L142.9 194.6 L139.2 200.0M140.0 203.5 L144.4 213.9 L146.6 218.3 L154.8 220.5M-2.5 250.5 L29.6 249.3 L49.3 245.6 L73.9 238.2 L103.4 229.6 L123.2 220.9 L140.4 217.7 L147.4 219.0 L154.8 219.8M154.8 220.5 L158.5 216.1 L164.4 215.3 L168.8 218.3 L169.5 222.7 L167.3 225.4 L156.3 225.7 L154.8 220.5M169.5 217.6 L178.4 212.4 L188.8 205.7 L199.1 199.8 L208.0 195.4 L213.9 189.5 L216.8 184.3 L222.7 181.4 L231.6 178.4 L243.4 174.0 L255.2 171.0 L267.0 165.9 L281.8 160.7 L300.0 158.5M157.7 225.7 L159.9 236.0 L162.2 250.8 L161.3 244.3 L165.0 264.0 L167.5 283.7 L166.3 303.4 L170.0 323.2 L172.4 342.9 L176.1 357.6 L177.3 372.4 L174.9 387.2 L170.0 400.0M170.0 400.0 L165.0 409.9 L157.6 422.2 L155.2 436.9 L152.7 451.7 L147.8 464.0 L145.3 473.9 L140.4 483.7 L134.2 493.6 L129.3 505.9 L126.8 523.2 L124.4 537.9 L123.2 557.6 L122.7 577.3 L120.7 600.0M120.7 600.0 L120.7 619.7 L123.2 634.5 L126.8 646.8 L128.1 659.1 L125.6 667.7M-2.5 455.4 L19.7 457.1 L39.4 459.1 L59.1 461.6 L73.9 466.5 L83.7 470.2 L93.6 469.0 L108.4 467.7 L123.2 467.0 L134.2 467.7 L141.6 473.4 L147.8 473.9 L162.6 472.7 L177.3 472.7 L192.1 471.4 L200.0 470.2M200.0 470.2 L224.6 469.0 L249.3 467.7 L264.0 463.5 L278.8 459.1 L286.2 451.7 L294.8 441.9 L303.4 429.6 L315.8 417.2 L328.1 406.2 L334.2 400.0M334.2 400.0 L340.0 396.4 L346.6 394.4 L353.3 395.0 L361.1 394.2 L367.1 391.9 L371.0 389.7 L376.6 385.3 L381.6 379.8 L385.4 372.0 L387.6 367.0 L392.1 363.7 L397.1 362.0M381.6 379.8 L388.8 380.3 L394.3 377.5 L399.3 374.8 L403.2 371.4M253.0 467.7 L246.8 478.8 L241.9 493.6 L232.0 508.4 L229.6 520.7 L222.2 530.5 L212.3 542.9 L209.9 557.6 L208.6 572.4 L204.9 584.7 L200.0 597.0 L198.8 600.0M200.0 604.9 L194.6 614.8 L189.7 627.1 L183.5 636.9 L179.8 648.0M234.3 -0.7 L229.1 5.9 L223.2 13.3 L222.4 25.1 L221.7 38.4 L218.8 50.2 L214.3 56.9 L208.4 61.3 L201.8 62.8 L194.4 65.0M234.3 -0.7 L238.0 4.4 L242.4 10.3 L243.1 14.8 L248.3 19.9 L252.7 26.6 L257.2 34.7 L257.9 42.8 L261.6 48.8 L267.5 53.9 L274.9 54.7 L283.0 55.4 L289.7 49.5 L298.5 47.3 L304.4 48.0 L311.8 53.2 L319.2 57.6 L330.0 65.7 L335.5 70.2 L347.8 78.8 L357.6 85.0 L357.7 85.5 L366.6 96.6 L375.5 102.7 L384.3 109.4 L392.1 113.2 L397.6 117.7 L399.3 126.5M298.5 157.6 L308.4 153.9 L323.2 153.9 L337.9 147.8 L340.0 148.7 L346.6 143.7 L355.5 141.5 L363.3 140.9 L368.8 140.4 L375.5 135.4 L382.1 136.5 L388.8 134.3 L393.2 129.9 L399.3 126.5 L403.2 130.4 L410.9 128.8 L419.8 127.6 L430.9 126.5 L439.7 126.0 L446.4 127.6 L453.0 128.2 L473.9 131.8 L498.5 130.5 L512.1 131.8 L520.7 139.2 L533.0 146.6 L545.3 152.7 L560.1 151.5 L572.4 153.9 L587.2 153.9 L600.0 152.2M388.2 93.3 L395.4 93.9 L402.0 95.5 L410.9 96.4 L417.6 98.8 L424.2 101.6 L429.2 106.6 L430.9 115.5 L430.9 126.5 L427.5 135.4 L424.8 142.0 L424.2 148.7 L422.0 152.6 L415.3 155.3 L406.5 157.6 L395.4 158.7 L382.1 159.2 L375.5 156.5 L368.8 150.4 L363.3 142.0 L359.9 133.2 L359.4 127.6 L362.2 121.0 L366.6 112.1 L372.1 105.5 L375.5 102.7 L382.1 96.6 L388.2 93.3M466.5 -1.2 L465.3 17.2 L461.6 32.0 L451.7 46.8 L429.6 53.0 L424.6 64.0 L419.7 76.4 L418.7 80.0 L415.3 85.5 L410.9 96.1 L405.4 102.2 L403.2 107.7 L405.4 114.3 L402.0 121.0 L399.3 126.5M399.3 126.5 L400.4 133.2 L398.7 140.9 L396.5 148.7 L395.4 158.7 L393.2 164.2 L391.5 170.0 L390.9 182.3 L391.6 200.0M392.1 200.0 L392.6 219.7 L388.4 239.4 L389.7 256.7 L390.9 273.9 L389.7 293.6 L393.3 310.8 L394.6 328.1 L394.8 331.0 L396.0 337.6 L395.4 345.4 L396.5 353.2 L398.2 357.6 L397.1 362.0 L395.4 366.5 L396.5 370.9 L399.3 374.8 L398.2 379.8 L397.1 386.4 L397.6 391.9 L400.4 396.4 L402.6 399.7 L403.2 405.2 L404.8 410.8 L407.6 415.2 L410.9 421.0 L417.2 432.0 L422.2 446.8 L427.1 457.9 L433.3 465.3 L430.8 473.9 L424.6 485.0 L417.2 501.0 L407.4 515.8 L400.0 528.1M399.3 126.5 L403.2 132.1 L406.5 137.6 L412.0 143.2 L417.6 148.7 L422.0 152.6 L427.5 159.8 L432.0 166.4 L434.2 170.0 L440.6 182.3 L451.7 190.9 L459.1 200.0M459.1 200.0 L466.5 209.9 L473.9 217.2 L478.8 225.9 L491.1 230.8 L498.5 233.3 L508.4 229.6 L515.8 232.0M582.3 -1.2 L581.0 14.8 L587.2 24.6 L592.1 34.5 L597.0 41.9 L599.0 46.8 L599.0 69.0 L600.0 91.1 L592.1 98.5 L584.7 104.7 L589.7 113.3 L592.1 123.2 L600.0 128.1M587.2 153.9 L577.3 170.0 L567.5 179.8 L557.6 192.1 L552.7 200.0M600.0 128.1 L604.9 137.9 L612.3 142.4 L624.6 142.9 L636.9 144.1 L649.3 139.2 L653.0 136.7M600.0 152.2 L607.4 145.3 L612.3 142.4M800.0 65.3 L789.7 70.2 L777.3 72.7 L762.6 78.8 L747.8 85.0 L733.0 92.4 L718.2 101.0 L705.9 108.4 L693.6 114.5 L681.3 120.7 L666.5 126.8 L653.0 136.7 L659.1 145.3 L665.3 149.0 L667.7 157.6 L673.9 163.8 L678.8 170.0 L681.3 177.3 L687.4 182.3 L696.1 184.2 L708.4 182.3 L723.2 179.3 L737.9 176.1 L752.7 173.6 L762.6 170.0 L777.3 168.0 L792.1 167.0 L800.0 168.7M708.4 182.3 L713.3 192.1 L720.7 200.0M399.3 374.8 L403.2 371.4 L405.4 367.6 L406.5 363.1 L408.7 359.3 L410.9 354.8 L415.3 351.5 L419.2 347.6 L422.5 342.1 L428.6 339.9 L434.2 335.4 L439.2 331.0 L444.3 325.6 L453.0 315.8 L459.1 303.4 L469.0 291.1 L476.4 278.8 L483.7 266.5 L489.9 253.0 L494.8 239.4 L498.5 232.8M550.2 200.0 L542.9 209.9 L533.0 219.7 L523.2 225.9 L515.8 232.0 L520.7 239.4 L528.1 244.3 L530.5 256.7 L535.5 271.4 L537.9 286.2 L547.8 298.5 L549.4 300.0 L550.0 305.5 L552.2 311.1 L556.1 313.9 L561.0 315.0 L563.8 318.8 L566.6 324.4 L569.9 328.8 L572.7 331.0 L573.8 334.4 L576.0 338.2 L577.7 341.0 L577.1 344.3 L576.6 348.8 L576.6 353.2M577.3 287.4 L572.4 296.1 L571.6 300.0 L568.2 304.4 L566.6 311.1 L564.9 316.6 L563.8 318.8M630.0 309.4 L623.1 311.1 L614.3 313.9 L605.4 316.6 L601.0 321.1 L596.5 325.5 L591.0 328.8 L587.1 329.7 L584.3 334.4 L579.9 337.7 L577.7 341.0M572.7 331.0 L575.5 328.8 L581.0 328.6 L587.1 329.7 L587.6 337.7 L589.3 345.5 L586.5 348.8 L582.1 351.0 L577.7 354.3 L574.3 353.2 L569.9 354.3 L568.8 348.8 L568.8 343.2 L569.9 336.6 L572.7 331.0M406.5 363.1 L410.9 361.5 L417.6 360.4 L424.2 358.7 L433.1 357.4 L441.9 356.7 L450.8 357.4 L460.0 358.1 L473.9 356.4 L488.7 353.9 L505.9 349.8 L523.2 347.8 L530.0 346.3 L538.9 346.0 L550.0 345.5 L556.6 342.7 L563.3 341.6 L568.8 342.7 L574.3 344.3 L581.0 344.9 L589.3 345.5 L599.8 347.7 L605.4 352.1 L612.0 354.9 L620.9 356.0 L630.0 355.4M576.6 349.9 L572.1 354.3 L567.7 358.8 L562.2 362.1 L557.7 366.5 L552.2 372.1 L548.3 379.8 L546.6 390.0 L543.3 399.8M576.6 353.2 L579.9 357.6 L585.4 361.5 L589.9 366.5 L593.7 372.1 L596.5 377.6 L598.7 384.3 L600.4 390.0 L603.2 399.8M582.1 351.0 L584.3 355.4 L585.4 361.5M600.0 389.7 L602.5 397.0 L603.7 400.0M630.0 308.4 L644.3 298.5 L659.1 289.9 L673.9 280.0 L688.7 273.9 L703.4 267.7 L715.8 259.1 L723.2 250.5 L733.0 248.0 L742.9 241.9 L752.7 235.7 L767.5 228.3 L782.3 223.4 L800.0 217.2M720.7 198.8 L728.1 208.6 L737.9 209.9 L745.3 219.7 L752.7 234.5 L757.6 249.3 L761.3 264.0 L765.0 273.9M733.0 248.0 L735.5 256.7 L742.9 264.0 L752.7 269.0 L765.0 275.1 L777.3 283.7 L787.2 293.6 L800.0 302.2M630.0 356.9 L644.3 360.1 L659.1 362.6 L678.8 362.6 L698.5 365.0 L718.2 365.0 L737.9 367.5 L747.8 366.3 L757.6 360.1 L772.4 353.9 L787.2 347.8 L794.6 340.4 L800.0 333.0M533.0 400.0 L533.0 407.4 L523.2 417.2 L515.8 427.1 L508.4 439.4 L498.5 448.0 L483.7 456.7 L469.0 461.6 L454.2 465.3 L441.9 466.5 L433.3 465.3M400.0 528.1 L392.1 540.4 L382.3 550.2 L372.4 560.1 L360.1 570.0 L347.8 579.8 L335.5 588.4 L318.2 593.3 L303.4 600.0M303.4 600.0 L298.5 603.7M606.2 398.8 L612.3 407.4 L620.9 416.0 L625.9 422.2 L627.1 432.0 L624.6 444.3 L623.4 464.0 L624.6 483.7 L624.6 498.5 L628.3 513.3 L635.7 528.1 L641.9 542.9 L644.3 557.6 L648.0 572.4 L651.7 587.2 L654.2 600.0M620.9 416.0 L632.0 423.4 L639.4 432.0 L649.3 440.6 L664.0 448.0 L678.8 454.2 L698.5 459.1 L718.2 461.1 L737.9 464.5 L752.7 466.5 L767.5 472.7 L782.3 478.3 L794.6 482.5 L800.0 487.4M800.0 530.5 L797.0 540.4 L794.6 555.2 L789.7 570.0 L783.5 582.3 L778.6 600.0M655.0 600.0 L659.4 608.9 L666.8 619.2 L675.7 630.3 L684.5 635.5 L691.9 644.3 L699.3 653.9 L705.2 662.0 L708.2 670.9 L712.6 679.8 L715.6 691.6 L720.0 701.9 L725.9 710.8 L730.3 720.0M713.8 688.6 L716.6 697.0 L724.4 708.3 L731.4 719.5 L737.0 729.4 L740.5 740.6 L741.9 753.3 L745.4 765.9 L748.3 777.2 L749.0 788.4M796.2 539.0 L795.2 552.6 L790.0 565.1 L782.6 581.8 L779.5 596.5 L779.5 611.1 L780.5 623.7 L782.6 636.2 L783.7 648.8 L787.9 661.3 L793.1 673.9 L798.3 686.4 L800.0 690.6M772.2 644.6 L775.3 638.3 L780.5 636.7 L784.7 640.4 L786.2 648.8 L784.7 658.2 L780.5 663.4 L775.3 662.4 L772.2 656.1 L771.5 649.8 L772.2 644.6M700.0 654.6 L716.7 654.6 L731.4 656.1 L750.2 653.0 L762.8 650.9 L772.2 649.8 L780.5 648.4M590.0 633.7 L604.8 633.7 L619.5 635.5 L634.3 639.1 L646.1 638.7 L655.0 642.1 L666.8 645.8 L672.7 647.3 L681.6 646.5 L690.5 651.0 L699.3 653.2 L708.2 655.8 L720.0 654.7 L731.8 655.8 L743.6 653.9 L750.0 651.7M440.0 611.1 L447.4 614.8 L457.7 615.5 L469.5 609.6 L484.3 610.0 L499.1 611.1 L509.4 609.6 L518.3 613.3 L528.6 618.5 L537.5 620.7 L549.3 622.9 L558.2 627.3 L565.6 630.3 L575.9 634.7 L587.7 631.8 L600.0 634.7M290.0 629.5 L297.4 623.6 L304.0 617.0 L306.3 615.5 L313.6 618.5 L325.5 619.2 L338.8 622.2 L346.1 625.9 L355.0 626.6 L360.9 631.0 L369.8 631.8 L378.6 629.5 L384.5 624.4 L393.4 617.7 L405.2 614.0 L415.6 613.3 L428.9 611.8 L437.7 610.3 L450.0 615.5M303.3 599.3 L301.1 607.4 L299.6 614.8 L298.9 622.2M-2.5 656.2 L9.9 653.0 L22.2 646.8 L39.4 641.9 L59.1 638.2 L73.9 639.4 L86.2 636.9 L103.4 635.0 L120.7 634.5 L137.9 635.7 L152.7 640.6M140.0 675.5 L148.9 677.7 L154.8 679.9 L159.2 675.5 L169.5 666.6 L176.9 656.3 L179.9 650.3 L188.8 651.1 L199.1 647.4 L209.4 643.7 L221.3 640.0M156.3 639.3 L166.6 645.9 L179.9 650.3M221.3 640.0 L240.0 636.0 L265.0 633.0 L290.0 629.5M7.4 653.0 L8.6 641.9 L7.4 627.1 L3.7 614.8 L0.0 609.9M85.0 645.6 L88.7 654.2 L98.5 662.8 L110.8 666.0 L125.6 667.7 L137.9 673.9" fill="none" stroke="#94760f" stroke-width="1" stroke-linejoin="round"/>
<path d="M-2.5 99.3 L149.0 99.3 L150.2 105.9 L155.2 108.4 L153.9 115.8 L150.2 121.9 L142.9 128.1 L136.7 136.7 L131.8 142.9 L182.3 142.9M298.5 -0.7 L302.2 3.0 L303.7 7.4 L303.0 11.8 L297.0 13.3 L288.2 14.8 L279.3 16.3 L274.2 18.5 L271.9 23.6 L270.5 28.8 L273.4 34.0 L277.1 38.4 L277.1 43.6 L274.2 47.3 L269.7 48.5 L266.0 46.5 L261.6 43.6 L256.4 41.4 L251.3 39.1 L245.3 36.2 L240.2 34.0 L235.0 33.7 L230.6 36.2 L226.9 40.6 L222.4 45.8 L220.2 50.2M196.1 -0.8 L194.8 0.7 L194.8 2.1 L195.8 3.3 L197.3 4.5 L197.9 5.1 L198.1 6.6 L197.4 8.7 L197.5 10.3 L198.3 11.4 L200.3 11.8 L201.9 12.6 L202.6 13.7 L202.5 15.0 L201.7 16.7 L201.0 17.5 L200.9 18.8 L202.1 20.3 L203.4 21.8 L202.5 24.3 L201.1 24.4 L199.4 23.8 L197.8 23.2 L196.1 24.5 L196.5 26.5 L196.9 27.2 L198.0 28.4 L198.2 30.3 L197.9 32.3 L198.3 33.8 L199.8 34.6 L201.6 35.3 L203.1 36.3 L203.3 37.6 L203.0 39.3 L202.8 40.9 L202.9 42.3 L204.2 43.1 L206.0 43.8 L207.1 44.9 L207.0 46.5 L206.3 48.6 L207.0 49.9 L208.3 50.6 L210.2 50.7 L211.8 51.4 L212.2 53.2 L213.3 55.3 L214.5 54.8 L215.1 53.6 L215.5 52.3 L215.3 50.8 L216.1 49.7 L217.1 49.1 L218.3 50.4 L219.8 50.3 L220.8 51.6 L221.6 53.0 L221.2 54.2 L222.0 55.4 L222.9 56.4 L223.9 57.1 L225.1 56.9 L226.0 58.1 L226.6 59.3 L226.5 60.7 L226.1 62.0 L224.9 63.1 L224.5 64.4 L224.5 65.9 L224.3 67.6 L223.4 68.7 L222.2 69.5 L220.8 70.3 L221.5 71.5 L222.6 72.3 L223.8 72.9 L225.0 74.2 L224.0 75.2 L222.7 75.8 L221.3 76.6 L220.6 77.8 L220.3 79.3 L219.8 80.3 L220.7 81.5 L221.4 83.1 L222.1 84.0 L221.6 85.2 L221.3 86.4 L221.0 87.7 L220.5 88.8 L219.6 90.0 L218.6 91.0 L217.9 92.0 L216.8 92.5 L215.6 93.0 L214.1 93.3 L213.3 92.2 L212.5 91.0 L211.6 89.9 L210.8 89.0 L209.9 88.2 L209.3 87.4 L207.8 88.2 L206.2 88.6 L205.7 89.8 L205.3 90.9 L205.1 92.1 L205.1 93.4 L205.0 94.6 L204.7 95.8 L204.2 96.9 L203.7 98.1 L203.2 99.2 L203.1 100.1 L201.9 100.8 L200.9 101.7 L199.2 102.2 L198.7 101.1 L198.3 99.8 L197.8 99.1 L198.1 97.6 L198.0 95.9 L198.4 94.9 L197.7 93.8 L197.1 92.7 L196.5 91.3 L195.2 91.3 L194.0 91.5 L192.8 92.3 L192.6 94.0 L191.9 94.8 L192.7 96.0 L193.2 97.5 L193.9 98.7 L195.1 99.8 L196.8 100.6 L196.2 102.0 L195.1 102.9 L193.6 103.4 L194.3 103.3 L193.2 104.0 L192.5 105.1 L192.2 106.4 L192.0 107.8 L191.9 109.3 L191.0 110.2 L189.8 110.9 L188.3 111.7 L187.6 112.9 L187.4 114.3 L187.5 116.0 L187.2 117.3 L186.6 118.4 L185.4 119.0 L183.8 119.4 L182.4 121.2 L183.4 122.3 L184.8 123.1 L186.5 123.8 L186.7 125.1 L186.6 126.7 L186.6 128.2 L187.1 129.4 L188.3 130.0 L190.1 130.7 L190.4 132.3 L189.8 133.4 L188.5 134.4 L187.0 135.2 L186.1 135.8 L186.0 137.4 L186.1 139.2 L185.9 140.7 L184.7 141.4 L182.6 141.4 L180.8 143.2 L181.5 144.4 L182.8 145.3 L184.0 146.3 L184.6 148.9 L183.4 149.5 L181.4 149.3 L179.6 149.4 L178.8 152.0 L180.4 152.7 L182.3 153.3 L182.7 154.7 L182.0 156.0 L180.2 155.8 L179.1 156.8 L178.6 158.6 L178.0 160.4 L177.2 161.1 L175.5 161.4 L173.8 161.5 L172.3 161.9 L172.1 162.5 L171.1 163.8 L170.2 165.4 L169.1 166.2 L168.2 165.4 L166.1 165.9 L165.0 166.8 L164.5 168.1 L164.9 170.1 L166.7 169.7 L167.8 170.3 L168.3 171.7 L168.7 173.2 L168.8 173.0 L168.5 174.4 L169.2 176.4 L169.3 177.9 L167.8 179.4 L166.1 178.7 L164.6 178.4 L163.5 179.3 L162.6 180.6 L162.4 180.8 L162.8 182.0 L162.6 183.3 L161.8 184.9 L162.1 185.0 L160.9 185.8 L160.2 187.3 L159.3 188.7 L158.1 189.2 L156.4 189.2 L154.7 189.4 L153.2 191.3 L154.6 192.1 L156.0 193.0 L156.4 194.3 L156.4 195.8 L155.3 194.9 L154.1 194.5 L152.8 194.4 L151.5 194.6 L150.7 194.9 L150.0 196.2 L148.6 197.0 L147.4 198.8 L148.7 199.6 L150.2 200.0M202.5 98.5 L259.1 99.3 L305.9 99.3 L304.7 91.1 L303.4 83.7 L319.5 85.7 L357.6 85.0 L400.0 84.2M400.0 84.2 L449.3 86.7 L498.5 88.2 L547.8 89.2 L600.0 90.6M600.0 90.6 L629.6 90.6 L698.5 90.6 L760.1 89.2 L781.0 88.2 L800.0 91.6 L804.4 92.4M629.6 90.1 L636.9 85.0 L649.3 81.3 L661.6 78.3 L670.2 75.1 L675.1 69.0 L683.7 66.0 L691.1 61.6 L692.4 55.4 L698.5 51.7 L702.2 44.3 L713.3 38.2 L725.6 32.0 L737.9 25.9 L747.8 16.0 L757.6 8.6 L760.1 7.4M741.6 -1.2 L746.6 4.9 L757.6 7.4 L760.1 11.1 L757.6 14.8 L762.6 20.9 L770.0 27.1 L774.9 33.3 L782.3 36.5 L792.1 33.3 L800.0 25.9 L804.4 23.4M781.0 88.2 L777.3 94.8 L776.1 103.4 L774.9 112.1 L770.0 110.8 L762.6 115.8 L757.6 123.2 L753.9 130.5 L747.8 133.0 L740.4 129.3 L733.0 131.8 L725.6 135.5 L720.7 141.6 L714.5 146.6 L709.6 142.9 L707.1 137.9 L702.2 140.4 L696.1 145.3 L688.7 149.0 L686.2 157.6 L680.0 162.6 L673.9 161.3 L666.5 167.5 L659.1 170.0 L651.7 176.1 L643.1 181.0 L634.5 181.0 L624.6 182.3 L614.8 184.7 L607.4 190.9 L603.7 200.0M604.9 200.0 L603.7 203.7 L600.0 208.6M600.0 209.9 L589.7 208.6 L584.7 211.1 L583.5 222.2 L582.3 232.8M149.8 199.9 L148.1 200.7 L147.7 201.9 L147.9 203.3 L149.1 205.1 L149.9 206.7 L148.9 206.3 L149.0 208.1 L148.9 210.2 L149.5 211.6 L151.0 212.0 L152.9 212.3 L154.2 213.3 L154.8 214.5 L154.3 215.8 L152.9 217.3 L152.1 218.7 L153.7 218.4 L152.7 219.7 L151.6 220.9 L150.5 221.8 L149.3 222.2 L148.4 221.7 L146.8 221.8 L145.1 221.8 L143.8 222.3 L143.2 223.7 L142.9 225.4 L142.5 226.6 L141.8 227.7 L140.7 228.5 L139.3 229.1 L137.8 229.5 L136.6 230.3 L136.3 232.4 L137.9 232.8 L139.4 233.2 L140.2 234.4 L140.5 236.1 L140.8 236.5 L140.3 237.8 L140.3 239.5 L140.1 241.0 L139.3 242.3 L137.9 243.0 L136.4 243.2 L135.1 243.6 L134.1 244.7 L133.2 245.9 L132.1 246.8 L130.1 247.1 L129.9 245.8 L129.5 244.5 L128.8 243.5 L127.9 242.6 L127.0 242.0 L126.3 243.2 L125.3 244.1 L124.1 244.7 L122.8 245.8 L123.3 247.0 L124.2 248.1 L125.1 249.2 L125.8 250.9 L124.5 251.4 L123.2 251.7 L121.8 251.7 L120.5 252.1 L119.2 253.0 L119.7 254.2 L120.4 255.3 L120.8 256.6 L120.7 257.7 L121.9 258.3 L123.1 258.9 L124.3 259.2 L125.5 259.0 L124.7 260.2 L123.9 261.3 L122.9 262.3 L121.6 263.0 L120.8 263.8 L119.7 262.9 L118.3 262.3 L117.3 261.6 L117.4 262.8 L117.3 264.0 L117.1 265.3 L116.7 266.5 L116.5 267.7 L116.5 268.9 L116.7 270.2 L116.9 271.5 L117.0 272.7 L116.9 274.0 L116.4 275.1 L115.9 276.3 L115.3 277.5 L115.2 278.9 L115.8 280.1 L116.4 281.2 L117.1 282.4 L117.4 283.6 L117.1 285.4 L115.8 285.4 L114.4 285.1 L113.1 285.3 L111.9 285.9 L110.8 286.6 L109.7 287.5 L109.2 287.2 L109.4 288.5 L109.3 289.8 L108.8 291.3 L110.0 291.5 L108.7 291.0 L107.2 291.2 L105.7 291.4 L104.3 291.3 L104.3 290.6 L103.0 291.2 L101.3 291.6 L100.1 292.3 L99.2 293.3 L98.7 294.6 L98.7 296.2 L98.7 297.8 L98.1 298.8 L96.5 299.2 L94.8 299.4 L93.7 301.9 L94.9 302.5 L96.5 302.8 L97.9 303.3 L99.0 304.0 L99.2 306.8 L97.8 307.0 L96.1 306.8 L94.6 306.8 L93.7 307.7 L94.0 309.3 L92.3 309.1 L90.8 308.6 L90.0 307.7 L90.2 306.0 L89.3 304.8 L88.5 306.3 L88.8 307.5 L89.6 308.6 L91.3 309.5 L92.6 310.6 L93.3 311.7 L93.6 312.9 L93.1 314.3 L92.4 315.8 L90.3 315.7 L89.1 316.4 L89.1 318.4 L89.5 320.8 L88.2 322.3 L86.6 322.0 L84.6 321.2 L82.9 320.9 L82.0 321.5 L81.2 323.2 L80.5 325.3 L79.8 322.7 L80.7 324.1 L81.1 326.2 L81.6 328.1 L82.7 329.0 L83.9 327.4 L84.5 329.5 L84.8 331.3 L84.4 332.7 L82.8 333.5 L81.0 334.5 L80.9 336.2 L81.4 337.5 L82.6 338.2 L84.5 338.4 L86.4 338.6 L86.5 342.2 L85.2 341.9 L83.8 341.1 L82.3 339.7 L81.0 339.5 L79.9 340.8 L79.3 342.0 L79.3 343.6 L78.6 344.6 L77.4 345.2 L75.7 345.5 L74.4 347.6 L75.1 348.6 L76.2 349.2 L77.9 349.0 L79.6 348.8 L79.6 351.7 L78.5 350.9 L77.6 349.4 L76.6 348.2 L75.5 347.5 L74.1 347.7 L72.7 348.1 L72.4 348.3 L72.0 349.6 L71.1 350.7 L69.3 351.4 L68.2 353.5 L69.1 354.5 L70.5 355.1 L72.2 355.4 L73.6 355.9 L74.7 358.3 L73.3 358.9 L72.0 359.5 L70.8 360.2 L69.9 361.1 L69.5 362.6 L69.2 363.6 L70.4 364.3 L71.3 365.3 L71.7 366.7 L72.0 368.1 L72.5 369.4 L73.9 370.6 L75.1 370.2 L76.4 369.7 L77.6 369.4 L78.8 369.3 L80.4 370.2 L79.2 371.1 L78.0 372.1 L77.5 373.4 L77.0 374.8 L76.8 376.3 L76.3 377.5 L75.5 378.6 L74.7 379.7 L73.9 380.9 L73.7 382.7 L75.1 382.9 L76.5 383.2 L77.8 383.7 L79.1 384.6 L79.3 386.0 L79.7 387.4 L80.4 388.5 L81.4 389.8 L80.6 390.9 L79.6 391.9 L78.4 392.7 L77.2 393.5 L76.1 394.3 L75.2 395.0 L74.4 396.0 L73.6 397.0 L72.7 397.9 L71.8 398.3 L71.4 400.0M136.7 232.0 L200.0 232.0M200.0 232.0 L293.6 232.0 L329.3 231.5 L400.0 232.0M400.0 232.0 L486.2 232.8 L582.3 232.8 L600.0 232.8M600.0 232.8 L673.9 232.0M293.6 232.0 L297.3 238.2 L301.0 241.4 L299.8 261.6 L297.3 281.3 L294.8 303.4 L292.4 328.1 L289.9 352.7 L287.4 377.3 L285.0 400.0M285.0 400.0 L282.5 424.6 L278.8 456.7 L275.1 486.2 L273.4 508.4 L273.9 528.1 L275.1 552.7 L276.4 577.3 L277.6 600.0M277.6 600.0 L278.3 619.7 L279.3 639.4 L280.0 653.0M486.2 232.8 L491.1 256.7 L496.1 283.7 L501.0 310.8 L505.9 340.4 L510.8 372.4 L514.5 400.0M514.5 400.0 L517.0 412.3 L520.7 427.1 L524.4 441.9 L530.5 453.0 L534.2 461.6 L531.8 470.2 L539.2 475.1 L535.5 480.0 L528.1 486.2 L526.8 496.1 L524.4 503.4 L521.9 515.8 L525.6 528.1 L528.1 540.4 L525.6 555.2 L523.2 570.0 L528.1 579.8 L531.8 589.2 L534.2 597.0 L536.7 604.4M339.2 589.2 L400.0 589.2M400.0 589.2 L531.8 589.2M335.1 600.0 L338.8 604.4 L343.2 608.9 L346.1 612.6 L352.0 615.5 L354.3 619.2 L353.5 624.4 L349.8 628.8 L351.3 634.7 L355.0 636.9M541.9 614.0 L552.3 614.8 L578.9 615.5 L600.0 617.0M590.0 617.0 L619.5 618.5 L660.9 621.9 L693.4 623.6 L720.0 625.4 L738.5 626.6 L737.7 631.0 L739.9 636.9 L740.7 642.8 L743.6 644.3 L750.0 645.1M700.0 623.7 L720.9 624.7 L738.7 625.8 L740.8 634.1 L739.7 642.5 L743.9 644.6 L751.3 643.6 L753.3 634.1 L754.4 625.8 L752.3 617.4 L751.3 609.0 L755.4 604.9 L761.7 603.8 L769.0 606.9 L775.3 609.0 L780.5 611.1M673.9 232.0 L686.2 227.1 L698.5 224.6 L708.4 220.9 L720.7 217.2 L726.8 214.3 L737.9 214.3 L757.6 215.3 L777.3 216.0 L800.0 217.2 L804.4 217.7M673.9 232.0 L671.4 236.9 L665.3 241.9 L659.1 248.0 L654.2 257.9 L661.6 265.3 L670.2 271.4 L678.8 277.6 L688.7 278.3 L692.4 286.2 L697.3 294.8 L701.0 305.9 L708.4 315.8 L714.5 325.6 L723.2 331.8 L730.5 337.9 L736.7 345.3 L741.6 353.9 L750.2 358.9 L755.2 365.0 L761.3 371.2 L760.1 378.6 L765.0 383.5 L768.7 390.9 L773.6 397.0 L776.1 400.0M776.1 398.8 L783.5 403.7 L789.7 408.6 L793.3 414.8 L794.6 422.2 L798.3 427.1 L798.3 436.9 L800.0 441.9M-2.5 409.4 L72.7 409.4M71.5 399.9 L71.8 401.6 L72.5 402.9 L73.9 403.5 L75.6 403.7 L77.1 405.5 L76.5 406.6 L75.5 407.3 L74.2 407.9 L72.9 408.5 L71.7 409.5 L71.6 410.8 L71.9 412.4 L72.0 413.9 L71.5 415.1 L70.4 415.7 L71.2 417.1 L72.2 418.2 L73.6 418.6 L75.3 418.7 L75.7 419.5 L76.1 418.3 L77.0 417.2 L78.0 416.1 L78.6 415.0 L79.0 413.7 L78.7 412.3 L79.3 413.5 L79.7 414.7 L79.7 416.0 L79.3 417.3 L79.1 418.5 L79.2 419.8 L79.7 421.0 L80.2 422.3 L79.3 423.4 L78.2 424.0 L77.0 424.6 L75.8 425.3 L74.7 425.9 L73.6 427.2 L74.2 428.3 L74.9 429.5 L75.3 430.7 L75.6 431.9 L75.7 433.2 L75.8 434.6 L76.0 435.9 L76.8 436.9 L77.8 437.8 L78.8 438.7 L79.5 439.7 L79.9 441.0 L80.3 442.2 L81.1 443.4 L82.4 444.1 L83.9 444.5 L85.2 445.9 L83.8 446.4 L82.4 446.8 L81.0 447.4 L79.9 448.3 L79.0 449.2 L79.5 450.4 L79.7 451.6 L79.8 452.9 L79.5 454.2 L79.3 455.5 L79.8 457.2 L81.2 457.3 L82.6 457.4 L84.0 457.6 L85.2 458.0 L86.4 459.0 L86.4 460.6 L86.8 461.9 L87.6 463.1 L88.6 464.2 L90.2 464.1 L91.5 464.5 L92.6 465.5 L93.1 466.3 L92.2 467.3 L91.9 468.7 L91.9 470.3 L91.4 472.1 L90.3 472.9 L89.0 473.1 L87.5 473.0 L85.9 472.7 L84.4 472.9 L83.3 473.9 L82.4 475.2 L81.8 477.0 L80.7 477.9 L79.1 477.9 L77.2 477.9 L75.9 478.6 L75.2 479.9 L75.1 481.7 L75.2 482.3 L75.5 483.5 L74.9 484.9 L73.9 486.4 L73.4 487.7 L75.4 489.8 L76.4 488.5 L77.4 487.0 L78.5 486.3 L79.8 486.3 L81.2 487.5 L80.9 489.5 L81.6 490.8 L83.3 490.4 L82.8 492.4 L82.2 494.1 L80.9 494.8 L79.0 494.4 L76.3 495.1 L76.1 496.4 L76.5 497.6 L78.0 498.6 L79.8 499.5 L79.8 502.6 L78.3 502.8 L76.1 502.0 L74.3 501.8 L72.9 502.3 L72.0 504.0 L72.4 506.4 L72.1 508.0 L70.9 508.8 L68.8 508.7 L67.0 508.4 L65.5 508.6 L64.6 509.9 L64.1 512.0 L63.7 514.0 L63.4 513.8 L62.3 514.8 L60.3 515.6 L59.1 516.6 L59.2 519.8 L60.8 519.7 L62.5 519.4 L64.2 519.3 L65.4 519.7 L65.5 523.2 L64.1 522.4 L62.6 521.3 L61.2 520.8 L60.0 521.4 L58.6 522.9 L59.3 524.7 L59.8 526.3 L58.9 527.4 L57.0 528.0 L55.7 528.6 L54.5 529.3 L54.2 530.5 L54.6 532.4 L54.7 534.0 L52.6 535.8 L51.4 535.3 L50.4 533.9 L49.4 532.7 L46.5 533.3 L47.2 534.4 L48.3 535.5 L49.5 536.6 L50.4 537.6 L50.1 539.8 L48.3 540.0 L46.8 540.5 L45.7 541.4 L45.2 542.6 L45.3 544.4 L45.2 545.7 L45.0 547.0 L44.1 548.1 L42.8 549.0 L41.6 549.9 L41.1 552.2 L42.4 552.9 L43.9 553.4 L45.5 553.8 L46.4 554.8 L46.9 556.5 L48.3 555.6 L49.0 554.3 L49.5 552.8 L49.4 554.2 L49.1 555.5 L48.1 556.5 L47.0 557.5 L46.2 558.6 L45.9 559.9 L45.9 561.3 L45.6 562.9 L44.5 563.5 L43.3 563.8 L42.0 563.9 L40.6 563.6 L39.3 563.7 L37.7 564.7 L38.5 565.9 L39.4 567.0 L39.9 568.3 L39.9 569.8 L39.9 571.2 L40.2 572.2 L39.7 573.5 L39.4 574.9 L39.1 576.2 L38.5 577.1 L39.2 578.2 L39.8 579.4 L40.3 580.7 L41.2 581.7 L42.2 582.6 L43.2 583.6 L42.7 584.7 L41.9 585.7 L40.9 586.5 L40.0 587.3 L39.4 588.4M39.4 588.4 L179.8 588.4 L178.6 594.6 L176.1 600.0M177.3 600.0 L173.6 612.3 L176.1 624.6 L182.3 634.5 L183.5 644.3 L181.0 651.7 L188.4 657.9 L192.1 661.6 L194.6 664.5M339.2 589.2 L337.9 594.6 L335.5 600.0M335.5 600.0 L335.0 600.0M183.6 638.5 L187.3 650.3 L191.0 659.9 L193.5 661.0" fill="none" stroke="#000" stroke-width="1" stroke-linejoin="round"/>
<path d="M506.5 706.4 L502.8 701.9 L500.9 695.3 L502.0 688.6 L503.8 686.6" fill="none" stroke="#000" stroke-width="1.1"/>
<path d="M243.4 671.8 L248.6 681.4 L247.8 690.2 L245.6 697.6 L241.9 703.5 L236.0 709.4 L230.1 716.8 L221.3 723.5 L217.6 725.7" fill="none" stroke="#000" stroke-width="1.2" stroke-dasharray="5 3 2 4 7 3"/>
<path d="M222.7 657.0 L230.1 656.0" fill="none" stroke="#000" stroke-width="1.3"/>
<path d="M236.0 658.5 L244.9 655.5" fill="none" stroke="#000" stroke-width="1.3"/>
<path d="M251.5 654.8 L262.6 656.5 L280.3 659.2" fill="none" stroke="#000" stroke-width="1.3"/>
<circle cx="400.8" cy="400.8" r="519.48" fill="none" stroke="#e8e8e8" stroke-width="1"/>
<path d="M411.40 1.44A399.50 399.50 0 1 1 390.20 1.44" fill="none" stroke="#e8e8e8" stroke-width="1"/>
<path d="M411.40 121.48A279.52 279.52 0 1 1 390.20 121.48" fill="none" stroke="#e8e8e8" stroke-width="1"/>
<path d="M411.40 241.61A159.54 159.54 0 1 1 390.20 241.61" fill="none" stroke="#e8e8e8" stroke-width="1"/>
<text x="400.6" y="5.4" text-anchor="middle" font-family="'DejaVu Sans Condensed','DejaVu Sans',sans-serif" font-size="9.4" fill="#ffff9e" letter-spacing="1.1">313</text>
<text x="400.6" y="125.4" text-anchor="middle" font-family="'DejaVu Sans Condensed','DejaVu Sans',sans-serif" font-size="9.4" fill="#ffff9e" letter-spacing="1.1">219</text>
<text x="400.6" y="245.4" text-anchor="middle" font-family="'DejaVu Sans Condensed','DejaVu Sans',sans-serif" font-size="9.4" fill="#ffff9e" letter-spacing="1.1">125</text>
<text x="400.6" y="365.3" text-anchor="middle" font-family="'DejaVu Sans Condensed','DejaVu Sans',sans-serif" font-size="9.4" fill="#ffff9e" letter-spacing="1.1">31</text>
<circle cx="400.8" cy="400.8" r="39.57" fill="none" stroke="#f00000" stroke-width="1"/></g></svg></div>
<div id="legend"><div></div></div><div id="copybox"></div>
<svg class="abs" style="left:0;top:0" width="812" height="812" viewBox="0 0 812 812"><circle cx="60.5" cy="780.5" r="4" fill="none" stroke="#00eaea" stroke-width="1"/><path d="M58.0 780.5H63.0" stroke="#00eaea" stroke-width="1"/><path d="M82.0 780.5H89.0" stroke="#00eaea" stroke-width="1.2"/><circle cx="110.5" cy="780.5" r="4" fill="none" stroke="#00eaea" stroke-width="1"/><path d="M108.0 780.5H113.0" stroke="#00eaea" stroke-width="1"/><path d="M110.5 778.0V783.0" stroke="#00eaea" stroke-width="1"/><path d="M132.0 780.5H139.0M135.5 777.0V784.0" stroke="#00eaea" stroke-width="1.2"/><circle cx="60.5" cy="793.5" r="4" fill="none" stroke="#ffff00" stroke-width="1"/><path d="M58.0 793.5H63.0" stroke="#ffff00" stroke-width="1"/><path d="M82.0 793.5H89.0" stroke="#ffff00" stroke-width="1.2"/><circle cx="110.5" cy="793.5" r="4" fill="none" stroke="#ffff00" stroke-width="1"/><path d="M108.0 793.5H113.0" stroke="#ffff00" stroke-width="1"/><path d="M110.5 791.0V796.0" stroke="#ffff00" stroke-width="1"/><path d="M132.0 793.5H139.0M135.5 790.0V797.0" stroke="#ffff00" stroke-width="1.2"/></svg>
<div class="panel" style="left:812px;top:8px;width:318px;height:318px"></div><div class="panel" style="left:812px;top:333px;width:318px;height:112px"></div><div class="panel" style="left:812px;top:453px;width:318px;height:348px"></div><div class="b" style="left:819px;top:16px;width:56px;height:16px;background:#5a0000;border-color:#c4c4c4;"></div><div class="b" style="left:883px;top:16px;width:56px;height:16px;background:#333;border-color:#c4c4c4;"></div><div class="b" style="left:994px;top:16px;width:126px;height:16px;background:#333;border-color:#c4c4c4;"></div><div class="b" style="left:821px;top:64px;width:80px;height:14px;background:#606060;border-color:#c4c4c4;"></div><div class="b" style="left:931px;top:64px;width:80px;height:14px;background:#606060;border-color:#c4c4c4;"></div><div class="b" style="left:1041px;top:64px;width:80px;height:14px;background:#606060;border-color:#c4c4c4;"></div><div class="hr" style="left:821px;top:217px;width:303px"></div><div class="hr" style="left:821px;top:358px;width:303px"></div><div class="bar" style="left:925px;top:227px"><div style="width:5px;background:#f00000"></div></div><div class="bar" style="left:1028px;top:227px"><div style="width:20px;background:#8ecbff"></div></div><div class="bar" style="left:925px;top:281px"><div style="width:10px;background:#e85fb0"></div></div><div class="bar" style="left:1028px;top:281px"><div style="width:15px;background:#00f000"></div></div>
<svg class="abs" style="left:0;top:0" width="1138" height="812" viewBox="0 0 1138 812"><g fill="none" stroke="#c0c0c0" stroke-width="1" shape-rendering="crispEdges"><path d="M1088.5 542.5V777.5H822.5" /><path d="M822.5 774.5V778"/><path d="M866.5 774.5V778"/><path d="M911.5 774.5V778"/><path d="M955.5 774.5V778"/><path d="M999.5 774.5V778"/><path d="M1044.5 774.5V778"/><path d="M1088.5 774.5V778"/><path d="M1084 542.5H1089"/><path d="M1086 581.5H1091"/><path d="M1084 620.5H1089"/><path d="M1086 660.5H1091"/><path d="M1084 699.5H1089"/><path d="M1086 738.5H1091"/><path d="M1084 777.5H1089"/></g></svg>
<span class="t" id="bstrike" style="top:18.35px;font:bold 12px/17px 'DejaVu Sans','Liberation Sans',sans-serif;color:#d0d0d0;letter-spacing:0.140px;left:823.80px;">STRIKE</span>
<span class="t" id="bnoise" style="top:18.35px;font:bold 12px/17px 'DejaVu Sans','Liberation Sans',sans-serif;color:#c8c8c8;letter-spacing:0.900px;left:889.60px;">NOISE</span>
<span class="t" id="bng" style="top:18.35px;font:bold 12px/17px 'DejaVu Sans','Liberation Sans',sans-serif;color:#fff;letter-spacing:0.243px;left:998.60px;">Bng 221°</span>
<span class="t" id="bmi" style="top:18.35px;font:bold 12px/17px 'DejaVu Sans','Liberation Sans',sans-serif;color:#00ee00;letter-spacing:0.300px;left:1075.60px;">338mi</span>
<span class="t" id="lsm" style="top:65.29px;font:11.3px/16px 'DejaVu Sans','Liberation Sans',sans-serif;color:#fff;letter-spacing:0.340px;left:828.40px;">Strikes/min</span>
<span class="t" id="lcm" style="top:65.29px;font:11.3px/16px 'DejaVu Sans','Liberation Sans',sans-serif;color:#fff;letter-spacing:0.375px;left:943.00px;">Close/min</span>
<span class="t" id="lnm" style="top:65.29px;font:11.3px/16px 'DejaVu Sans','Liberation Sans',sans-serif;color:#fff;letter-spacing:0.111px;left:1050.60px;">Noises/min</span>
<span class="t" id="z1" style="top:83.41px;font:bold 28px/39px 'DejaVu Sans','Liberation Sans',sans-serif;color:#fff;right:235.00px;">0</span>
<span class="t" id="z2" style="top:83.41px;font:bold 28px/39px 'DejaVu Sans','Liberation Sans',sans-serif;color:#fff;right:124.60px;">0</span>
<span class="t" id="z3" style="top:83.41px;font:bold 28px/39px 'DejaVu Sans','Liberation Sans',sans-serif;color:#b4b4b4;right:14.60px;">0</span>
<span class="t" id="ts" style="top:130.11px;font:12.4px/17px 'DejaVu Sans','Liberation Sans',sans-serif;color:#fff;letter-spacing:0.100px;left:826.90px;">Total Strikes</span>
<span class="t" id="tc" style="top:130.11px;font:12.4px/17px 'DejaVu Sans','Liberation Sans',sans-serif;color:#fff;letter-spacing:0.250px;left:944.00px;">Total Close</span>
<span class="t" id="tn" style="top:130.11px;font:12.4px/17px 'DejaVu Sans','Liberation Sans',sans-serif;color:#d0d0d0;letter-spacing:0.155px;left:1047.90px;">Total Noises</span>
<span class="t" id="ts2" style="top:148.01px;font:12.4px/17px 'DejaVu Sans','Liberation Sans',sans-serif;color:#fff;right:234.80px;">10</span>
<span class="t" id="tc2" style="top:148.01px;font:12.4px/17px 'DejaVu Sans','Liberation Sans',sans-serif;color:#fff;right:124.40px;">0</span>
<span class="t" id="tn2" style="top:148.01px;font:12.4px/17px 'DejaVu Sans','Liberation Sans',sans-serif;color:#fff;right:14.40px;">73</span>
<span class="t" id="ltd" style="top:201.81px;font:12.4px/17px 'DejaVu Sans','Liberation Sans',sans-serif;color:#c8c8c8;letter-spacing:0.085px;left:819.80px;">Lightning type distribution</span>
<span class="t" id="cg" style="top:224.38px;font:bold 12.5px/18px 'DejaVu Sans Condensed','DejaVu Sans','Liberation Sans',sans-serif;color:#fff;letter-spacing:-0.100px;left:820.80px;">Cloud-ground</span>
<span class="t" id="cgp" style="top:224.05px;font:12px/17px 'DejaVu Sans Condensed','DejaVu Sans','Liberation Sans',sans-serif;color:#c8c8c8;left:912.60px;">+</span>
<span class="t" id="cg10" style="top:225.12px;font:bold 11.8px/17px 'DejaVu Sans','Liberation Sans',sans-serif;color:#fff;letter-spacing:0.800px;left:979.00px;">10%</span>
<span class="t" id="cgm" style="top:225.05px;font:bold 12px/17px 'DejaVu Sans Condensed','DejaVu Sans','Liberation Sans',sans-serif;color:#c8c8c8;left:1014.20px;">−</span>
<span class="t" id="cg40" style="top:225.12px;font:bold 11.8px/17px 'DejaVu Sans','Liberation Sans',sans-serif;color:#fff;letter-spacing:1.200px;left:1081.60px;">40%</span>
<span class="t" id="cnt1" style="top:248.28px;font:bold 12.5px/18px 'DejaVu Sans Condensed','DejaVu Sans','Liberation Sans',sans-serif;color:#c8c8c8;left:820.80px;">Count</span>
<span class="t" id="cnt1a" style="top:248.28px;font:bold 12.5px/18px 'DejaVu Sans Condensed','DejaVu Sans','Liberation Sans',sans-serif;color:#fff;left:924.80px;">1</span>
<span class="t" id="cnt1b" style="top:248.28px;font:bold 12.5px/18px 'DejaVu Sans Condensed','DejaVu Sans','Liberation Sans',sans-serif;color:#fff;left:1027.80px;">4</span>
<span class="t" id="ic" style="top:278.57px;font:bold 12.5px/18px 'DejaVu Sans Condensed','DejaVu Sans','Liberation Sans',sans-serif;color:#fff;letter-spacing:-0.111px;left:820.20px;">Intracloud</span>
<span class="t" id="icp" style="top:278.25px;font:12px/17px 'DejaVu Sans Condensed','DejaVu Sans','Liberation Sans',sans-serif;color:#c8c8c8;left:912.60px;">+</span>
<span class="t" id="ic20" style="top:279.32px;font:bold 11.8px/17px 'DejaVu Sans','Liberation Sans',sans-serif;color:#fff;letter-spacing:0.800px;left:979.00px;">20%</span>
<span class="t" id="icm" style="top:279.25px;font:bold 12px/17px 'DejaVu Sans Condensed','DejaVu Sans','Liberation Sans',sans-serif;color:#c8c8c8;left:1014.20px;">−</span>
<span class="t" id="ic30" style="top:279.32px;font:bold 11.8px/17px 'DejaVu Sans','Liberation Sans',sans-serif;color:#fff;letter-spacing:1.200px;left:1081.60px;">30%</span>
<span class="t" id="cnt2" style="top:302.48px;font:bold 12.5px/18px 'DejaVu Sans Condensed','DejaVu Sans','Liberation Sans',sans-serif;color:#c8c8c8;left:820.80px;">Count</span>
<span class="t" id="cnt2a" style="top:302.48px;font:bold 12.5px/18px 'DejaVu Sans Condensed','DejaVu Sans','Liberation Sans',sans-serif;color:#fff;left:925.60px;">2</span>
<span class="t" id="cnt2b" style="top:302.48px;font:bold 12.5px/18px 'DejaVu Sans Condensed','DejaVu Sans','Liberation Sans',sans-serif;color:#fff;left:1027.80px;">3</span>
<span class="t" id="date" style="top:337.06px;font:bold 16px/22px 'DejaVu Sans','Liberation Sans',sans-serif;color:#00e400;letter-spacing:0.405px;left:820.20px;">1<i>/</i>30<i>/</i>2026 2:34:52 PM</span>
<span class="t" id="r0a" style="top:375.01px;font:12.4px/17px 'DejaVu Sans','Liberation Sans',sans-serif;color:#fff;left:820.80px;">Squelch</span>
<span class="t" id="r0b" style="top:375.01px;font:12.4px/17px 'DejaVu Sans','Liberation Sans',sans-serif;color:#fff;left:908.50px;">0</span>
<span class="t" id="r0c" style="top:375.01px;font:12.4px/17px 'DejaVu Sans','Liberation Sans',sans-serif;color:#fff;letter-spacing:0.280px;left:980.20px;">Upload</span>
<span class="t" id="r0d" style="top:375.01px;font:12.4px/17px 'DejaVu Sans','Liberation Sans',sans-serif;color:#c8c8c8;letter-spacing:0.300px;left:1059.80px;">Disabled</span>
<span class="t" id="r1a" style="top:395.01px;font:12.4px/17px 'DejaVu Sans','Liberation Sans',sans-serif;color:#fff;letter-spacing:0.340px;left:819.80px;">Persistence</span>
<span class="t" id="r1b" style="top:395.01px;font:12.4px/17px 'DejaVu Sans','Liberation Sans',sans-serif;color:#fff;letter-spacing:-0.140px;left:908.50px;">90 min</span>
<span class="t" id="r1c" style="top:395.01px;font:12.4px/17px 'DejaVu Sans','Liberation Sans',sans-serif;color:#fff;letter-spacing:0.417px;left:980.80px;">Capture</span>
<span class="t" id="r1d" style="top:395.01px;font:12.4px/17px 'DejaVu Sans','Liberation Sans',sans-serif;color:#00e400;letter-spacing:-0.280px;left:1060.80px;">Active</span>
<span class="t" id="r2a" style="top:415.01px;font:12.4px/17px 'DejaVu Sans','Liberation Sans',sans-serif;color:#fff;letter-spacing:0.650px;left:819.80px;">Range</span>
<span class="t" id="r2b" style="top:415.01px;font:12.4px/17px 'DejaVu Sans','Liberation Sans',sans-serif;color:#fff;letter-spacing:-0.140px;left:908.50px;">313 mi</span>
<span class="t" id="r2c" style="top:415.01px;font:12.4px/17px 'DejaVu Sans','Liberation Sans',sans-serif;color:#fff;letter-spacing:-0.100px;left:979.80px;">Receiver</span>
<span class="t" id="r2d" style="top:415.01px;font:12.4px/17px 'DejaVu Sans','Liberation Sans',sans-serif;color:#00e400;letter-spacing:0.333px;left:1059.80px;">Enabled</span>
<span class="t" id="up" style="top:461.81px;font:12.4px/17px 'DejaVu Sans','Liberation Sans',sans-serif;color:#c8c8c8;letter-spacing:-0.140px;left:820.20px;">Uptime</span>
<span class="t" id="upv" style="top:461.81px;font:12.4px/17px 'DejaVu Sans','Liberation Sans',sans-serif;color:#fff;letter-spacing:0.160px;left:909.80px;">458:19</span>
<span class="t" id="pt" style="top:461.81px;font:12.4px/17px 'DejaVu Sans','Liberation Sans',sans-serif;color:#c8c8c8;letter-spacing:0.125px;left:979.80px;">Peak time</span>
<span class="t" id="pl" style="top:461.81px;font:12.4px/17px 'DejaVu Sans','Liberation Sans',sans-serif;color:#c8c8c8;letter-spacing:0.533px;left:1059.80px;">Plot</span>
<span class="t" id="pr" style="top:484.81px;font:12.4px/17px 'DejaVu Sans','Liberation Sans',sans-serif;color:#c8c8c8;letter-spacing:0.438px;left:819.80px;">Peak rate</span>
<span class="t" id="prv" style="top:484.81px;font:12.4px/17px 'DejaVu Sans','Liberation Sans',sans-serif;color:#fff;left:909.80px;">2/min</span>
<span class="t" id="ptv" style="top:484.81px;font:12.4px/17px 'DejaVu Sans','Liberation Sans',sans-serif;color:#fff;left:980.80px;">4:12 AM</span>
<span class="t" id="plv" style="top:484.81px;font:12.4px/17px 'DejaVu Sans','Liberation Sans',sans-serif;color:#fff;left:1060.80px;">Strike</span>
<span class="t" id="tg" style="top:514.71px;font:12.4px/17px 'DejaVu Sans','Liberation Sans',sans-serif;color:#c8c8c8;letter-spacing:0.220px;left:822.40px;">Trend graph</span>
<span class="t" id="tgv" style="top:514.71px;font:12.4px/17px 'DejaVu Sans','Liberation Sans',sans-serif;color:#fff;letter-spacing:-0.220px;left:908.80px;">60 min</span>
<span class="t" id="gx0" style="top:781.22px;font:11.5px/16px 'DejaVu Sans Condensed','DejaVu Sans','Liberation Sans',sans-serif;color:#c8c8c8;left:820.60px;">60</span>
<span class="t" id="gx1" style="top:781.22px;font:11.5px/16px 'DejaVu Sans Condensed','DejaVu Sans','Liberation Sans',sans-serif;color:#c8c8c8;left:863.94px;">50</span>
<span class="t" id="gx2" style="top:781.22px;font:11.5px/16px 'DejaVu Sans Condensed','DejaVu Sans','Liberation Sans',sans-serif;color:#c8c8c8;left:908.68px;">40</span>
<span class="t" id="gx3" style="top:781.22px;font:11.5px/16px 'DejaVu Sans Condensed','DejaVu Sans','Liberation Sans',sans-serif;color:#c8c8c8;letter-spacing:0.400px;left:953.13px;">30</span>
<span class="t" id="gx4" style="top:781.22px;font:11.5px/16px 'DejaVu Sans Condensed','DejaVu Sans','Liberation Sans',sans-serif;color:#c8c8c8;left:997.16px;">20</span>
<span class="t" id="gx5" style="top:781.22px;font:11.5px/16px 'DejaVu Sans Condensed','DejaVu Sans','Liberation Sans',sans-serif;color:#c8c8c8;letter-spacing:1.700px;left:1040.90px;">10</span>
<span class="t" id="gx6" style="top:781.22px;font:11.5px/16px 'DejaVu Sans Condensed','DejaVu Sans','Liberation Sans',sans-serif;color:#c8c8c8;left:1086.50px;">0</span>
<span class="t" id="gmin" style="top:781.22px;font:11.5px/16px 'DejaVu Sans Condensed','DejaVu Sans','Liberation Sans',sans-serif;color:#c8c8c8;letter-spacing:-0.900px;left:1100.70px;">min</span>
<span class="t" id="gy0" style="top:534.92px;font:11.5px/16px 'DejaVu Sans Condensed','DejaVu Sans','Liberation Sans',sans-serif;color:#c8c8c8;left:1091.60px;">30</span>
<span class="t" id="gy1" style="top:613.32px;font:11.5px/16px 'DejaVu Sans Condensed','DejaVu Sans','Liberation Sans',sans-serif;color:#c8c8c8;left:1091.60px;">20</span>
<span class="t" id="gy2" style="top:691.72px;font:11.5px/16px 'DejaVu Sans Condensed','DejaVu Sans','Liberation Sans',sans-serif;color:#c8c8c8;letter-spacing:1.700px;left:1090.90px;">10</span>
<span class="t" id="lgs" style="top:761.45px;font:9.4px/13px 'DejaVu Sans Condensed','DejaVu Sans','Liberation Sans',sans-serif;color:#f0f0f0;left:13.10px;">Symbols</span>
<span class="t" id="lgr" style="top:774.45px;font:9.4px/13px 'DejaVu Sans Condensed','DejaVu Sans','Liberation Sans',sans-serif;color:#f0f0f0;left:12.20px;">Recent</span>
<span class="t" id="lgo" style="top:787.35px;font:9.4px/13px 'DejaVu Sans Condensed','DejaVu Sans','Liberation Sans',sans-serif;color:#f0f0f0;left:13.10px;">Old</span>
<span class="t" id="lg1" style="top:761.45px;font:9.4px/13px 'DejaVu Sans Condensed','DejaVu Sans','Liberation Sans',sans-serif;color:#f0f0f0;letter-spacing:1.400px;left:52.40px;">-CG</span>
<span class="t" id="lg2" style="top:761.45px;font:9.4px/13px 'DejaVu Sans Condensed','DejaVu Sans','Liberation Sans',sans-serif;color:#f0f0f0;letter-spacing:1.450px;left:78.00px;">-IC</span>
<span class="t" id="lg3" style="top:761.45px;font:9.4px/13px 'DejaVu Sans Condensed','DejaVu Sans','Liberation Sans',sans-serif;color:#f0f0f0;letter-spacing:1.000px;left:98.20px;">+CG</span>
<span class="t" id="lg4" style="top:761.45px;font:9.4px/13px 'DejaVu Sans Condensed','DejaVu Sans','Liberation Sans',sans-serif;color:#f0f0f0;letter-spacing:1.200px;left:123.40px;">+IC</span>
<span class="t" id="lg5" style="top:761.45px;font:9.4px/13px 'DejaVu Sans Condensed','DejaVu Sans','Liberation Sans',sans-serif;color:#f0f0f0;letter-spacing:-0.100px;left:152.40px;">Strike age color codes</span>
<span class="t" id="la0" style="top:774.45px;font:9.4px/13px 'DejaVu Sans Condensed','DejaVu Sans','Liberation Sans',sans-serif;color:#ffdc00;letter-spacing:-0.200px;left:153.40px;">15+</span>
<span class="t" id="la1" style="top:774.45px;font:9.4px/13px 'DejaVu Sans Condensed','DejaVu Sans','Liberation Sans',sans-serif;color:#ffaa00;letter-spacing:-0.200px;left:187.35px;">30+</span>
<span class="t" id="la2" style="top:774.45px;font:9.4px/13px 'DejaVu Sans Condensed','DejaVu Sans','Liberation Sans',sans-serif;color:#ff8c00;letter-spacing:-0.600px;left:223.10px;">45+</span>
<span class="t" id="lb0" style="top:787.35px;font:9.4px/13px 'DejaVu Sans Condensed','DejaVu Sans','Liberation Sans',sans-serif;color:#ff6e00;letter-spacing:-0.600px;left:153.80px;">60+</span>
<span class="t" id="lb1" style="top:787.35px;font:9.4px/13px 'DejaVu Sans Condensed','DejaVu Sans','Liberation Sans',sans-serif;color:#ff5000;letter-spacing:-0.200px;left:187.35px;">75+</span>
<span class="t" id="lb2" style="top:787.35px;font:9.4px/13px 'DejaVu Sans Condensed','DejaVu Sans','Liberation Sans',sans-serif;color:#ff2800;letter-spacing:-0.600px;left:223.10px;">90+</span>
<span class="t" id="copy" style="top:792.91px;font:9.5px/13px 'DejaVu Sans Condensed','DejaVu Sans','Liberation Sans',sans-serif;color:#fff;letter-spacing:-0.130px;left:687.60px;">©2005 Astrogenic Systems</span>
</body></html>
